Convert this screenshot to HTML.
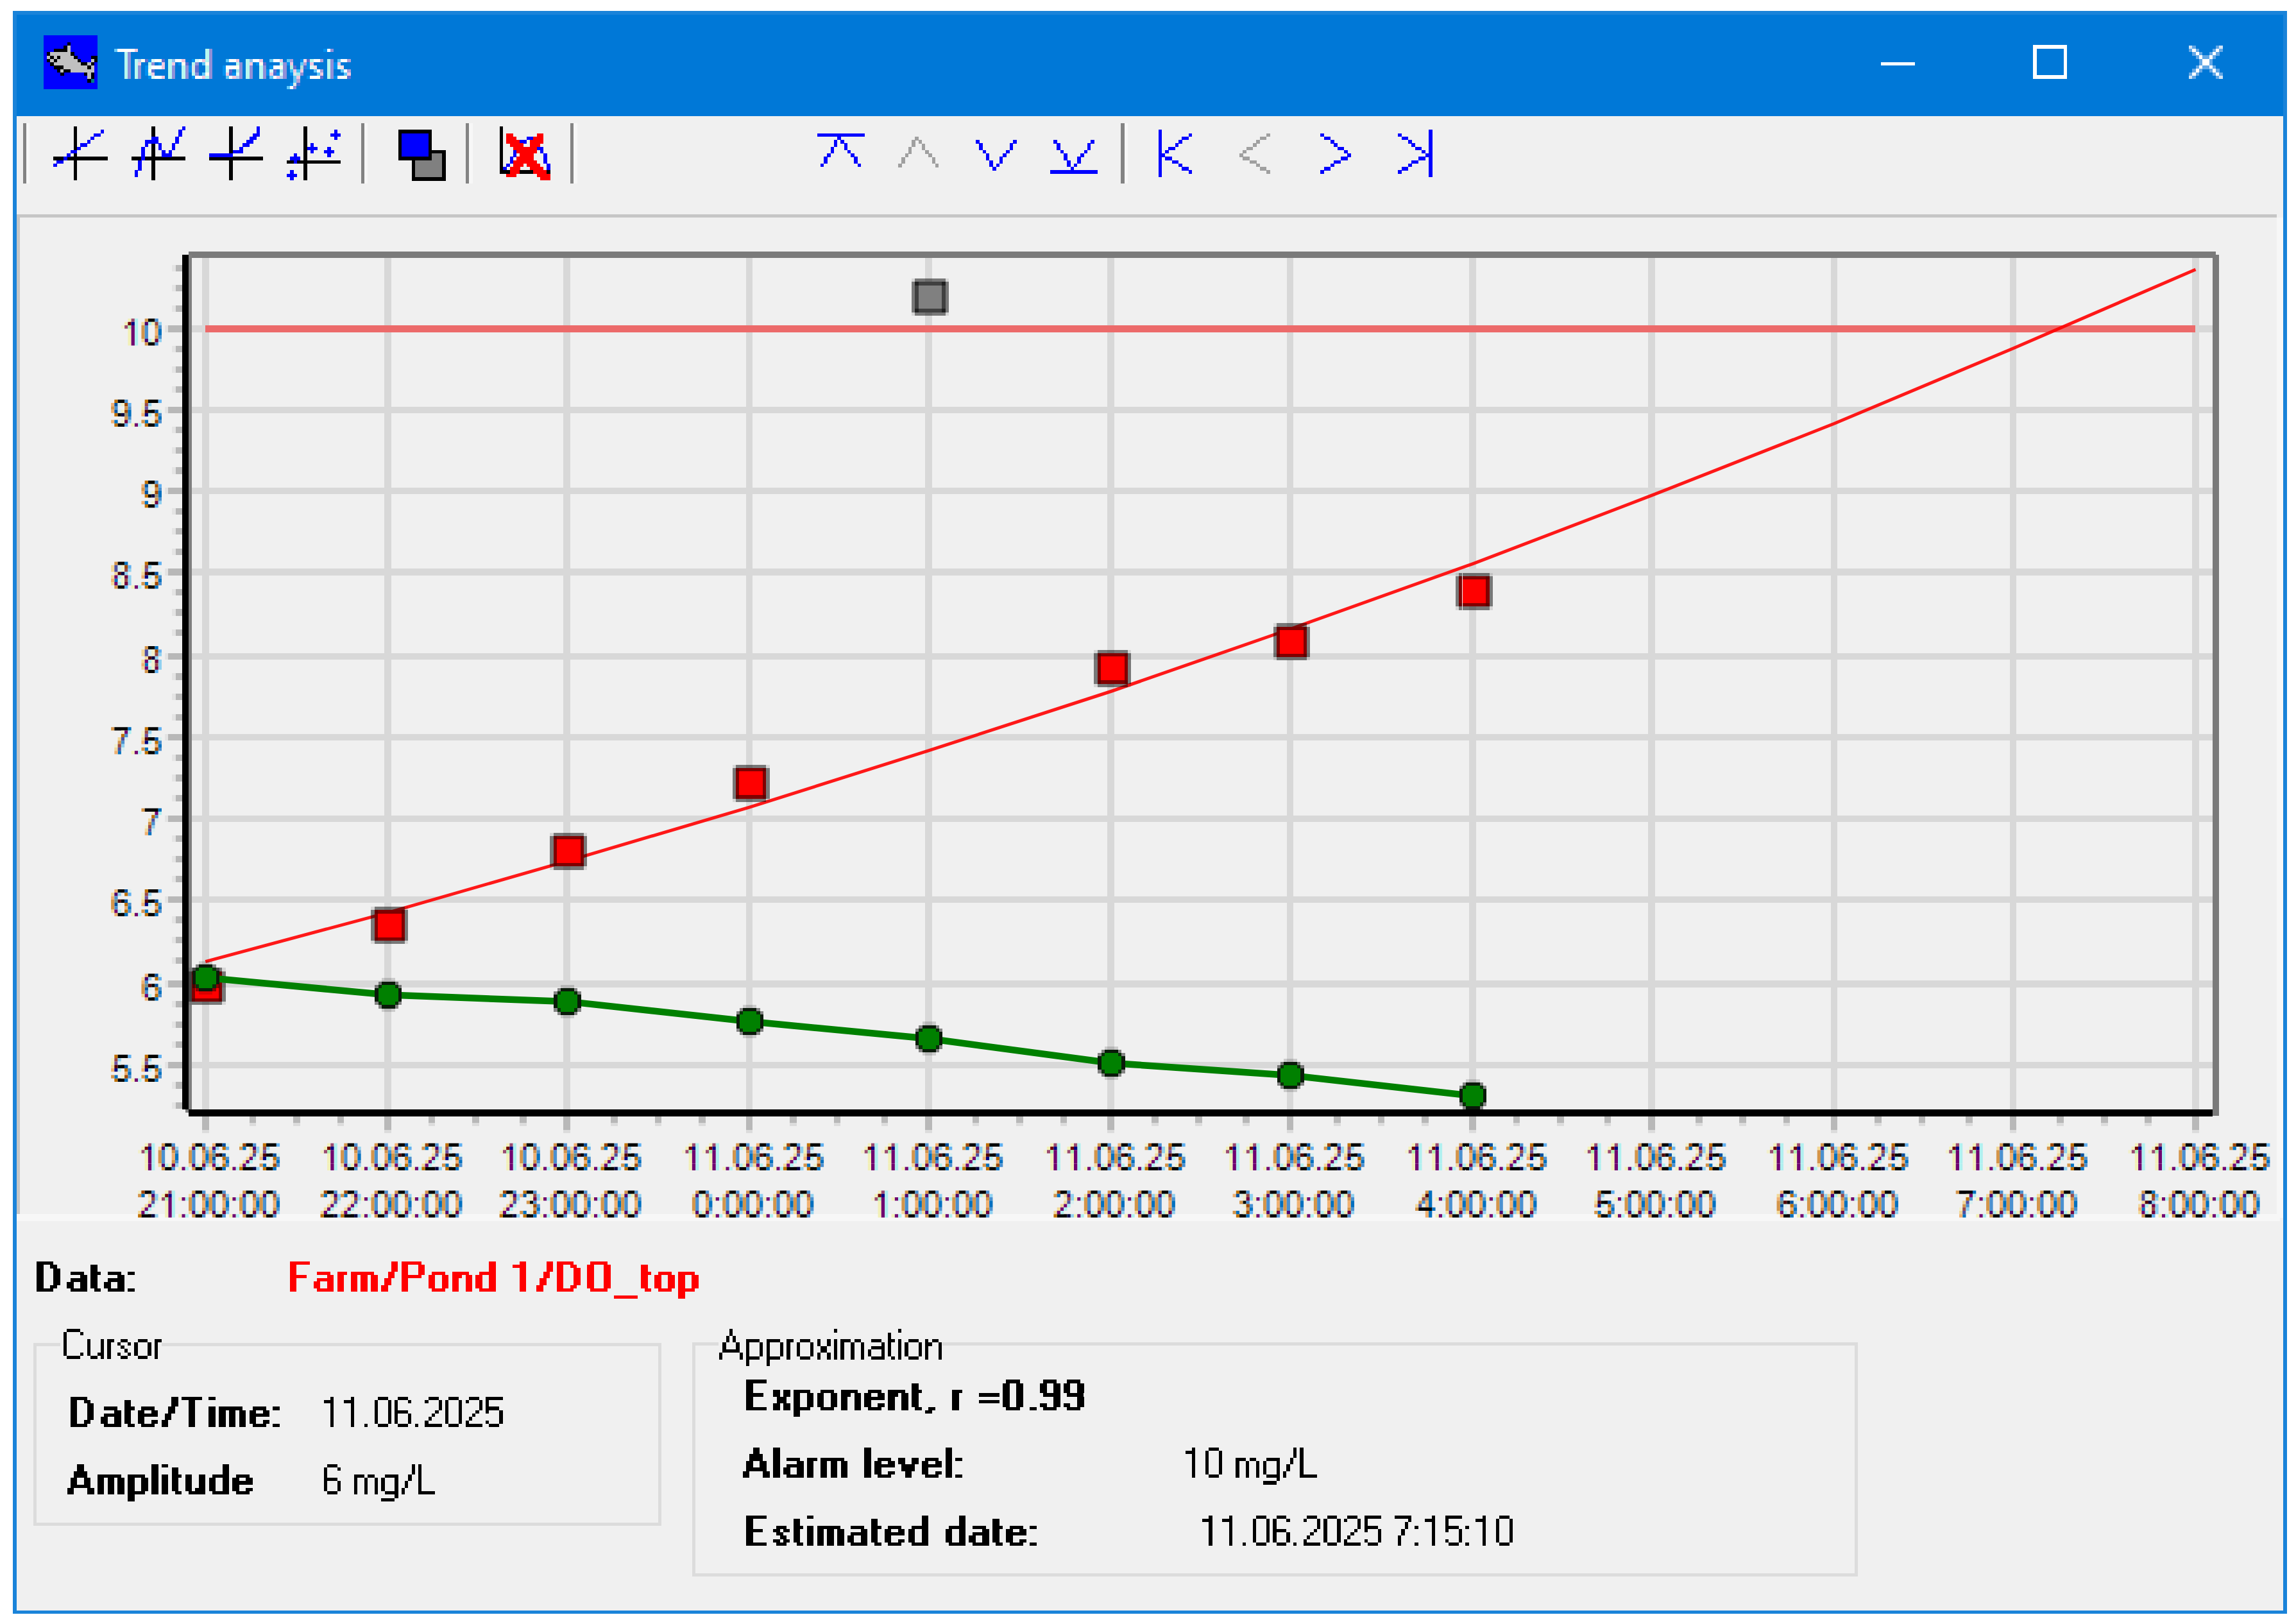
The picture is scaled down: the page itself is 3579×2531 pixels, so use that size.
<!DOCTYPE html>
<html><head><meta charset="utf-8"><title>Trend anaysis</title>
<style>html,body{margin:0;padding:0;background:#fff;width:3579px;height:2531px;overflow:hidden}svg{display:block}rect{shape-rendering:crispEdges}text{font-family:"Liberation Sans",sans-serif}</style>
</head><body>
<svg xmlns="http://www.w3.org/2000/svg" width="3579" height="2531" viewBox="0 0 3579 2531">
<rect x="0.00" y="0.00" width="3579.00" height="2531.00" fill="#ffffff" />
<rect x="20.00" y="17.00" width="3545.00" height="2498.00" fill="#1a83d9" />
<rect x="25.60" y="23.00" width="3533.40" height="158.00" fill="#0078d7" />
<rect x="25.60" y="181.00" width="3533.40" height="2328.50" fill="#f0f0f0" />
<rect x="67.90" y="55.00" width="84.21" height="84.21" fill="#0000ff" />
<rect x="104.74" y="65.53" width="5.56" height="5.56" fill="#000000" />
<rect x="99.48" y="70.79" width="5.56" height="5.56" fill="#000000" />
<rect x="104.74" y="70.79" width="5.56" height="5.56" fill="#c0c0c0" />
<rect x="83.69" y="76.05" width="5.56" height="5.56" fill="#000000" />
<rect x="88.95" y="76.05" width="5.56" height="5.56" fill="#000000" />
<rect x="94.22" y="76.05" width="5.56" height="5.56" fill="#000000" />
<rect x="99.48" y="76.05" width="5.56" height="5.56" fill="#000000" />
<rect x="104.74" y="76.05" width="5.56" height="5.56" fill="#c0c0c0" />
<rect x="73.16" y="81.31" width="5.56" height="5.56" fill="#000000" />
<rect x="78.43" y="81.31" width="5.56" height="5.56" fill="#c0c0c0" />
<rect x="83.69" y="81.31" width="5.56" height="5.56" fill="#c0c0c0" />
<rect x="88.95" y="81.31" width="5.56" height="5.56" fill="#c0c0c0" />
<rect x="94.22" y="81.31" width="5.56" height="5.56" fill="#c0c0c0" />
<rect x="99.48" y="81.31" width="5.56" height="5.56" fill="#c0c0c0" />
<rect x="104.74" y="81.31" width="5.56" height="5.56" fill="#c0c0c0" />
<rect x="110.00" y="81.31" width="5.56" height="5.56" fill="#000000" />
<rect x="73.16" y="86.58" width="5.56" height="5.56" fill="#c0c0c0" />
<rect x="78.43" y="86.58" width="5.56" height="5.56" fill="#000000" />
<rect x="83.69" y="86.58" width="5.56" height="5.56" fill="#c0c0c0" />
<rect x="88.95" y="86.58" width="5.56" height="5.56" fill="#000000" />
<rect x="94.22" y="86.58" width="5.56" height="5.56" fill="#c0c0c0" />
<rect x="99.48" y="86.58" width="5.56" height="5.56" fill="#c0c0c0" />
<rect x="104.74" y="86.58" width="5.56" height="5.56" fill="#c0c0c0" />
<rect x="110.00" y="86.58" width="5.56" height="5.56" fill="#c0c0c0" />
<rect x="115.27" y="86.58" width="5.56" height="5.56" fill="#000000" />
<rect x="141.58" y="86.58" width="5.56" height="5.56" fill="#000000" />
<rect x="146.84" y="86.58" width="5.56" height="5.56" fill="#000000" />
<rect x="73.16" y="91.84" width="5.56" height="5.56" fill="#000000" />
<rect x="78.43" y="91.84" width="5.56" height="5.56" fill="#c0c0c0" />
<rect x="83.69" y="91.84" width="5.56" height="5.56" fill="#000000" />
<rect x="88.95" y="91.84" width="5.56" height="5.56" fill="#c0c0c0" />
<rect x="94.22" y="91.84" width="5.56" height="5.56" fill="#c0c0c0" />
<rect x="99.48" y="91.84" width="5.56" height="5.56" fill="#c0c0c0" />
<rect x="104.74" y="91.84" width="5.56" height="5.56" fill="#c0c0c0" />
<rect x="110.00" y="91.84" width="5.56" height="5.56" fill="#c0c0c0" />
<rect x="115.27" y="91.84" width="5.56" height="5.56" fill="#c0c0c0" />
<rect x="120.53" y="91.84" width="5.56" height="5.56" fill="#000000" />
<rect x="141.58" y="91.84" width="5.56" height="5.56" fill="#c0c0c0" />
<rect x="146.84" y="91.84" width="5.56" height="5.56" fill="#000000" />
<rect x="78.43" y="97.10" width="5.56" height="5.56" fill="#000000" />
<rect x="83.69" y="97.10" width="5.56" height="5.56" fill="#c0c0c0" />
<rect x="88.95" y="97.10" width="5.56" height="5.56" fill="#c0c0c0" />
<rect x="94.22" y="97.10" width="5.56" height="5.56" fill="#c0c0c0" />
<rect x="99.48" y="97.10" width="5.56" height="5.56" fill="#c0c0c0" />
<rect x="104.74" y="97.10" width="5.56" height="5.56" fill="#c0c0c0" />
<rect x="110.00" y="97.10" width="5.56" height="5.56" fill="#c0c0c0" />
<rect x="115.27" y="97.10" width="5.56" height="5.56" fill="#c0c0c0" />
<rect x="120.53" y="97.10" width="5.56" height="5.56" fill="#c0c0c0" />
<rect x="125.79" y="97.10" width="5.56" height="5.56" fill="#000000" />
<rect x="131.06" y="97.10" width="5.56" height="5.56" fill="#000000" />
<rect x="136.32" y="97.10" width="5.56" height="5.56" fill="#c0c0c0" />
<rect x="141.58" y="97.10" width="5.56" height="5.56" fill="#000000" />
<rect x="83.69" y="102.37" width="5.56" height="5.56" fill="#000000" />
<rect x="88.95" y="102.37" width="5.56" height="5.56" fill="#000000" />
<rect x="94.22" y="102.37" width="5.56" height="5.56" fill="#000000" />
<rect x="99.48" y="102.37" width="5.56" height="5.56" fill="#c0c0c0" />
<rect x="104.74" y="102.37" width="5.56" height="5.56" fill="#c0c0c0" />
<rect x="110.00" y="102.37" width="5.56" height="5.56" fill="#c0c0c0" />
<rect x="115.27" y="102.37" width="5.56" height="5.56" fill="#c0c0c0" />
<rect x="120.53" y="102.37" width="5.56" height="5.56" fill="#c0c0c0" />
<rect x="125.79" y="102.37" width="5.56" height="5.56" fill="#c0c0c0" />
<rect x="131.06" y="102.37" width="5.56" height="5.56" fill="#c0c0c0" />
<rect x="136.32" y="102.37" width="5.56" height="5.56" fill="#000000" />
<rect x="141.58" y="102.37" width="5.56" height="5.56" fill="#c0c0c0" />
<rect x="88.95" y="107.63" width="5.56" height="5.56" fill="#000000" />
<rect x="94.22" y="107.63" width="5.56" height="5.56" fill="#c0c0c0" />
<rect x="99.48" y="107.63" width="5.56" height="5.56" fill="#000000" />
<rect x="104.74" y="107.63" width="5.56" height="5.56" fill="#000000" />
<rect x="110.00" y="107.63" width="5.56" height="5.56" fill="#c0c0c0" />
<rect x="115.27" y="107.63" width="5.56" height="5.56" fill="#c0c0c0" />
<rect x="120.53" y="107.63" width="5.56" height="5.56" fill="#c0c0c0" />
<rect x="125.79" y="107.63" width="5.56" height="5.56" fill="#c0c0c0" />
<rect x="131.06" y="107.63" width="5.56" height="5.56" fill="#c0c0c0" />
<rect x="136.32" y="107.63" width="5.56" height="5.56" fill="#c0c0c0" />
<rect x="141.58" y="107.63" width="5.56" height="5.56" fill="#c0c0c0" />
<rect x="94.22" y="112.89" width="5.56" height="5.56" fill="#000000" />
<rect x="131.06" y="112.89" width="5.56" height="5.56" fill="#000000" />
<rect x="136.32" y="112.89" width="5.56" height="5.56" fill="#c0c0c0" />
<rect x="141.58" y="112.89" width="5.56" height="5.56" fill="#000000" />
<rect x="136.32" y="118.16" width="5.56" height="5.56" fill="#c0c0c0" />
<rect x="141.58" y="118.16" width="5.56" height="5.56" fill="#000000" />
<rect x="136.32" y="123.42" width="5.56" height="5.56" fill="#000000" />
<rect x="141.58" y="123.42" width="5.56" height="5.56" fill="#008080" />
<path d="M178.15 76.04h5.26v5.26h-5.26zM351.83 91.83h5.26v5.26h-5.26zM420.25 91.83h5.26v5.26h-5.26zM446.56 91.83h5.26v5.26h-5.26zM525.51 91.83h5.26v5.26h-5.26zM314.99 97.09h5.26v5.26h-5.26zM467.62 97.09h5.26v5.26h-5.26zM488.67 107.62h5.26v5.26h-5.26zM530.77 107.62h5.26v5.26h-5.26zM314.99 112.88h5.26v5.26h-5.26zM493.93 112.88h5.26v5.26h-5.26zM536.03 112.88h5.26v5.26h-5.26zM351.83 118.14h5.26v5.26h-5.26zM420.25 118.14h5.26v5.26h-5.26zM457.09 118.14h5.26v5.26h-5.26zM457.09 123.41h5.26v5.26h-5.26zM446.56 133.93h5.26v5.26h-5.26z" fill="#60c8f8" shape-rendering="crispEdges"/><path d="M183.41 76.04h26.31v5.26h-26.31zM509.72 76.04h5.26v5.26h-5.26zM241.31 91.83h5.26v5.26h-5.26zM272.88 91.83h10.53v5.26h-10.53zM309.73 91.83h5.26v5.26h-5.26zM357.09 91.83h10.53v5.26h-10.53zM393.93 91.83h10.53v5.26h-10.53zM425.51 91.83h10.53v5.26h-10.53zM488.67 91.83h10.53v5.26h-10.53zM530.77 91.83h10.53v5.26h-10.53zM236.04 102.36h15.79v5.26h-15.79zM351.83 102.36h15.79v5.26h-15.79zM425.51 102.36h10.53v5.26h-10.53zM493.93 107.62h5.26v5.26h-5.26zM536.03 107.62h5.26v5.26h-5.26zM241.31 118.14h10.53v5.26h-10.53zM304.46 118.14h10.53v5.26h-10.53zM357.09 118.14h5.26v5.26h-5.26zM425.51 118.14h5.26v5.26h-5.26zM483.40 118.14h10.53v5.26h-10.53zM525.51 118.14h10.53v5.26h-10.53zM451.83 133.93h5.26v5.26h-5.26z" fill="#ffffff" shape-rendering="crispEdges"/><path d="M209.73 76.04h5.26v5.26h-5.26zM283.41 91.83h5.26v5.26h-5.26zM314.99 91.83h5.26v5.26h-5.26zM367.62 91.83h5.26v5.26h-5.26zM404.46 91.83h5.26v5.26h-5.26zM436.04 91.83h5.26v5.26h-5.26zM214.99 97.09h5.26v5.26h-5.26zM251.83 97.09h5.26v5.26h-5.26zM267.62 97.09h5.26v5.26h-5.26zM388.67 97.09h5.26v5.26h-5.26zM451.83 97.09h5.26v5.26h-5.26zM483.40 97.09h5.26v5.26h-5.26zM525.51 97.09h5.26v5.26h-5.26zM251.83 102.36h5.26v5.26h-5.26zM457.09 107.62h5.26v5.26h-5.26zM467.62 107.62h5.26v5.26h-5.26zM236.04 112.88h5.26v5.26h-5.26zM351.83 112.88h5.26v5.26h-5.26zM420.25 112.88h5.26v5.26h-5.26zM499.19 112.88h5.26v5.26h-5.26zM541.30 112.88h5.26v5.26h-5.26zM251.83 118.14h5.26v5.26h-5.26zM314.99 118.14h5.26v5.26h-5.26zM362.36 118.14h5.26v5.26h-5.26zM430.77 118.14h5.26v5.26h-5.26zM462.35 118.14h5.26v5.26h-5.26z" fill="#f0c8e0" shape-rendering="crispEdges"/><path d="M320.25 76.04h5.26v5.26h-5.26zM193.94 81.30h5.26v5.26h-5.26zM320.25 81.30h5.26v5.26h-5.26zM193.94 86.57h5.26v5.26h-5.26zM320.25 86.57h5.26v5.26h-5.26zM193.94 91.83h5.26v5.26h-5.26zM209.73 91.83h5.26v5.26h-5.26zM262.36 91.83h5.26v5.26h-5.26zM320.25 91.83h5.26v5.26h-5.26zM383.41 91.83h5.26v5.26h-5.26zM483.40 91.83h5.26v5.26h-5.26zM509.72 91.83h5.26v5.26h-5.26zM193.94 97.09h5.26v5.26h-5.26zM209.73 97.09h5.26v5.26h-5.26zM230.78 97.09h5.26v5.26h-5.26zM262.36 97.09h5.26v5.26h-5.26zM299.20 97.09h5.26v5.26h-5.26zM367.62 97.09h5.26v5.26h-5.26zM383.41 97.09h5.26v5.26h-5.26zM436.04 97.09h5.26v5.26h-5.26zM509.72 97.09h5.26v5.26h-5.26zM193.94 102.36h5.26v5.26h-5.26zM209.73 102.36h5.26v5.26h-5.26zM262.36 102.36h5.26v5.26h-5.26zM283.41 102.36h5.26v5.26h-5.26zM320.25 102.36h5.26v5.26h-5.26zM383.41 102.36h5.26v5.26h-5.26zM404.46 102.36h5.26v5.26h-5.26zM509.72 102.36h5.26v5.26h-5.26zM193.94 107.62h5.26v5.26h-5.26zM209.73 107.62h5.26v5.26h-5.26zM262.36 107.62h5.26v5.26h-5.26zM283.41 107.62h5.26v5.26h-5.26zM320.25 107.62h5.26v5.26h-5.26zM383.41 107.62h5.26v5.26h-5.26zM404.46 107.62h5.26v5.26h-5.26zM509.72 107.62h5.26v5.26h-5.26zM193.94 112.88h5.26v5.26h-5.26zM209.73 112.88h5.26v5.26h-5.26zM230.78 112.88h5.26v5.26h-5.26zM262.36 112.88h5.26v5.26h-5.26zM283.41 112.88h5.26v5.26h-5.26zM299.20 112.88h5.26v5.26h-5.26zM383.41 112.88h5.26v5.26h-5.26zM404.46 112.88h5.26v5.26h-5.26zM509.72 112.88h5.26v5.26h-5.26zM193.94 118.14h5.26v5.26h-5.26zM209.73 118.14h5.26v5.26h-5.26zM262.36 118.14h5.26v5.26h-5.26zM283.41 118.14h5.26v5.26h-5.26zM320.25 118.14h5.26v5.26h-5.26zM383.41 118.14h5.26v5.26h-5.26zM404.46 118.14h5.26v5.26h-5.26zM509.72 118.14h5.26v5.26h-5.26z" fill="#b8f8f0" shape-rendering="crispEdges"/><path d="M325.51 76.04h5.26v5.26h-5.26zM514.98 76.04h5.26v5.26h-5.26zM199.20 81.30h5.26v5.26h-5.26zM325.51 81.30h5.26v5.26h-5.26zM199.20 86.57h5.26v5.26h-5.26zM325.51 86.57h5.26v5.26h-5.26zM199.20 91.83h5.26v5.26h-5.26zM325.51 91.83h5.26v5.26h-5.26zM514.98 91.83h5.26v5.26h-5.26zM199.20 97.09h5.26v5.26h-5.26zM236.04 97.09h5.26v5.26h-5.26zM304.46 97.09h5.26v5.26h-5.26zM325.51 97.09h5.26v5.26h-5.26zM372.88 97.09h5.26v5.26h-5.26zM441.30 97.09h5.26v5.26h-5.26zM514.98 97.09h5.26v5.26h-5.26zM199.20 102.36h5.26v5.26h-5.26zM214.99 102.36h5.26v5.26h-5.26zM267.62 102.36h5.26v5.26h-5.26zM288.67 102.36h5.26v5.26h-5.26zM325.51 102.36h5.26v5.26h-5.26zM372.88 102.36h5.26v5.26h-5.26zM388.67 102.36h5.26v5.26h-5.26zM409.72 102.36h5.26v5.26h-5.26zM441.30 102.36h5.26v5.26h-5.26zM514.98 102.36h5.26v5.26h-5.26zM199.20 107.62h5.26v5.26h-5.26zM214.99 107.62h5.26v5.26h-5.26zM267.62 107.62h5.26v5.26h-5.26zM288.67 107.62h5.26v5.26h-5.26zM325.51 107.62h5.26v5.26h-5.26zM372.88 107.62h5.26v5.26h-5.26zM388.67 107.62h5.26v5.26h-5.26zM409.72 107.62h5.26v5.26h-5.26zM441.30 107.62h5.26v5.26h-5.26zM514.98 107.62h5.26v5.26h-5.26zM199.20 112.88h5.26v5.26h-5.26zM214.99 112.88h5.26v5.26h-5.26zM267.62 112.88h5.26v5.26h-5.26zM288.67 112.88h5.26v5.26h-5.26zM304.46 112.88h5.26v5.26h-5.26zM325.51 112.88h5.26v5.26h-5.26zM372.88 112.88h5.26v5.26h-5.26zM388.67 112.88h5.26v5.26h-5.26zM409.72 112.88h5.26v5.26h-5.26zM441.30 112.88h5.26v5.26h-5.26zM467.62 112.88h5.26v5.26h-5.26zM514.98 112.88h5.26v5.26h-5.26zM199.20 118.14h5.26v5.26h-5.26zM214.99 118.14h5.26v5.26h-5.26zM267.62 118.14h5.26v5.26h-5.26zM288.67 118.14h5.26v5.26h-5.26zM325.51 118.14h5.26v5.26h-5.26zM372.88 118.14h5.26v5.26h-5.26zM388.67 118.14h5.26v5.26h-5.26zM409.72 118.14h5.26v5.26h-5.26zM441.30 118.14h5.26v5.26h-5.26zM514.98 118.14h5.26v5.26h-5.26zM457.09 133.93h5.26v5.26h-5.26z" fill="#9090d8" shape-rendering="crispEdges"/><path d="M504.46 76.04h5.26v5.26h-5.26zM230.78 91.83h5.26v5.26h-5.26zM299.20 91.83h5.26v5.26h-5.26zM467.62 91.83h5.26v5.26h-5.26zM246.57 97.09h5.26v5.26h-5.26zM278.15 97.09h5.26v5.26h-5.26zM399.20 97.09h5.26v5.26h-5.26zM446.56 97.09h5.26v5.26h-5.26zM478.14 97.09h5.26v5.26h-5.26zM520.25 97.09h5.26v5.26h-5.26zM225.52 102.36h5.26v5.26h-5.26zM293.94 102.36h5.26v5.26h-5.26zM346.57 102.36h5.26v5.26h-5.26zM420.25 102.36h5.26v5.26h-5.26zM478.14 102.36h5.26v5.26h-5.26zM520.25 102.36h5.26v5.26h-5.26zM225.52 107.62h5.26v5.26h-5.26zM293.94 107.62h5.26v5.26h-5.26zM346.57 107.62h5.26v5.26h-5.26zM414.99 107.62h5.26v5.26h-5.26zM225.52 112.88h5.26v5.26h-5.26zM346.57 112.88h5.26v5.26h-5.26zM362.36 112.88h5.26v5.26h-5.26zM414.99 112.88h5.26v5.26h-5.26zM430.77 112.88h5.26v5.26h-5.26zM451.83 112.88h5.26v5.26h-5.26zM230.78 118.14h5.26v5.26h-5.26zM299.20 118.14h5.26v5.26h-5.26zM478.14 118.14h5.26v5.26h-5.26zM520.25 118.14h5.26v5.26h-5.26zM451.83 128.67h5.26v5.26h-5.26z" fill="#0090f0" shape-rendering="crispEdges"/><path d="M214.99 91.83h5.26v5.26h-5.26zM367.62 118.14h5.26v5.26h-5.26zM436.04 118.14h5.26v5.26h-5.26z" fill="#b8d0f0" shape-rendering="crispEdges"/><path d="M220.25 91.83h5.26v5.26h-5.26zM246.57 91.83h5.26v5.26h-5.26zM283.41 97.09h5.26v5.26h-5.26zM320.25 97.09h5.26v5.26h-5.26zM404.46 97.09h5.26v5.26h-5.26zM367.62 102.36h5.26v5.26h-5.26zM436.04 102.36h5.26v5.26h-5.26zM230.78 107.62h5.26v5.26h-5.26zM320.25 112.88h5.26v5.26h-5.26zM493.93 118.14h5.26v5.26h-5.26zM536.03 118.14h5.26v5.26h-5.26z" fill="#fffff0" shape-rendering="crispEdges"/><path d="M225.52 91.83h5.26v5.26h-5.26zM251.83 91.83h5.26v5.26h-5.26zM478.14 91.83h5.26v5.26h-5.26zM288.67 97.09h5.26v5.26h-5.26zM409.72 97.09h5.26v5.26h-5.26zM304.46 102.36h5.26v5.26h-5.26zM457.09 102.36h5.26v5.26h-5.26zM236.04 107.62h5.26v5.26h-5.26zM304.46 107.62h5.26v5.26h-5.26zM357.09 107.62h5.26v5.26h-5.26zM425.51 107.62h5.26v5.26h-5.26zM499.19 118.14h5.26v5.26h-5.26zM541.30 118.14h5.26v5.26h-5.26z" fill="#6070d0" shape-rendering="crispEdges"/><path d="M236.04 91.83h5.26v5.26h-5.26zM304.46 91.83h5.26v5.26h-5.26zM230.78 102.36h5.26v5.26h-5.26zM483.40 102.36h5.26v5.26h-5.26zM525.51 102.36h5.26v5.26h-5.26zM351.83 107.62h5.26v5.26h-5.26zM420.25 107.62h5.26v5.26h-5.26zM367.62 112.88h5.26v5.26h-5.26zM436.04 112.88h5.26v5.26h-5.26zM236.04 118.14h5.26v5.26h-5.26z" fill="#d8fcf8" shape-rendering="crispEdges"/><path d="M267.62 91.83h5.26v5.26h-5.26zM388.67 91.83h5.26v5.26h-5.26z" fill="#90c0f0" shape-rendering="crispEdges"/><path d="M451.83 91.83h5.26v5.26h-5.26zM499.19 91.83h5.26v5.26h-5.26zM541.30 91.83h5.26v5.26h-5.26zM472.88 97.09h5.26v5.26h-5.26zM499.19 107.62h5.26v5.26h-5.26zM541.30 107.62h5.26v5.26h-5.26zM462.35 123.41h5.26v5.26h-5.26z" fill="#b0a0d8" shape-rendering="crispEdges"/><path d="M472.88 91.83h5.26v5.26h-5.26zM488.67 102.36h5.26v5.26h-5.26zM530.77 102.36h5.26v5.26h-5.26z" fill="#fce0e8" shape-rendering="crispEdges"/><path d="M299.20 102.36h5.26v5.26h-5.26zM299.20 107.62h5.26v5.26h-5.26zM457.09 112.88h5.26v5.26h-5.26zM457.09 128.67h5.26v5.26h-5.26z" fill="#d8e8e8" shape-rendering="crispEdges"/><path d="M451.83 102.36h5.26v5.26h-5.26z" fill="#b0f0e0" shape-rendering="crispEdges"/><path d="M467.62 102.36h5.26v5.26h-5.26z" fill="#b0e0e0" shape-rendering="crispEdges"/><path d="M472.88 102.36h5.26v5.26h-5.26zM357.09 112.88h5.26v5.26h-5.26zM425.51 112.88h5.26v5.26h-5.26zM462.35 128.67h5.26v5.26h-5.26z" fill="#4070d8" shape-rendering="crispEdges"/><path d="M367.62 107.62h5.26v5.26h-5.26zM436.04 107.62h5.26v5.26h-5.26zM462.35 112.88h5.26v5.26h-5.26z" fill="#a8e8f0" shape-rendering="crispEdges"/><path d="M451.83 107.62h5.26v5.26h-5.26zM462.35 107.62h5.26v5.26h-5.26z" fill="#40c0f8" shape-rendering="crispEdges"/>
<rect x="2932.30" y="96.90" width="52.70" height="5.20" fill="#ffffff" />
<rect x="3171.9" y="72.9" width="47.7" height="47.2" fill="none" stroke="#ffffff" stroke-width="5.8"/>
<rect x="3412.10" y="70.60" width="5.46" height="5.46" fill="#d0e4f6" />
<rect x="3417.36" y="70.60" width="5.46" height="5.46" fill="#64a8e6" />
<rect x="3454.20" y="70.60" width="5.46" height="5.46" fill="#64a8e6" />
<rect x="3459.47" y="70.60" width="5.46" height="5.46" fill="#d0e4f6" />
<rect x="3412.10" y="75.86" width="5.46" height="5.46" fill="#64a8e6" />
<rect x="3417.36" y="75.86" width="5.46" height="5.46" fill="#ffffff" />
<rect x="3422.63" y="75.86" width="5.46" height="5.46" fill="#64a8e6" />
<rect x="3448.94" y="75.86" width="5.46" height="5.46" fill="#64a8e6" />
<rect x="3454.20" y="75.86" width="5.46" height="5.46" fill="#ffffff" />
<rect x="3459.47" y="75.86" width="5.46" height="5.46" fill="#64a8e6" />
<rect x="3417.36" y="81.13" width="5.46" height="5.46" fill="#64a8e6" />
<rect x="3422.63" y="81.13" width="5.46" height="5.46" fill="#ffffff" />
<rect x="3427.89" y="81.13" width="5.46" height="5.46" fill="#64a8e6" />
<rect x="3443.68" y="81.13" width="5.46" height="5.46" fill="#64a8e6" />
<rect x="3448.94" y="81.13" width="5.46" height="5.46" fill="#ffffff" />
<rect x="3454.20" y="81.13" width="5.46" height="5.46" fill="#64a8e6" />
<rect x="3422.63" y="86.39" width="5.46" height="5.46" fill="#64a8e6" />
<rect x="3427.89" y="86.39" width="5.46" height="5.46" fill="#ffffff" />
<rect x="3433.15" y="86.39" width="5.46" height="5.46" fill="#64a8e6" />
<rect x="3438.41" y="86.39" width="5.46" height="5.46" fill="#64a8e6" />
<rect x="3443.68" y="86.39" width="5.46" height="5.46" fill="#ffffff" />
<rect x="3448.94" y="86.39" width="5.46" height="5.46" fill="#64a8e6" />
<rect x="3427.89" y="91.65" width="5.46" height="5.46" fill="#64a8e6" />
<rect x="3433.15" y="91.65" width="5.46" height="5.46" fill="#ffffff" />
<rect x="3438.41" y="91.65" width="5.46" height="5.46" fill="#ffffff" />
<rect x="3443.68" y="91.65" width="5.46" height="5.46" fill="#64a8e6" />
<rect x="3427.89" y="96.91" width="5.46" height="5.46" fill="#64a8e6" />
<rect x="3433.15" y="96.91" width="5.46" height="5.46" fill="#ffffff" />
<rect x="3438.41" y="96.91" width="5.46" height="5.46" fill="#ffffff" />
<rect x="3443.68" y="96.91" width="5.46" height="5.46" fill="#64a8e6" />
<rect x="3422.63" y="102.18" width="5.46" height="5.46" fill="#64a8e6" />
<rect x="3427.89" y="102.18" width="5.46" height="5.46" fill="#ffffff" />
<rect x="3433.15" y="102.18" width="5.46" height="5.46" fill="#64a8e6" />
<rect x="3438.41" y="102.18" width="5.46" height="5.46" fill="#64a8e6" />
<rect x="3443.68" y="102.18" width="5.46" height="5.46" fill="#ffffff" />
<rect x="3448.94" y="102.18" width="5.46" height="5.46" fill="#64a8e6" />
<rect x="3417.36" y="107.44" width="5.46" height="5.46" fill="#64a8e6" />
<rect x="3422.63" y="107.44" width="5.46" height="5.46" fill="#ffffff" />
<rect x="3427.89" y="107.44" width="5.46" height="5.46" fill="#64a8e6" />
<rect x="3443.68" y="107.44" width="5.46" height="5.46" fill="#64a8e6" />
<rect x="3448.94" y="107.44" width="5.46" height="5.46" fill="#ffffff" />
<rect x="3454.20" y="107.44" width="5.46" height="5.46" fill="#64a8e6" />
<rect x="3412.10" y="112.70" width="5.46" height="5.46" fill="#64a8e6" />
<rect x="3417.36" y="112.70" width="5.46" height="5.46" fill="#ffffff" />
<rect x="3422.63" y="112.70" width="5.46" height="5.46" fill="#64a8e6" />
<rect x="3448.94" y="112.70" width="5.46" height="5.46" fill="#64a8e6" />
<rect x="3454.20" y="112.70" width="5.46" height="5.46" fill="#ffffff" />
<rect x="3459.47" y="112.70" width="5.46" height="5.46" fill="#64a8e6" />
<rect x="3412.10" y="117.97" width="5.46" height="5.46" fill="#d0e4f6" />
<rect x="3417.36" y="117.97" width="5.46" height="5.46" fill="#64a8e6" />
<rect x="3454.20" y="117.97" width="5.46" height="5.46" fill="#64a8e6" />
<rect x="3459.47" y="117.97" width="5.46" height="5.46" fill="#d0e4f6" />
<rect x="36.00" y="191.80" width="5.20" height="94.50" fill="#838383" />
<rect x="41.20" y="191.80" width="5.20" height="94.50" fill="#f7f7f7" />
<rect x="562.70" y="191.80" width="5.20" height="94.50" fill="#838383" />
<rect x="567.90" y="191.80" width="5.20" height="94.50" fill="#f7f7f7" />
<rect x="726.20" y="191.80" width="5.20" height="94.50" fill="#838383" />
<rect x="731.40" y="191.80" width="5.20" height="94.50" fill="#f7f7f7" />
<rect x="889.20" y="191.80" width="5.20" height="94.50" fill="#838383" />
<rect x="894.40" y="191.80" width="5.20" height="94.50" fill="#f7f7f7" />
<rect x="1747.30" y="191.80" width="5.20" height="94.50" fill="#838383" />
<rect x="1752.50" y="191.80" width="5.20" height="94.50" fill="#f7f7f7" />
<rect x="83.20" y="244.37" width="84.46" height="5.51" fill="#000" />
<rect x="114.78" y="197.00" width="5.51" height="84.46" fill="#000" />
<rect x="83.20" y="254.89" width="5.51" height="5.51" fill="#0000ff" />
<rect x="88.46" y="249.63" width="5.51" height="5.51" fill="#0000ff" />
<rect x="93.73" y="249.63" width="5.51" height="5.51" fill="#0000ff" />
<rect x="98.99" y="244.37" width="5.51" height="5.51" fill="#0000ff" />
<rect x="104.25" y="239.10" width="5.51" height="5.51" fill="#0000ff" />
<rect x="109.52" y="233.84" width="5.51" height="5.51" fill="#0000ff" />
<rect x="114.78" y="233.84" width="5.51" height="5.51" fill="#0000ff" />
<rect x="120.04" y="228.58" width="5.51" height="5.51" fill="#0000ff" />
<rect x="125.30" y="223.31" width="5.51" height="5.51" fill="#0000ff" />
<rect x="130.57" y="223.31" width="5.51" height="5.51" fill="#0000ff" />
<rect x="135.83" y="218.05" width="5.51" height="5.51" fill="#0000ff" />
<rect x="141.09" y="212.79" width="5.51" height="5.51" fill="#0000ff" />
<rect x="146.36" y="207.53" width="5.51" height="5.51" fill="#0000ff" />
<rect x="151.62" y="207.53" width="5.51" height="5.51" fill="#0000ff" />
<rect x="156.88" y="202.26" width="5.51" height="5.51" fill="#0000ff" />
<rect x="204.70" y="244.37" width="84.46" height="5.51" fill="#000" />
<rect x="236.28" y="197.00" width="5.51" height="84.46" fill="#000" />
<rect x="209.96" y="265.42" width="5.51" height="5.51" fill="#0000ff" />
<rect x="209.96" y="270.68" width="5.51" height="5.51" fill="#0000ff" />
<rect x="215.23" y="249.63" width="5.51" height="5.51" fill="#0000ff" />
<rect x="215.23" y="254.89" width="5.51" height="5.51" fill="#0000ff" />
<rect x="215.23" y="260.16" width="5.51" height="5.51" fill="#0000ff" />
<rect x="220.49" y="228.58" width="5.51" height="5.51" fill="#0000ff" />
<rect x="220.49" y="233.84" width="5.51" height="5.51" fill="#0000ff" />
<rect x="220.49" y="239.10" width="5.51" height="5.51" fill="#0000ff" />
<rect x="220.49" y="244.37" width="5.51" height="5.51" fill="#0000ff" />
<rect x="225.75" y="218.05" width="5.51" height="5.51" fill="#0000ff" />
<rect x="225.75" y="223.31" width="5.51" height="5.51" fill="#0000ff" />
<rect x="231.01" y="218.05" width="5.51" height="5.51" fill="#0000ff" />
<rect x="236.28" y="212.79" width="5.51" height="5.51" fill="#0000ff" />
<rect x="236.28" y="218.05" width="5.51" height="5.51" fill="#0000ff" />
<rect x="241.54" y="212.79" width="5.51" height="5.51" fill="#0000ff" />
<rect x="241.54" y="218.05" width="5.51" height="5.51" fill="#0000ff" />
<rect x="246.80" y="223.31" width="5.51" height="5.51" fill="#0000ff" />
<rect x="246.80" y="228.58" width="5.51" height="5.51" fill="#0000ff" />
<rect x="252.07" y="233.84" width="5.51" height="5.51" fill="#0000ff" />
<rect x="252.07" y="239.10" width="5.51" height="5.51" fill="#0000ff" />
<rect x="257.33" y="239.10" width="5.51" height="5.51" fill="#0000ff" />
<rect x="262.59" y="233.84" width="5.51" height="5.51" fill="#0000ff" />
<rect x="262.59" y="239.10" width="5.51" height="5.51" fill="#0000ff" />
<rect x="267.86" y="223.31" width="5.51" height="5.51" fill="#0000ff" />
<rect x="267.86" y="228.58" width="5.51" height="5.51" fill="#0000ff" />
<rect x="273.12" y="212.79" width="5.51" height="5.51" fill="#0000ff" />
<rect x="273.12" y="218.05" width="5.51" height="5.51" fill="#0000ff" />
<rect x="278.38" y="202.26" width="5.51" height="5.51" fill="#0000ff" />
<rect x="278.38" y="207.53" width="5.51" height="5.51" fill="#0000ff" />
<rect x="283.64" y="197.00" width="5.51" height="5.51" fill="#0000ff" />
<rect x="325.85" y="244.37" width="84.46" height="5.51" fill="#000" />
<rect x="357.43" y="197.00" width="5.51" height="84.46" fill="#000" />
<rect x="325.85" y="239.10" width="5.51" height="5.51" fill="#0000ff" />
<rect x="331.11" y="239.10" width="5.51" height="5.51" fill="#0000ff" />
<rect x="336.38" y="239.10" width="5.51" height="5.51" fill="#0000ff" />
<rect x="341.64" y="239.10" width="5.51" height="5.51" fill="#0000ff" />
<rect x="346.90" y="239.10" width="5.51" height="5.51" fill="#0000ff" />
<rect x="352.17" y="239.10" width="5.51" height="5.51" fill="#0000ff" />
<rect x="357.43" y="239.10" width="5.51" height="5.51" fill="#0000ff" />
<rect x="362.69" y="233.84" width="5.51" height="5.51" fill="#0000ff" />
<rect x="367.95" y="233.84" width="5.51" height="5.51" fill="#0000ff" />
<rect x="373.22" y="233.84" width="5.51" height="5.51" fill="#0000ff" />
<rect x="373.22" y="228.58" width="5.51" height="5.51" fill="#0000ff" />
<rect x="378.48" y="223.31" width="5.51" height="5.51" fill="#0000ff" />
<rect x="383.74" y="223.31" width="5.51" height="5.51" fill="#0000ff" />
<rect x="383.74" y="218.05" width="5.51" height="5.51" fill="#0000ff" />
<rect x="389.01" y="218.05" width="5.51" height="5.51" fill="#0000ff" />
<rect x="389.01" y="212.79" width="5.51" height="5.51" fill="#0000ff" />
<rect x="394.27" y="212.79" width="5.51" height="5.51" fill="#0000ff" />
<rect x="394.27" y="207.53" width="5.51" height="5.51" fill="#0000ff" />
<rect x="399.53" y="207.53" width="5.51" height="5.51" fill="#0000ff" />
<rect x="399.53" y="202.26" width="5.51" height="5.51" fill="#0000ff" />
<rect x="399.53" y="197.00" width="5.51" height="5.51" fill="#0000ff" />
<rect x="447.00" y="249.63" width="84.46" height="5.51" fill="#000" />
<rect x="473.31" y="197.00" width="5.51" height="84.46" fill="#000" />
<rect x="520.68" y="207.53" width="5.51" height="5.51" fill="#0000ff" />
<rect x="515.42" y="207.53" width="5.51" height="5.51" fill="#0000ff" />
<rect x="525.94" y="207.53" width="5.51" height="5.51" fill="#0000ff" />
<rect x="520.68" y="202.26" width="5.51" height="5.51" fill="#0000ff" />
<rect x="520.68" y="212.79" width="5.51" height="5.51" fill="#0000ff" />
<rect x="483.84" y="228.58" width="5.51" height="5.51" fill="#0000ff" />
<rect x="478.58" y="228.58" width="5.51" height="5.51" fill="#0000ff" />
<rect x="489.10" y="228.58" width="5.51" height="5.51" fill="#0000ff" />
<rect x="483.84" y="223.31" width="5.51" height="5.51" fill="#0000ff" />
<rect x="483.84" y="233.84" width="5.51" height="5.51" fill="#0000ff" />
<rect x="510.16" y="233.84" width="5.51" height="5.51" fill="#0000ff" />
<rect x="504.89" y="233.84" width="5.51" height="5.51" fill="#0000ff" />
<rect x="515.42" y="233.84" width="5.51" height="5.51" fill="#0000ff" />
<rect x="510.16" y="228.58" width="5.51" height="5.51" fill="#0000ff" />
<rect x="510.16" y="239.10" width="5.51" height="5.51" fill="#0000ff" />
<rect x="457.53" y="244.37" width="5.51" height="5.51" fill="#0000ff" />
<rect x="452.26" y="244.37" width="5.51" height="5.51" fill="#0000ff" />
<rect x="462.79" y="244.37" width="5.51" height="5.51" fill="#0000ff" />
<rect x="457.53" y="239.10" width="5.51" height="5.51" fill="#0000ff" />
<rect x="457.53" y="249.63" width="5.51" height="5.51" fill="#0000ff" />
<rect x="452.26" y="270.68" width="5.51" height="5.51" fill="#0000ff" />
<rect x="447.00" y="270.68" width="5.51" height="5.51" fill="#0000ff" />
<rect x="457.53" y="270.68" width="5.51" height="5.51" fill="#0000ff" />
<rect x="452.26" y="265.42" width="5.51" height="5.51" fill="#0000ff" />
<rect x="452.26" y="275.94" width="5.51" height="5.51" fill="#0000ff" />
<rect x="641.90" y="234.20" width="52.63" height="47.37" fill="#000" />
<rect x="647.16" y="239.46" width="42.10" height="36.84" fill="#808080" />
<rect x="620.80" y="202.30" width="52.63" height="47.37" fill="#000" />
<rect x="626.06" y="207.56" width="42.10" height="36.84" fill="#0000ff" />
<rect x="778.80" y="197.00" width="5.51" height="5.51" fill="#000000" />
<rect x="778.80" y="202.26" width="5.51" height="5.51" fill="#000000" />
<rect x="778.80" y="207.53" width="5.51" height="5.51" fill="#000000" />
<rect x="789.33" y="207.53" width="10.78" height="5.51" fill="#ff0000" />
<rect x="836.69" y="207.53" width="10.78" height="5.51" fill="#ff0000" />
<rect x="778.80" y="212.79" width="5.51" height="5.51" fill="#000000" />
<rect x="789.33" y="212.79" width="16.04" height="5.51" fill="#ff0000" />
<rect x="820.90" y="212.79" width="10.78" height="5.51" fill="#0000ff" />
<rect x="831.43" y="212.79" width="16.04" height="5.51" fill="#ff0000" />
<rect x="778.80" y="218.05" width="5.51" height="5.51" fill="#000000" />
<rect x="789.33" y="218.05" width="21.30" height="5.51" fill="#ff0000" />
<rect x="810.38" y="218.05" width="10.78" height="5.51" fill="#0000ff" />
<rect x="826.17" y="218.05" width="21.30" height="5.51" fill="#ff0000" />
<rect x="778.80" y="223.31" width="5.51" height="5.51" fill="#000000" />
<rect x="794.59" y="223.31" width="21.30" height="5.51" fill="#ff0000" />
<rect x="826.17" y="223.31" width="16.04" height="5.51" fill="#ff0000" />
<rect x="778.80" y="228.58" width="5.51" height="5.51" fill="#000000" />
<rect x="799.85" y="228.58" width="37.09" height="5.51" fill="#ff0000" />
<rect x="836.69" y="228.58" width="10.78" height="5.51" fill="#0000ff" />
<rect x="778.80" y="233.84" width="5.51" height="5.51" fill="#000000" />
<rect x="799.85" y="233.84" width="5.51" height="5.51" fill="#0000ff" />
<rect x="805.12" y="233.84" width="31.83" height="5.51" fill="#ff0000" />
<rect x="841.96" y="233.84" width="5.51" height="5.51" fill="#0000ff" />
<rect x="778.80" y="239.10" width="5.51" height="5.51" fill="#000000" />
<rect x="799.85" y="239.10" width="5.51" height="5.51" fill="#0000ff" />
<rect x="810.38" y="239.10" width="21.30" height="5.51" fill="#ff0000" />
<rect x="847.22" y="239.10" width="5.51" height="5.51" fill="#0000ff" />
<rect x="778.80" y="244.37" width="5.51" height="5.51" fill="#000000" />
<rect x="794.59" y="244.37" width="5.51" height="5.51" fill="#0000ff" />
<rect x="805.12" y="244.37" width="26.56" height="5.51" fill="#ff0000" />
<rect x="847.22" y="244.37" width="5.51" height="5.51" fill="#0000ff" />
<rect x="778.80" y="249.63" width="5.51" height="5.51" fill="#000000" />
<rect x="794.59" y="249.63" width="5.51" height="5.51" fill="#0000ff" />
<rect x="799.85" y="249.63" width="37.09" height="5.51" fill="#ff0000" />
<rect x="847.22" y="249.63" width="5.51" height="5.51" fill="#0000ff" />
<rect x="778.80" y="254.89" width="5.51" height="5.51" fill="#000000" />
<rect x="789.33" y="254.89" width="5.51" height="5.51" fill="#0000ff" />
<rect x="799.85" y="254.89" width="16.04" height="5.51" fill="#ff0000" />
<rect x="820.90" y="254.89" width="21.30" height="5.51" fill="#ff0000" />
<rect x="852.48" y="254.89" width="5.51" height="5.51" fill="#0000ff" />
<rect x="778.80" y="260.16" width="5.51" height="5.51" fill="#000000" />
<rect x="784.06" y="260.16" width="5.51" height="5.51" fill="#0000ff" />
<rect x="794.59" y="260.16" width="16.04" height="5.51" fill="#ff0000" />
<rect x="826.17" y="260.16" width="21.30" height="5.51" fill="#ff0000" />
<rect x="852.48" y="260.16" width="5.51" height="5.51" fill="#0000ff" />
<rect x="778.80" y="265.42" width="16.04" height="5.51" fill="#000000" />
<rect x="794.59" y="265.42" width="16.04" height="5.51" fill="#ff0000" />
<rect x="810.38" y="265.42" width="21.30" height="5.51" fill="#000000" />
<rect x="831.43" y="265.42" width="21.30" height="5.51" fill="#ff0000" />
<rect x="852.48" y="265.42" width="5.51" height="5.51" fill="#000000" />
<rect x="789.33" y="270.68" width="16.04" height="5.51" fill="#ff0000" />
<rect x="836.69" y="270.68" width="21.30" height="5.51" fill="#ff0000" />
<rect x="841.96" y="275.94" width="16.04" height="5.51" fill="#ff0000" />
<rect x="1273.60" y="207.50" width="73.93" height="5.51" fill="#0000ff" />
<rect x="1305.18" y="212.76" width="5.51" height="5.51" fill="#0000ff" />
<rect x="1299.91" y="218.03" width="5.51" height="5.51" fill="#0000ff" />
<rect x="1310.44" y="218.03" width="5.51" height="5.51" fill="#0000ff" />
<rect x="1299.91" y="223.29" width="5.51" height="5.51" fill="#0000ff" />
<rect x="1315.70" y="223.29" width="5.51" height="5.51" fill="#0000ff" />
<rect x="1294.65" y="228.55" width="5.51" height="5.51" fill="#0000ff" />
<rect x="1315.70" y="228.55" width="5.51" height="5.51" fill="#0000ff" />
<rect x="1294.65" y="233.81" width="5.51" height="5.51" fill="#0000ff" />
<rect x="1320.97" y="233.81" width="5.51" height="5.51" fill="#0000ff" />
<rect x="1289.39" y="239.08" width="5.51" height="5.51" fill="#0000ff" />
<rect x="1326.23" y="239.08" width="5.51" height="5.51" fill="#0000ff" />
<rect x="1284.13" y="244.34" width="5.51" height="5.51" fill="#0000ff" />
<rect x="1331.49" y="244.34" width="5.51" height="5.51" fill="#0000ff" />
<rect x="1284.13" y="249.60" width="5.51" height="5.51" fill="#0000ff" />
<rect x="1331.49" y="249.60" width="5.51" height="5.51" fill="#0000ff" />
<rect x="1278.86" y="254.87" width="5.51" height="5.51" fill="#0000ff" />
<rect x="1336.76" y="254.87" width="5.51" height="5.51" fill="#0000ff" />
<rect x="1426.32" y="213.00" width="5.51" height="5.51" fill="#a0a0a0" />
<rect x="1421.05" y="218.26" width="5.51" height="5.51" fill="#a0a0a0" />
<rect x="1431.58" y="218.26" width="5.51" height="5.51" fill="#a0a0a0" />
<rect x="1421.05" y="223.53" width="5.51" height="5.51" fill="#a0a0a0" />
<rect x="1436.84" y="223.53" width="5.51" height="5.51" fill="#a0a0a0" />
<rect x="1415.79" y="228.79" width="5.51" height="5.51" fill="#a0a0a0" />
<rect x="1436.84" y="228.79" width="5.51" height="5.51" fill="#a0a0a0" />
<rect x="1415.79" y="234.05" width="5.51" height="5.51" fill="#a0a0a0" />
<rect x="1442.10" y="234.05" width="5.51" height="5.51" fill="#a0a0a0" />
<rect x="1410.53" y="239.31" width="5.51" height="5.51" fill="#a0a0a0" />
<rect x="1447.37" y="239.31" width="5.51" height="5.51" fill="#a0a0a0" />
<rect x="1405.26" y="244.58" width="5.51" height="5.51" fill="#a0a0a0" />
<rect x="1452.63" y="244.58" width="5.51" height="5.51" fill="#a0a0a0" />
<rect x="1405.26" y="249.84" width="5.51" height="5.51" fill="#a0a0a0" />
<rect x="1452.63" y="249.84" width="5.51" height="5.51" fill="#a0a0a0" />
<rect x="1400.00" y="255.10" width="5.51" height="5.51" fill="#a0a0a0" />
<rect x="1457.89" y="255.10" width="5.51" height="5.51" fill="#a0a0a0" />
<rect x="1547.41" y="260.10" width="5.51" height="5.51" fill="#0000ff" />
<rect x="1542.15" y="254.84" width="5.51" height="5.51" fill="#0000ff" />
<rect x="1552.68" y="254.84" width="5.51" height="5.51" fill="#0000ff" />
<rect x="1542.15" y="249.58" width="5.51" height="5.51" fill="#0000ff" />
<rect x="1557.94" y="249.58" width="5.51" height="5.51" fill="#0000ff" />
<rect x="1536.89" y="244.31" width="5.51" height="5.51" fill="#0000ff" />
<rect x="1557.94" y="244.31" width="5.51" height="5.51" fill="#0000ff" />
<rect x="1536.89" y="239.05" width="5.51" height="5.51" fill="#0000ff" />
<rect x="1563.20" y="239.05" width="5.51" height="5.51" fill="#0000ff" />
<rect x="1531.63" y="233.79" width="5.51" height="5.51" fill="#0000ff" />
<rect x="1568.47" y="233.79" width="5.51" height="5.51" fill="#0000ff" />
<rect x="1526.36" y="228.53" width="5.51" height="5.51" fill="#0000ff" />
<rect x="1573.73" y="228.53" width="5.51" height="5.51" fill="#0000ff" />
<rect x="1526.36" y="223.26" width="5.51" height="5.51" fill="#0000ff" />
<rect x="1573.73" y="223.26" width="5.51" height="5.51" fill="#0000ff" />
<rect x="1521.10" y="218.00" width="5.51" height="5.51" fill="#0000ff" />
<rect x="1578.99" y="218.00" width="5.51" height="5.51" fill="#0000ff" />
<rect x="1668.52" y="260.10" width="5.51" height="5.51" fill="#0000ff" />
<rect x="1663.25" y="254.84" width="5.51" height="5.51" fill="#0000ff" />
<rect x="1673.78" y="254.84" width="5.51" height="5.51" fill="#0000ff" />
<rect x="1663.25" y="249.58" width="5.51" height="5.51" fill="#0000ff" />
<rect x="1679.04" y="249.58" width="5.51" height="5.51" fill="#0000ff" />
<rect x="1657.99" y="244.31" width="5.51" height="5.51" fill="#0000ff" />
<rect x="1679.04" y="244.31" width="5.51" height="5.51" fill="#0000ff" />
<rect x="1657.99" y="239.05" width="5.51" height="5.51" fill="#0000ff" />
<rect x="1684.30" y="239.05" width="5.51" height="5.51" fill="#0000ff" />
<rect x="1652.73" y="233.79" width="5.51" height="5.51" fill="#0000ff" />
<rect x="1689.57" y="233.79" width="5.51" height="5.51" fill="#0000ff" />
<rect x="1647.46" y="228.53" width="5.51" height="5.51" fill="#0000ff" />
<rect x="1694.83" y="228.53" width="5.51" height="5.51" fill="#0000ff" />
<rect x="1647.46" y="223.26" width="5.51" height="5.51" fill="#0000ff" />
<rect x="1694.83" y="223.26" width="5.51" height="5.51" fill="#0000ff" />
<rect x="1642.20" y="218.00" width="5.51" height="5.51" fill="#0000ff" />
<rect x="1700.09" y="218.00" width="5.51" height="5.51" fill="#0000ff" />
<rect x="1636.94" y="265.37" width="73.93" height="5.51" fill="#0000ff" />
<rect x="1805.50" y="202.20" width="5.51" height="73.68" fill="#0000ff" />
<rect x="1852.90" y="207.60" width="5.51" height="5.51" fill="#0000ff" />
<rect x="1842.38" y="212.86" width="5.51" height="5.51" fill="#0000ff" />
<rect x="1847.64" y="212.86" width="5.51" height="5.51" fill="#0000ff" />
<rect x="1837.12" y="218.13" width="5.51" height="5.51" fill="#0000ff" />
<rect x="1831.85" y="223.39" width="5.51" height="5.51" fill="#0000ff" />
<rect x="1821.33" y="228.65" width="5.51" height="5.51" fill="#0000ff" />
<rect x="1826.59" y="228.65" width="5.51" height="5.51" fill="#0000ff" />
<rect x="1816.06" y="233.91" width="5.51" height="5.51" fill="#0000ff" />
<rect x="1810.80" y="239.18" width="5.51" height="5.51" fill="#0000ff" />
<rect x="1816.06" y="244.44" width="5.51" height="5.51" fill="#0000ff" />
<rect x="1821.33" y="244.44" width="5.51" height="5.51" fill="#0000ff" />
<rect x="1826.59" y="249.70" width="5.51" height="5.51" fill="#0000ff" />
<rect x="1831.85" y="249.70" width="5.51" height="5.51" fill="#0000ff" />
<rect x="1837.12" y="254.97" width="5.51" height="5.51" fill="#0000ff" />
<rect x="1842.38" y="260.23" width="5.51" height="5.51" fill="#0000ff" />
<rect x="1847.64" y="260.23" width="5.51" height="5.51" fill="#0000ff" />
<rect x="1852.90" y="265.49" width="5.51" height="5.51" fill="#0000ff" />
<rect x="1974.20" y="207.60" width="5.51" height="5.51" fill="#a0a0a0" />
<rect x="1963.68" y="212.86" width="5.51" height="5.51" fill="#a0a0a0" />
<rect x="1968.94" y="212.86" width="5.51" height="5.51" fill="#a0a0a0" />
<rect x="1958.41" y="218.13" width="5.51" height="5.51" fill="#a0a0a0" />
<rect x="1953.15" y="223.39" width="5.51" height="5.51" fill="#a0a0a0" />
<rect x="1942.63" y="228.65" width="5.51" height="5.51" fill="#a0a0a0" />
<rect x="1947.89" y="228.65" width="5.51" height="5.51" fill="#a0a0a0" />
<rect x="1937.36" y="233.91" width="5.51" height="5.51" fill="#a0a0a0" />
<rect x="1932.10" y="239.18" width="5.51" height="5.51" fill="#a0a0a0" />
<rect x="1937.36" y="244.44" width="5.51" height="5.51" fill="#a0a0a0" />
<rect x="1942.63" y="244.44" width="5.51" height="5.51" fill="#a0a0a0" />
<rect x="1947.89" y="249.70" width="5.51" height="5.51" fill="#a0a0a0" />
<rect x="1953.15" y="249.70" width="5.51" height="5.51" fill="#a0a0a0" />
<rect x="1958.41" y="254.97" width="5.51" height="5.51" fill="#a0a0a0" />
<rect x="1963.68" y="260.23" width="5.51" height="5.51" fill="#a0a0a0" />
<rect x="1968.94" y="260.23" width="5.51" height="5.51" fill="#a0a0a0" />
<rect x="1974.20" y="265.49" width="5.51" height="5.51" fill="#a0a0a0" />
<rect x="2058.30" y="207.60" width="5.51" height="5.51" fill="#0000ff" />
<rect x="2068.83" y="212.86" width="5.51" height="5.51" fill="#0000ff" />
<rect x="2063.56" y="212.86" width="5.51" height="5.51" fill="#0000ff" />
<rect x="2074.09" y="218.13" width="5.51" height="5.51" fill="#0000ff" />
<rect x="2079.35" y="223.39" width="5.51" height="5.51" fill="#0000ff" />
<rect x="2089.88" y="228.65" width="5.51" height="5.51" fill="#0000ff" />
<rect x="2084.62" y="228.65" width="5.51" height="5.51" fill="#0000ff" />
<rect x="2095.14" y="233.91" width="5.51" height="5.51" fill="#0000ff" />
<rect x="2100.40" y="239.18" width="5.51" height="5.51" fill="#0000ff" />
<rect x="2095.14" y="244.44" width="5.51" height="5.51" fill="#0000ff" />
<rect x="2089.88" y="244.44" width="5.51" height="5.51" fill="#0000ff" />
<rect x="2084.62" y="249.70" width="5.51" height="5.51" fill="#0000ff" />
<rect x="2079.35" y="249.70" width="5.51" height="5.51" fill="#0000ff" />
<rect x="2074.09" y="254.97" width="5.51" height="5.51" fill="#0000ff" />
<rect x="2068.83" y="260.23" width="5.51" height="5.51" fill="#0000ff" />
<rect x="2063.56" y="260.23" width="5.51" height="5.51" fill="#0000ff" />
<rect x="2058.30" y="265.49" width="5.51" height="5.51" fill="#0000ff" />
<rect x="2179.40" y="207.60" width="5.51" height="5.51" fill="#0000ff" />
<rect x="2189.93" y="212.86" width="5.51" height="5.51" fill="#0000ff" />
<rect x="2184.66" y="212.86" width="5.51" height="5.51" fill="#0000ff" />
<rect x="2195.19" y="218.13" width="5.51" height="5.51" fill="#0000ff" />
<rect x="2200.45" y="223.39" width="5.51" height="5.51" fill="#0000ff" />
<rect x="2210.98" y="228.65" width="5.51" height="5.51" fill="#0000ff" />
<rect x="2205.72" y="228.65" width="5.51" height="5.51" fill="#0000ff" />
<rect x="2216.24" y="233.91" width="5.51" height="5.51" fill="#0000ff" />
<rect x="2221.50" y="239.18" width="5.51" height="5.51" fill="#0000ff" />
<rect x="2216.24" y="244.44" width="5.51" height="5.51" fill="#0000ff" />
<rect x="2210.98" y="244.44" width="5.51" height="5.51" fill="#0000ff" />
<rect x="2205.72" y="249.70" width="5.51" height="5.51" fill="#0000ff" />
<rect x="2200.45" y="249.70" width="5.51" height="5.51" fill="#0000ff" />
<rect x="2195.19" y="254.97" width="5.51" height="5.51" fill="#0000ff" />
<rect x="2189.93" y="260.23" width="5.51" height="5.51" fill="#0000ff" />
<rect x="2184.66" y="260.23" width="5.51" height="5.51" fill="#0000ff" />
<rect x="2179.40" y="265.49" width="5.51" height="5.51" fill="#0000ff" />
<rect x="2227.10" y="202.20" width="5.51" height="73.68" fill="#0000ff" />
<rect x="25.60" y="334.00" width="3523.40" height="5.10" fill="#c6c6c6" />
<rect x="25.60" y="334.00" width="5.20" height="1558.00" fill="#c6c6c6" />
<rect x="25.60" y="1892.00" width="3528.40" height="10.90" fill="#f7f7f7" />
<rect x="3548.80" y="339.00" width="10.20" height="1559.00" fill="#f7f7f7" />
<rect x="299.30" y="507.40" width="3149.70" height="10.20" fill="#d8d8d8" />
<rect x="299.30" y="633.71" width="3149.70" height="10.20" fill="#d8d8d8" />
<rect x="299.30" y="760.02" width="3149.70" height="10.20" fill="#d8d8d8" />
<rect x="299.30" y="886.34" width="3149.70" height="10.20" fill="#d8d8d8" />
<rect x="299.30" y="1017.91" width="3149.70" height="10.20" fill="#d8d8d8" />
<rect x="299.30" y="1144.22" width="3149.70" height="10.20" fill="#d8d8d8" />
<rect x="299.30" y="1270.54" width="3149.70" height="10.20" fill="#d8d8d8" />
<rect x="299.30" y="1396.85" width="3149.70" height="10.20" fill="#d8d8d8" />
<rect x="299.30" y="1528.42" width="3149.70" height="10.20" fill="#d8d8d8" />
<rect x="299.30" y="1654.73" width="3149.70" height="10.20" fill="#d8d8d8" />
<rect x="314.90" y="402.00" width="10.60" height="1327.00" fill="#d8d8d8" />
<rect x="599.32" y="402.00" width="10.60" height="1327.00" fill="#d8d8d8" />
<rect x="878.47" y="402.00" width="10.60" height="1327.00" fill="#d8d8d8" />
<rect x="1162.89" y="402.00" width="10.60" height="1327.00" fill="#d8d8d8" />
<rect x="1442.04" y="402.00" width="10.60" height="1327.00" fill="#d8d8d8" />
<rect x="1726.46" y="402.00" width="10.60" height="1327.00" fill="#d8d8d8" />
<rect x="2005.61" y="402.00" width="10.60" height="1327.00" fill="#d8d8d8" />
<rect x="2290.03" y="402.00" width="10.60" height="1327.00" fill="#d8d8d8" />
<rect x="2569.18" y="402.00" width="10.60" height="1327.00" fill="#d8d8d8" />
<rect x="2853.59" y="402.00" width="10.60" height="1327.00" fill="#d8d8d8" />
<rect x="3132.74" y="402.00" width="10.60" height="1327.00" fill="#d8d8d8" />
<rect x="3417.16" y="402.00" width="10.60" height="1327.00" fill="#d8d8d8" />
<rect x="320.20" y="507.40" width="3102.20" height="10.20" fill="#ec6a6a" />
<rect x="294.10" y="392.00" width="3159.90" height="10.20" fill="#7a7a7a" />
<rect x="3449.00" y="397.00" width="9.90" height="1342.00" fill="#7a7a7a" />
<rect x="294.10" y="397.00" width="5.20" height="1332.00" fill="#7f7f7f" />
<rect x="283.50" y="397.00" width="10.60" height="1331.80" fill="#000000" />
<rect x="294.10" y="1728.80" width="3154.90" height="10.80" fill="#000000" />
<rect x="289.00" y="1728.80" width="5.10" height="5.30" fill="#7f7f7f" />
<rect x="273.50" y="412.67" width="10.00" height="10.20" fill="#b8b8b8" />
<rect x="268.30" y="412.67" width="5.20" height="10.20" fill="#e4e4e4" />
<rect x="273.50" y="444.24" width="10.00" height="10.20" fill="#b8b8b8" />
<rect x="268.30" y="444.24" width="5.20" height="10.20" fill="#e4e4e4" />
<rect x="273.50" y="475.82" width="10.00" height="10.20" fill="#b8b8b8" />
<rect x="268.30" y="475.82" width="5.20" height="10.20" fill="#e4e4e4" />
<rect x="262.40" y="507.40" width="21.10" height="10.20" fill="#b8b8b8" />
<rect x="257.20" y="507.40" width="5.20" height="10.20" fill="#e4e4e4" />
<rect x="273.50" y="538.98" width="10.00" height="10.20" fill="#b8b8b8" />
<rect x="268.30" y="538.98" width="5.20" height="10.20" fill="#e4e4e4" />
<rect x="273.50" y="570.56" width="10.00" height="10.20" fill="#b8b8b8" />
<rect x="268.30" y="570.56" width="5.20" height="10.20" fill="#e4e4e4" />
<rect x="273.50" y="602.13" width="10.00" height="10.20" fill="#b8b8b8" />
<rect x="268.30" y="602.13" width="5.20" height="10.20" fill="#e4e4e4" />
<rect x="262.40" y="633.71" width="21.10" height="10.20" fill="#b8b8b8" />
<rect x="257.20" y="633.71" width="5.20" height="10.20" fill="#e4e4e4" />
<rect x="273.50" y="665.29" width="10.00" height="10.20" fill="#b8b8b8" />
<rect x="268.30" y="665.29" width="5.20" height="10.20" fill="#e4e4e4" />
<rect x="273.50" y="696.87" width="10.00" height="10.20" fill="#b8b8b8" />
<rect x="268.30" y="696.87" width="5.20" height="10.20" fill="#e4e4e4" />
<rect x="273.50" y="728.45" width="10.00" height="10.20" fill="#b8b8b8" />
<rect x="268.30" y="728.45" width="5.20" height="10.20" fill="#e4e4e4" />
<rect x="262.40" y="760.02" width="21.10" height="10.20" fill="#b8b8b8" />
<rect x="257.20" y="760.02" width="5.20" height="10.20" fill="#e4e4e4" />
<rect x="273.50" y="791.60" width="10.00" height="10.20" fill="#b8b8b8" />
<rect x="268.30" y="791.60" width="5.20" height="10.20" fill="#e4e4e4" />
<rect x="273.50" y="823.18" width="10.00" height="10.20" fill="#b8b8b8" />
<rect x="268.30" y="823.18" width="5.20" height="10.20" fill="#e4e4e4" />
<rect x="273.50" y="854.76" width="10.00" height="10.20" fill="#b8b8b8" />
<rect x="268.30" y="854.76" width="5.20" height="10.20" fill="#e4e4e4" />
<rect x="262.40" y="886.34" width="21.10" height="10.20" fill="#b8b8b8" />
<rect x="257.20" y="886.34" width="5.20" height="10.20" fill="#e4e4e4" />
<rect x="273.50" y="917.91" width="10.00" height="10.20" fill="#b8b8b8" />
<rect x="268.30" y="917.91" width="5.20" height="10.20" fill="#e4e4e4" />
<rect x="273.50" y="949.49" width="10.00" height="10.20" fill="#b8b8b8" />
<rect x="268.30" y="949.49" width="5.20" height="10.20" fill="#e4e4e4" />
<rect x="273.50" y="981.07" width="10.00" height="10.20" fill="#b8b8b8" />
<rect x="268.30" y="981.07" width="5.20" height="10.20" fill="#e4e4e4" />
<rect x="262.40" y="1017.91" width="21.10" height="10.20" fill="#b8b8b8" />
<rect x="257.20" y="1017.91" width="5.20" height="10.20" fill="#e4e4e4" />
<rect x="273.50" y="1049.49" width="10.00" height="10.20" fill="#b8b8b8" />
<rect x="268.30" y="1049.49" width="5.20" height="10.20" fill="#e4e4e4" />
<rect x="273.50" y="1081.07" width="10.00" height="10.20" fill="#b8b8b8" />
<rect x="268.30" y="1081.07" width="5.20" height="10.20" fill="#e4e4e4" />
<rect x="273.50" y="1112.64" width="10.00" height="10.20" fill="#b8b8b8" />
<rect x="268.30" y="1112.64" width="5.20" height="10.20" fill="#e4e4e4" />
<rect x="262.40" y="1144.22" width="21.10" height="10.20" fill="#b8b8b8" />
<rect x="257.20" y="1144.22" width="5.20" height="10.20" fill="#e4e4e4" />
<rect x="273.50" y="1175.80" width="10.00" height="10.20" fill="#b8b8b8" />
<rect x="268.30" y="1175.80" width="5.20" height="10.20" fill="#e4e4e4" />
<rect x="273.50" y="1207.38" width="10.00" height="10.20" fill="#b8b8b8" />
<rect x="268.30" y="1207.38" width="5.20" height="10.20" fill="#e4e4e4" />
<rect x="273.50" y="1238.96" width="10.00" height="10.20" fill="#b8b8b8" />
<rect x="268.30" y="1238.96" width="5.20" height="10.20" fill="#e4e4e4" />
<rect x="262.40" y="1270.54" width="21.10" height="10.20" fill="#b8b8b8" />
<rect x="257.20" y="1270.54" width="5.20" height="10.20" fill="#e4e4e4" />
<rect x="273.50" y="1302.11" width="10.00" height="10.20" fill="#b8b8b8" />
<rect x="268.30" y="1302.11" width="5.20" height="10.20" fill="#e4e4e4" />
<rect x="273.50" y="1333.69" width="10.00" height="10.20" fill="#b8b8b8" />
<rect x="268.30" y="1333.69" width="5.20" height="10.20" fill="#e4e4e4" />
<rect x="273.50" y="1365.27" width="10.00" height="10.20" fill="#b8b8b8" />
<rect x="268.30" y="1365.27" width="5.20" height="10.20" fill="#e4e4e4" />
<rect x="262.40" y="1396.85" width="21.10" height="10.20" fill="#b8b8b8" />
<rect x="257.20" y="1396.85" width="5.20" height="10.20" fill="#e4e4e4" />
<rect x="273.50" y="1428.43" width="10.00" height="10.20" fill="#b8b8b8" />
<rect x="268.30" y="1428.43" width="5.20" height="10.20" fill="#e4e4e4" />
<rect x="273.50" y="1460.00" width="10.00" height="10.20" fill="#b8b8b8" />
<rect x="268.30" y="1460.00" width="5.20" height="10.20" fill="#e4e4e4" />
<rect x="273.50" y="1491.58" width="10.00" height="10.20" fill="#b8b8b8" />
<rect x="268.30" y="1491.58" width="5.20" height="10.20" fill="#e4e4e4" />
<rect x="262.40" y="1528.42" width="21.10" height="10.20" fill="#b8b8b8" />
<rect x="257.20" y="1528.42" width="5.20" height="10.20" fill="#e4e4e4" />
<rect x="273.50" y="1560.00" width="10.00" height="10.20" fill="#b8b8b8" />
<rect x="268.30" y="1560.00" width="5.20" height="10.20" fill="#e4e4e4" />
<rect x="273.50" y="1591.58" width="10.00" height="10.20" fill="#b8b8b8" />
<rect x="268.30" y="1591.58" width="5.20" height="10.20" fill="#e4e4e4" />
<rect x="273.50" y="1623.16" width="10.00" height="10.20" fill="#b8b8b8" />
<rect x="268.30" y="1623.16" width="5.20" height="10.20" fill="#e4e4e4" />
<rect x="262.40" y="1654.73" width="21.10" height="10.20" fill="#b8b8b8" />
<rect x="257.20" y="1654.73" width="5.20" height="10.20" fill="#e4e4e4" />
<rect x="273.50" y="1686.31" width="10.00" height="10.20" fill="#b8b8b8" />
<rect x="268.30" y="1686.31" width="5.20" height="10.20" fill="#e4e4e4" />
<rect x="273.50" y="1717.89" width="10.00" height="10.20" fill="#b8b8b8" />
<rect x="268.30" y="1717.89" width="5.20" height="10.20" fill="#e4e4e4" />
<rect x="314.90" y="1739.60" width="10.60" height="21.10" fill="#b8b8b8" />
<rect x="314.90" y="1760.70" width="10.60" height="5.20" fill="#dcdcdc" />
<rect x="388.64" y="1739.60" width="10.60" height="10.50" fill="#b8b8b8" />
<rect x="388.64" y="1750.10" width="10.60" height="5.20" fill="#dcdcdc" />
<rect x="457.11" y="1739.60" width="10.60" height="10.50" fill="#b8b8b8" />
<rect x="457.11" y="1750.10" width="10.60" height="5.20" fill="#dcdcdc" />
<rect x="525.58" y="1739.60" width="10.60" height="10.50" fill="#b8b8b8" />
<rect x="525.58" y="1750.10" width="10.60" height="5.20" fill="#dcdcdc" />
<rect x="599.32" y="1739.60" width="10.60" height="21.10" fill="#b8b8b8" />
<rect x="599.32" y="1760.70" width="10.60" height="5.20" fill="#dcdcdc" />
<rect x="667.79" y="1739.60" width="10.60" height="10.50" fill="#b8b8b8" />
<rect x="667.79" y="1750.10" width="10.60" height="5.20" fill="#dcdcdc" />
<rect x="736.26" y="1739.60" width="10.60" height="10.50" fill="#b8b8b8" />
<rect x="736.26" y="1750.10" width="10.60" height="5.20" fill="#dcdcdc" />
<rect x="810.00" y="1739.60" width="10.60" height="10.50" fill="#b8b8b8" />
<rect x="810.00" y="1750.10" width="10.60" height="5.20" fill="#dcdcdc" />
<rect x="878.47" y="1739.60" width="10.60" height="21.10" fill="#b8b8b8" />
<rect x="878.47" y="1760.70" width="10.60" height="5.20" fill="#dcdcdc" />
<rect x="952.21" y="1739.60" width="10.60" height="10.50" fill="#b8b8b8" />
<rect x="952.21" y="1750.10" width="10.60" height="5.20" fill="#dcdcdc" />
<rect x="1020.68" y="1739.60" width="10.60" height="10.50" fill="#b8b8b8" />
<rect x="1020.68" y="1750.10" width="10.60" height="5.20" fill="#dcdcdc" />
<rect x="1089.15" y="1739.60" width="10.60" height="10.50" fill="#b8b8b8" />
<rect x="1089.15" y="1750.10" width="10.60" height="5.20" fill="#dcdcdc" />
<rect x="1162.89" y="1739.60" width="10.60" height="21.10" fill="#b8b8b8" />
<rect x="1162.89" y="1760.70" width="10.60" height="5.20" fill="#dcdcdc" />
<rect x="1231.36" y="1739.60" width="10.60" height="10.50" fill="#b8b8b8" />
<rect x="1231.36" y="1750.10" width="10.60" height="5.20" fill="#dcdcdc" />
<rect x="1299.83" y="1739.60" width="10.60" height="10.50" fill="#b8b8b8" />
<rect x="1299.83" y="1750.10" width="10.60" height="5.20" fill="#dcdcdc" />
<rect x="1373.57" y="1739.60" width="10.60" height="10.50" fill="#b8b8b8" />
<rect x="1373.57" y="1750.10" width="10.60" height="5.20" fill="#dcdcdc" />
<rect x="1442.04" y="1739.60" width="10.60" height="21.10" fill="#b8b8b8" />
<rect x="1442.04" y="1760.70" width="10.60" height="5.20" fill="#dcdcdc" />
<rect x="1515.78" y="1739.60" width="10.60" height="10.50" fill="#b8b8b8" />
<rect x="1515.78" y="1750.10" width="10.60" height="5.20" fill="#dcdcdc" />
<rect x="1584.25" y="1739.60" width="10.60" height="10.50" fill="#b8b8b8" />
<rect x="1584.25" y="1750.10" width="10.60" height="5.20" fill="#dcdcdc" />
<rect x="1652.72" y="1739.60" width="10.60" height="10.50" fill="#b8b8b8" />
<rect x="1652.72" y="1750.10" width="10.60" height="5.20" fill="#dcdcdc" />
<rect x="1726.46" y="1739.60" width="10.60" height="21.10" fill="#b8b8b8" />
<rect x="1726.46" y="1760.70" width="10.60" height="5.20" fill="#dcdcdc" />
<rect x="1794.93" y="1739.60" width="10.60" height="10.50" fill="#b8b8b8" />
<rect x="1794.93" y="1750.10" width="10.60" height="5.20" fill="#dcdcdc" />
<rect x="1863.40" y="1739.60" width="10.60" height="10.50" fill="#b8b8b8" />
<rect x="1863.40" y="1750.10" width="10.60" height="5.20" fill="#dcdcdc" />
<rect x="1937.14" y="1739.60" width="10.60" height="10.50" fill="#b8b8b8" />
<rect x="1937.14" y="1750.10" width="10.60" height="5.20" fill="#dcdcdc" />
<rect x="2005.61" y="1739.60" width="10.60" height="21.10" fill="#b8b8b8" />
<rect x="2005.61" y="1760.70" width="10.60" height="5.20" fill="#dcdcdc" />
<rect x="2079.34" y="1739.60" width="10.60" height="10.50" fill="#b8b8b8" />
<rect x="2079.34" y="1750.10" width="10.60" height="5.20" fill="#dcdcdc" />
<rect x="2147.82" y="1739.60" width="10.60" height="10.50" fill="#b8b8b8" />
<rect x="2147.82" y="1750.10" width="10.60" height="5.20" fill="#dcdcdc" />
<rect x="2216.29" y="1739.60" width="10.60" height="10.50" fill="#b8b8b8" />
<rect x="2216.29" y="1750.10" width="10.60" height="5.20" fill="#dcdcdc" />
<rect x="2290.03" y="1739.60" width="10.60" height="21.10" fill="#b8b8b8" />
<rect x="2290.03" y="1760.70" width="10.60" height="5.20" fill="#dcdcdc" />
<rect x="2358.50" y="1739.60" width="10.60" height="10.50" fill="#b8b8b8" />
<rect x="2358.50" y="1750.10" width="10.60" height="5.20" fill="#dcdcdc" />
<rect x="2426.97" y="1739.60" width="10.60" height="10.50" fill="#b8b8b8" />
<rect x="2426.97" y="1750.10" width="10.60" height="5.20" fill="#dcdcdc" />
<rect x="2500.70" y="1739.60" width="10.60" height="10.50" fill="#b8b8b8" />
<rect x="2500.70" y="1750.10" width="10.60" height="5.20" fill="#dcdcdc" />
<rect x="2569.18" y="1739.60" width="10.60" height="21.10" fill="#b8b8b8" />
<rect x="2569.18" y="1760.70" width="10.60" height="5.20" fill="#dcdcdc" />
<rect x="2642.91" y="1739.60" width="10.60" height="10.50" fill="#b8b8b8" />
<rect x="2642.91" y="1750.10" width="10.60" height="5.20" fill="#dcdcdc" />
<rect x="2711.38" y="1739.60" width="10.60" height="10.50" fill="#b8b8b8" />
<rect x="2711.38" y="1750.10" width="10.60" height="5.20" fill="#dcdcdc" />
<rect x="2779.86" y="1739.60" width="10.60" height="10.50" fill="#b8b8b8" />
<rect x="2779.86" y="1750.10" width="10.60" height="5.20" fill="#dcdcdc" />
<rect x="2853.59" y="1739.60" width="10.60" height="21.10" fill="#b8b8b8" />
<rect x="2853.59" y="1760.70" width="10.60" height="5.20" fill="#dcdcdc" />
<rect x="2922.06" y="1739.60" width="10.60" height="10.50" fill="#b8b8b8" />
<rect x="2922.06" y="1750.10" width="10.60" height="5.20" fill="#dcdcdc" />
<rect x="2990.54" y="1739.60" width="10.60" height="10.50" fill="#b8b8b8" />
<rect x="2990.54" y="1750.10" width="10.60" height="5.20" fill="#dcdcdc" />
<rect x="3064.27" y="1739.60" width="10.60" height="10.50" fill="#b8b8b8" />
<rect x="3064.27" y="1750.10" width="10.60" height="5.20" fill="#dcdcdc" />
<rect x="3132.74" y="1739.60" width="10.60" height="21.10" fill="#b8b8b8" />
<rect x="3132.74" y="1760.70" width="10.60" height="5.20" fill="#dcdcdc" />
<rect x="3206.48" y="1739.60" width="10.60" height="10.50" fill="#b8b8b8" />
<rect x="3206.48" y="1750.10" width="10.60" height="5.20" fill="#dcdcdc" />
<rect x="3274.95" y="1739.60" width="10.60" height="10.50" fill="#b8b8b8" />
<rect x="3274.95" y="1750.10" width="10.60" height="5.20" fill="#dcdcdc" />
<rect x="3343.42" y="1739.60" width="10.60" height="10.50" fill="#b8b8b8" />
<rect x="3343.42" y="1750.10" width="10.60" height="5.20" fill="#dcdcdc" />
<rect x="3417.16" y="1739.60" width="10.60" height="21.10" fill="#b8b8b8" />
<rect x="3417.16" y="1760.70" width="10.60" height="5.20" fill="#dcdcdc" />
<defs><g id="ct0"><path d="M5.26 0.00h5.26v5.26h-5.26zM0.00 10.53h5.26v5.26h-5.26zM21.05 10.53h5.26v5.26h-5.26zM0.00 15.79h5.26v5.26h-5.26zM0.00 21.05h5.26v5.26h-5.26zM0.00 26.31h5.26v5.26h-5.26zM21.05 26.31h5.26v5.26h-5.26zM5.26 36.84h5.26v5.26h-5.26z" fill="#d4954a"/><path d="M10.53 0.00h5.26v5.26h-5.26zM15.79 0.00h5.26v5.26h-5.26zM10.53 36.84h5.26v5.26h-5.26zM15.79 36.84h5.26v5.26h-5.26z" fill="#000000"/><path d="M21.05 0.00h5.26v5.26h-5.26zM5.26 10.53h5.26v5.26h-5.26zM26.31 10.53h5.26v5.26h-5.26zM5.26 15.79h5.26v5.26h-5.26zM5.26 21.05h5.26v5.26h-5.26zM5.26 26.31h5.26v5.26h-5.26zM26.31 26.31h5.26v5.26h-5.26zM21.05 36.84h5.26v5.26h-5.26z" fill="#4a90d0"/><path d="M0.00 5.26h5.26v5.26h-5.26zM0.00 31.58h5.26v5.26h-5.26z" fill="#f2d898"/><path d="M5.26 5.26h5.26v5.26h-5.26zM5.26 31.58h5.26v5.26h-5.26z" fill="#4b0070"/><path d="M10.53 5.26h5.26v5.26h-5.26zM10.53 31.58h5.26v5.26h-5.26z" fill="#b0f0f0"/><path d="M15.79 5.26h5.26v5.26h-5.26zM15.79 31.58h5.26v5.26h-5.26z" fill="#f2f0b8"/><path d="M21.05 5.26h5.26v5.26h-5.26z" fill="#9a4848"/><path d="M26.31 5.26h5.26v5.26h-5.26zM26.31 31.58h5.26v5.26h-5.26z" fill="#90d0f0"/><path d="M21.05 15.79h5.26v5.26h-5.26zM21.05 21.05h5.26v5.26h-5.26z" fill="#f0b070"/><path d="M26.31 15.79h5.26v5.26h-5.26zM26.31 21.05h5.26v5.26h-5.26z" fill="#0070c0"/><path d="M21.05 31.58h5.26v5.26h-5.26z" fill="#700040"/></g><g id="ct1"><path d="M10.53 0.00h5.26v5.26h-5.26zM5.26 5.26h5.26v5.26h-5.26zM10.53 15.79h5.26v5.26h-5.26zM10.53 21.05h5.26v5.26h-5.26zM10.53 26.31h5.26v5.26h-5.26zM10.53 31.58h5.26v5.26h-5.26zM10.53 36.84h5.26v5.26h-5.26z" fill="#f2f0b8"/><path d="M15.79 0.00h5.26v5.26h-5.26zM5.26 10.53h5.26v5.26h-5.26z" fill="#9a4a70"/><path d="M21.05 0.00h5.26v5.26h-5.26zM21.05 5.26h5.26v5.26h-5.26zM21.05 10.53h5.26v5.26h-5.26zM21.05 15.79h5.26v5.26h-5.26zM21.05 21.05h5.26v5.26h-5.26zM21.05 26.31h5.26v5.26h-5.26zM21.05 31.58h5.26v5.26h-5.26zM21.05 36.84h5.26v5.26h-5.26z" fill="#b0f0f0"/><path d="M10.53 5.26h5.26v5.26h-5.26z" fill="#700000"/><path d="M15.79 5.26h5.26v5.26h-5.26z" fill="#000080"/><path d="M0.00 10.53h5.26v5.26h-5.26z" fill="#f2f0cc"/><path d="M10.53 10.53h5.26v5.26h-5.26z" fill="#b0f0b0"/><path d="M15.79 10.53h5.26v5.26h-5.26zM15.79 15.79h5.26v5.26h-5.26zM15.79 21.05h5.26v5.26h-5.26zM15.79 26.31h5.26v5.26h-5.26zM15.79 31.58h5.26v5.26h-5.26zM15.79 36.84h5.26v5.26h-5.26z" fill="#700070"/></g><g id="ct2"><path d="M0.00 0.00h5.26v5.26h-5.26zM15.79 10.53h5.26v5.26h-5.26z" fill="#f2f0cc"/><path d="M5.26 0.00h5.26v5.26h-5.26z" fill="#a04800"/><path d="M10.53 0.00h5.26v5.26h-5.26zM15.79 0.00h5.26v5.26h-5.26zM5.26 36.84h5.26v5.26h-5.26zM10.53 36.84h5.26v5.26h-5.26zM15.79 36.84h5.26v5.26h-5.26z" fill="#000000"/><path d="M21.05 0.00h5.26v5.26h-5.26z" fill="#4a90d0"/><path d="M0.00 5.26h5.26v5.26h-5.26z" fill="#d4954a"/><path d="M5.26 5.26h5.26v5.26h-5.26z" fill="#0070c0"/><path d="M15.79 5.26h5.26v5.26h-5.26zM15.79 15.79h5.26v5.26h-5.26zM10.53 21.05h5.26v5.26h-5.26zM5.26 26.31h5.26v5.26h-5.26zM0.00 31.58h5.26v5.26h-5.26z" fill="#f2d898"/><path d="M21.05 5.26h5.26v5.26h-5.26z" fill="#4b0070"/><path d="M26.31 5.26h5.26v5.26h-5.26zM26.31 10.53h5.26v5.26h-5.26zM26.31 36.84h5.26v5.26h-5.26z" fill="#90d0f0"/><path d="M21.05 10.53h5.26v5.26h-5.26z" fill="#9a4848"/><path d="M21.05 15.79h5.26v5.26h-5.26z" fill="#5050a0"/><path d="M26.31 15.79h5.26v5.26h-5.26z" fill="#d8f0f0"/><path d="M15.79 21.05h5.26v5.26h-5.26zM10.53 26.31h5.26v5.26h-5.26zM5.26 31.58h5.26v5.26h-5.26z" fill="#700070"/><path d="M21.05 21.05h5.26v5.26h-5.26zM15.79 26.31h5.26v5.26h-5.26zM10.53 31.58h5.26v5.26h-5.26z" fill="#b0f0f0"/><path d="M0.00 36.84h5.26v5.26h-5.26z" fill="#c07000"/><path d="M21.05 36.84h5.26v5.26h-5.26z" fill="#000040"/></g><g id="ct3"><path d="M5.26 0.00h5.26v5.26h-5.26zM5.26 36.84h5.26v5.26h-5.26z" fill="#c07000"/><path d="M10.53 0.00h5.26v5.26h-5.26zM15.79 0.00h5.26v5.26h-5.26zM15.79 15.79h5.26v5.26h-5.26zM10.53 36.84h5.26v5.26h-5.26zM15.79 36.84h5.26v5.26h-5.26z" fill="#000000"/><path d="M21.05 0.00h5.26v5.26h-5.26zM21.05 15.79h5.26v5.26h-5.26zM26.31 21.05h5.26v5.26h-5.26z" fill="#4a90d0"/><path d="M0.00 5.26h5.26v5.26h-5.26z" fill="#f0b070"/><path d="M5.26 5.26h5.26v5.26h-5.26z" fill="#0050a0"/><path d="M10.53 5.26h5.26v5.26h-5.26z" fill="#d8f0f0"/><path d="M15.79 5.26h5.26v5.26h-5.26zM15.79 10.53h5.26v5.26h-5.26zM15.79 21.05h5.26v5.26h-5.26zM15.79 31.58h5.26v5.26h-5.26z" fill="#f2f0cc"/><path d="M21.05 5.26h5.26v5.26h-5.26z" fill="#9a4848"/><path d="M26.31 5.26h5.26v5.26h-5.26zM26.31 10.53h5.26v5.26h-5.26z" fill="#90d0f0"/><path d="M21.05 10.53h5.26v5.26h-5.26z" fill="#700040"/><path d="M10.53 15.79h5.26v5.26h-5.26zM21.05 26.31h5.26v5.26h-5.26zM0.00 31.58h5.26v5.26h-5.26z" fill="#d4954a"/><path d="M21.05 21.05h5.26v5.26h-5.26zM21.05 31.58h5.26v5.26h-5.26z" fill="#a04800"/><path d="M26.31 26.31h5.26v5.26h-5.26zM5.26 31.58h5.26v5.26h-5.26zM21.05 36.84h5.26v5.26h-5.26z" fill="#0070c0"/><path d="M26.31 31.58h5.26v5.26h-5.26z" fill="#60b0f0"/></g><g id="ct4"><path d="M15.79 0.00h5.26v5.26h-5.26zM5.26 15.79h5.26v5.26h-5.26zM0.00 26.31h5.26v5.26h-5.26z" fill="#d4954a"/><path d="M21.05 0.00h5.26v5.26h-5.26zM21.05 5.26h5.26v5.26h-5.26zM21.05 10.53h5.26v5.26h-5.26zM21.05 15.79h5.26v5.26h-5.26zM21.05 21.05h5.26v5.26h-5.26zM26.31 26.31h5.26v5.26h-5.26zM21.05 31.58h5.26v5.26h-5.26zM21.05 36.84h5.26v5.26h-5.26z" fill="#0070c0"/><path d="M10.53 5.26h5.26v5.26h-5.26zM0.00 21.05h5.26v5.26h-5.26z" fill="#f2d898"/><path d="M15.79 5.26h5.26v5.26h-5.26z" fill="#500000"/><path d="M5.26 10.53h5.26v5.26h-5.26z" fill="#f2f0cc"/><path d="M10.53 10.53h5.26v5.26h-5.26z" fill="#9a4848"/><path d="M15.79 10.53h5.26v5.26h-5.26z" fill="#a09070"/><path d="M10.53 15.79h5.26v5.26h-5.26z" fill="#4a90d0"/><path d="M15.79 15.79h5.26v5.26h-5.26zM15.79 21.05h5.26v5.26h-5.26zM15.79 31.58h5.26v5.26h-5.26zM15.79 36.84h5.26v5.26h-5.26z" fill="#f0b070"/><path d="M5.26 21.05h5.26v5.26h-5.26z" fill="#5050a0"/><path d="M10.53 21.05h5.26v5.26h-5.26z" fill="#d8f0f0"/><path d="M5.26 26.31h5.26v5.26h-5.26zM10.53 26.31h5.26v5.26h-5.26zM15.79 26.31h5.26v5.26h-5.26zM21.05 26.31h5.26v5.26h-5.26z" fill="#000000"/></g><g id="ct5"><path d="M5.26 0.00h5.26v5.26h-5.26zM21.05 21.05h5.26v5.26h-5.26zM5.26 36.84h5.26v5.26h-5.26z" fill="#c07000"/><path d="M10.53 0.00h5.26v5.26h-5.26zM15.79 0.00h5.26v5.26h-5.26zM21.05 0.00h5.26v5.26h-5.26zM10.53 15.79h5.26v5.26h-5.26zM15.79 15.79h5.26v5.26h-5.26zM10.53 36.84h5.26v5.26h-5.26zM15.79 36.84h5.26v5.26h-5.26z" fill="#000000"/><path d="M26.31 0.00h5.26v5.26h-5.26z" fill="#60b0f0"/><path d="M0.00 5.26h5.26v5.26h-5.26zM15.79 31.58h5.26v5.26h-5.26z" fill="#f2f0cc"/><path d="M5.26 5.26h5.26v5.26h-5.26z" fill="#9a4848"/><path d="M10.53 5.26h5.26v5.26h-5.26z" fill="#90d0f0"/><path d="M0.00 10.53h5.26v5.26h-5.26z" fill="#f2f0b8"/><path d="M5.26 10.53h5.26v5.26h-5.26z" fill="#7050a0"/><path d="M10.53 10.53h5.26v5.26h-5.26zM26.31 15.79h5.26v5.26h-5.26z" fill="#d8f0f0"/><path d="M0.00 15.79h5.26v5.26h-5.26z" fill="#f2d898"/><path d="M5.26 15.79h5.26v5.26h-5.26z" fill="#500000"/><path d="M21.05 15.79h5.26v5.26h-5.26z" fill="#0050a0"/><path d="M0.00 21.05h5.26v5.26h-5.26zM21.05 26.31h5.26v5.26h-5.26z" fill="#f0b070"/><path d="M5.26 21.05h5.26v5.26h-5.26z" fill="#000080"/><path d="M10.53 21.05h5.26v5.26h-5.26z" fill="#b0f0f0"/><path d="M26.31 21.05h5.26v5.26h-5.26zM26.31 31.58h5.26v5.26h-5.26z" fill="#4a90d0"/><path d="M26.31 26.31h5.26v5.26h-5.26zM5.26 31.58h5.26v5.26h-5.26zM21.05 36.84h5.26v5.26h-5.26z" fill="#0070c0"/><path d="M0.00 31.58h5.26v5.26h-5.26z" fill="#d4954a"/><path d="M21.05 31.58h5.26v5.26h-5.26z" fill="#a04800"/></g><g id="ct6"><path d="M5.26 0.00h5.26v5.26h-5.26zM0.00 10.53h5.26v5.26h-5.26zM21.05 26.31h5.26v5.26h-5.26zM5.26 36.84h5.26v5.26h-5.26z" fill="#f0b070"/><path d="M10.53 0.00h5.26v5.26h-5.26zM15.79 0.00h5.26v5.26h-5.26zM15.79 15.79h5.26v5.26h-5.26zM10.53 36.84h5.26v5.26h-5.26zM15.79 36.84h5.26v5.26h-5.26z" fill="#000000"/><path d="M21.05 0.00h5.26v5.26h-5.26zM21.05 15.79h5.26v5.26h-5.26zM5.26 21.05h5.26v5.26h-5.26z" fill="#0050a0"/><path d="M26.31 0.00h5.26v5.26h-5.26zM26.31 15.79h5.26v5.26h-5.26zM10.53 21.05h5.26v5.26h-5.26z" fill="#d8f0f0"/><path d="M0.00 5.26h5.26v5.26h-5.26zM0.00 31.58h5.26v5.26h-5.26z" fill="#f2d898"/><path d="M5.26 5.26h5.26v5.26h-5.26z" fill="#4b0070"/><path d="M10.53 5.26h5.26v5.26h-5.26z" fill="#90d0f0"/><path d="M21.05 5.26h5.26v5.26h-5.26zM21.05 21.05h5.26v5.26h-5.26zM21.05 31.58h5.26v5.26h-5.26z" fill="#c07000"/><path d="M26.31 5.26h5.26v5.26h-5.26z" fill="#60b0f0"/><path d="M5.26 10.53h5.26v5.26h-5.26zM26.31 21.05h5.26v5.26h-5.26zM5.26 26.31h5.26v5.26h-5.26zM26.31 31.58h5.26v5.26h-5.26z" fill="#4a90d0"/><path d="M0.00 15.79h5.26v5.26h-5.26zM0.00 21.05h5.26v5.26h-5.26zM0.00 26.31h5.26v5.26h-5.26z" fill="#d4954a"/><path d="M5.26 15.79h5.26v5.26h-5.26z" fill="#709090"/><path d="M10.53 15.79h5.26v5.26h-5.26z" fill="#500000"/><path d="M26.31 26.31h5.26v5.26h-5.26zM21.05 36.84h5.26v5.26h-5.26z" fill="#0070c0"/><path d="M5.26 31.58h5.26v5.26h-5.26z" fill="#700070"/><path d="M10.53 31.58h5.26v5.26h-5.26z" fill="#b0f0f0"/></g><g id="ct7"><path d="M0.00 0.00h5.26v5.26h-5.26zM10.53 21.05h5.26v5.26h-5.26z" fill="#d4954a"/><path d="M5.26 0.00h5.26v5.26h-5.26zM10.53 0.00h5.26v5.26h-5.26zM15.79 0.00h5.26v5.26h-5.26zM21.05 0.00h5.26v5.26h-5.26z" fill="#000000"/><path d="M26.31 0.00h5.26v5.26h-5.26zM10.53 36.84h5.26v5.26h-5.26z" fill="#0070c0"/><path d="M15.79 5.26h5.26v5.26h-5.26zM5.26 26.31h5.26v5.26h-5.26z" fill="#f2f0cc"/><path d="M21.05 5.26h5.26v5.26h-5.26z" fill="#700070"/><path d="M26.31 5.26h5.26v5.26h-5.26z" fill="#b0f0f0"/><path d="M15.79 10.53h5.26v5.26h-5.26z" fill="#c07000"/><path d="M21.05 10.53h5.26v5.26h-5.26zM15.79 21.05h5.26v5.26h-5.26z" fill="#4a90d0"/><path d="M10.53 15.79h5.26v5.26h-5.26zM5.26 31.58h5.26v5.26h-5.26z" fill="#f2d898"/><path d="M15.79 15.79h5.26v5.26h-5.26zM10.53 31.58h5.26v5.26h-5.26z" fill="#5050a0"/><path d="M21.05 15.79h5.26v5.26h-5.26zM15.79 31.58h5.26v5.26h-5.26z" fill="#d8f0f0"/><path d="M10.53 26.31h5.26v5.26h-5.26z" fill="#9a4848"/><path d="M15.79 26.31h5.26v5.26h-5.26z" fill="#90d0f0"/><path d="M5.26 36.84h5.26v5.26h-5.26z" fill="#f0b070"/></g><g id="ct8"><path d="M5.26 0.00h5.26v5.26h-5.26zM5.26 36.84h5.26v5.26h-5.26z" fill="#d4954a"/><path d="M10.53 0.00h5.26v5.26h-5.26zM15.79 0.00h5.26v5.26h-5.26zM10.53 36.84h5.26v5.26h-5.26zM15.79 36.84h5.26v5.26h-5.26z" fill="#000000"/><path d="M21.05 0.00h5.26v5.26h-5.26zM5.26 26.31h5.26v5.26h-5.26z" fill="#0070c0"/><path d="M0.00 5.26h5.26v5.26h-5.26zM0.00 10.53h5.26v5.26h-5.26zM5.26 15.79h5.26v5.26h-5.26zM0.00 21.05h5.26v5.26h-5.26zM0.00 31.58h5.26v5.26h-5.26z" fill="#f2d898"/><path d="M5.26 5.26h5.26v5.26h-5.26zM5.26 10.53h5.26v5.26h-5.26z" fill="#5050a0"/><path d="M10.53 5.26h5.26v5.26h-5.26zM10.53 10.53h5.26v5.26h-5.26z" fill="#d8f0f0"/><path d="M15.79 5.26h5.26v5.26h-5.26zM15.79 10.53h5.26v5.26h-5.26zM15.79 21.05h5.26v5.26h-5.26zM15.79 26.31h5.26v5.26h-5.26zM15.79 31.58h5.26v5.26h-5.26z" fill="#f2f0cc"/><path d="M21.05 5.26h5.26v5.26h-5.26z" fill="#a04800"/><path d="M26.31 5.26h5.26v5.26h-5.26zM21.05 36.84h5.26v5.26h-5.26z" fill="#60b0f0"/><path d="M21.05 10.53h5.26v5.26h-5.26zM21.05 26.31h5.26v5.26h-5.26z" fill="#9a4848"/><path d="M26.31 10.53h5.26v5.26h-5.26zM21.05 15.79h5.26v5.26h-5.26zM26.31 21.05h5.26v5.26h-5.26zM26.31 26.31h5.26v5.26h-5.26zM26.31 31.58h5.26v5.26h-5.26z" fill="#90d0f0"/><path d="M10.53 15.79h5.26v5.26h-5.26z" fill="#500000"/><path d="M15.79 15.79h5.26v5.26h-5.26z" fill="#000040"/><path d="M5.26 21.05h5.26v5.26h-5.26zM5.26 31.58h5.26v5.26h-5.26z" fill="#700070"/><path d="M10.53 21.05h5.26v5.26h-5.26zM10.53 31.58h5.26v5.26h-5.26z" fill="#b0f0f0"/><path d="M21.05 21.05h5.26v5.26h-5.26zM21.05 31.58h5.26v5.26h-5.26z" fill="#700040"/><path d="M0.00 26.31h5.26v5.26h-5.26z" fill="#f0b070"/></g><g id="ct9"><path d="M5.26 0.00h5.26v5.26h-5.26zM5.26 21.05h5.26v5.26h-5.26zM5.26 36.84h5.26v5.26h-5.26z" fill="#c07000"/><path d="M10.53 0.00h5.26v5.26h-5.26zM15.79 0.00h5.26v5.26h-5.26zM10.53 21.05h5.26v5.26h-5.26zM10.53 36.84h5.26v5.26h-5.26zM15.79 36.84h5.26v5.26h-5.26z" fill="#000000"/><path d="M21.05 0.00h5.26v5.26h-5.26zM5.26 10.53h5.26v5.26h-5.26zM26.31 10.53h5.26v5.26h-5.26zM26.31 26.31h5.26v5.26h-5.26z" fill="#4a90d0"/><path d="M0.00 5.26h5.26v5.26h-5.26zM0.00 15.79h5.26v5.26h-5.26zM0.00 31.58h5.26v5.26h-5.26z" fill="#f0b070"/><path d="M5.26 5.26h5.26v5.26h-5.26zM5.26 15.79h5.26v5.26h-5.26z" fill="#0050a0"/><path d="M10.53 5.26h5.26v5.26h-5.26zM10.53 15.79h5.26v5.26h-5.26z" fill="#d8f0f0"/><path d="M15.79 5.26h5.26v5.26h-5.26zM15.79 15.79h5.26v5.26h-5.26zM15.79 31.58h5.26v5.26h-5.26z" fill="#f2f0cc"/><path d="M21.05 5.26h5.26v5.26h-5.26zM21.05 15.79h5.26v5.26h-5.26z" fill="#a04800"/><path d="M26.31 5.26h5.26v5.26h-5.26zM21.05 36.84h5.26v5.26h-5.26z" fill="#60b0f0"/><path d="M0.00 10.53h5.26v5.26h-5.26zM21.05 10.53h5.26v5.26h-5.26zM21.05 26.31h5.26v5.26h-5.26z" fill="#d4954a"/><path d="M26.31 15.79h5.26v5.26h-5.26zM26.31 21.05h5.26v5.26h-5.26zM5.26 31.58h5.26v5.26h-5.26z" fill="#0070c0"/><path d="M15.79 21.05h5.26v5.26h-5.26z" fill="#000040"/><path d="M21.05 21.05h5.26v5.26h-5.26z" fill="#a09070"/><path d="M21.05 31.58h5.26v5.26h-5.26z" fill="#700040"/><path d="M26.31 31.58h5.26v5.26h-5.26z" fill="#90d0f0"/></g><g id="ctd"><path d="M0.00 36.84h5.26v5.26h-5.26z" fill="#f2f0b8"/><path d="M5.26 36.84h5.26v5.26h-5.26z" fill="#700070"/><path d="M10.53 36.84h5.26v5.26h-5.26z" fill="#b0f0f0"/></g><g id="ctc"><path d="M0.00 10.53h5.26v5.26h-5.26zM0.00 36.84h5.26v5.26h-5.26z" fill="#f2f0b8"/><path d="M5.26 10.53h5.26v5.26h-5.26zM5.26 36.84h5.26v5.26h-5.26z" fill="#700070"/><path d="M10.53 10.53h5.26v5.26h-5.26zM10.53 36.84h5.26v5.26h-5.26z" fill="#b0f0f0"/></g></defs>
<use href="#ct1" x="188.84" y="496.50"/><use href="#ct0" x="220.42" y="496.50"/>
<use href="#ct9" x="173.06" y="622.81"/><use href="#ctd" x="204.63" y="622.81"/><use href="#ct5" x="220.42" y="622.81"/>
<use href="#ct9" x="220.42" y="749.12"/>
<use href="#ct8" x="173.06" y="875.44"/><use href="#ctd" x="204.63" y="875.44"/><use href="#ct5" x="220.42" y="875.44"/>
<use href="#ct8" x="220.42" y="1007.01"/>
<use href="#ct7" x="173.06" y="1133.32"/><use href="#ctd" x="204.63" y="1133.32"/><use href="#ct5" x="220.42" y="1133.32"/>
<use href="#ct7" x="220.42" y="1259.63"/>
<use href="#ct6" x="173.06" y="1385.95"/><use href="#ctd" x="204.63" y="1385.95"/><use href="#ct5" x="220.42" y="1385.95"/>
<use href="#ct6" x="220.42" y="1517.52"/>
<use href="#ct5" x="173.06" y="1643.83"/><use href="#ctd" x="204.63" y="1643.83"/><use href="#ct5" x="220.42" y="1643.83"/>
<use href="#ct1" x="215.08" y="1781.80"/><use href="#ct0" x="246.65" y="1781.80"/><use href="#ctd" x="278.23" y="1781.80"/><use href="#ct0" x="294.02" y="1781.80"/><use href="#ct6" x="325.60" y="1781.80"/><use href="#ctd" x="357.18" y="1781.80"/><use href="#ct2" x="372.97" y="1781.80"/><use href="#ct5" x="404.54" y="1781.80"/>
<use href="#ct2" x="215.08" y="1855.40"/><use href="#ct1" x="246.65" y="1855.40"/><use href="#ctc" x="278.23" y="1855.40"/><use href="#ct0" x="294.02" y="1855.40"/><use href="#ct0" x="325.60" y="1855.40"/><use href="#ctc" x="357.18" y="1855.40"/><use href="#ct0" x="372.97" y="1855.40"/><use href="#ct0" x="404.54" y="1855.40"/>
<use href="#ct1" x="499.49" y="1781.80"/><use href="#ct0" x="531.07" y="1781.80"/><use href="#ctd" x="562.65" y="1781.80"/><use href="#ct0" x="578.44" y="1781.80"/><use href="#ct6" x="610.02" y="1781.80"/><use href="#ctd" x="641.60" y="1781.80"/><use href="#ct2" x="657.38" y="1781.80"/><use href="#ct5" x="688.96" y="1781.80"/>
<use href="#ct2" x="499.49" y="1855.40"/><use href="#ct2" x="531.07" y="1855.40"/><use href="#ctc" x="562.65" y="1855.40"/><use href="#ct0" x="578.44" y="1855.40"/><use href="#ct0" x="610.02" y="1855.40"/><use href="#ctc" x="641.60" y="1855.40"/><use href="#ct0" x="657.38" y="1855.40"/><use href="#ct0" x="688.96" y="1855.40"/>
<use href="#ct1" x="778.65" y="1781.80"/><use href="#ct0" x="810.22" y="1781.80"/><use href="#ctd" x="841.80" y="1781.80"/><use href="#ct0" x="857.59" y="1781.80"/><use href="#ct6" x="889.17" y="1781.80"/><use href="#ctd" x="920.75" y="1781.80"/><use href="#ct2" x="936.54" y="1781.80"/><use href="#ct5" x="968.11" y="1781.80"/>
<use href="#ct2" x="778.65" y="1855.40"/><use href="#ct3" x="810.22" y="1855.40"/><use href="#ctc" x="841.80" y="1855.40"/><use href="#ct0" x="857.59" y="1855.40"/><use href="#ct0" x="889.17" y="1855.40"/><use href="#ctc" x="920.75" y="1855.40"/><use href="#ct0" x="936.54" y="1855.40"/><use href="#ct0" x="968.11" y="1855.40"/>
<use href="#ct1" x="1063.06" y="1781.80"/><use href="#ct1" x="1094.64" y="1781.80"/><use href="#ctd" x="1126.22" y="1781.80"/><use href="#ct0" x="1142.01" y="1781.80"/><use href="#ct6" x="1173.59" y="1781.80"/><use href="#ctd" x="1205.17" y="1781.80"/><use href="#ct2" x="1220.95" y="1781.80"/><use href="#ct5" x="1252.53" y="1781.80"/>
<use href="#ct0" x="1078.85" y="1855.40"/><use href="#ctc" x="1110.43" y="1855.40"/><use href="#ct0" x="1126.22" y="1855.40"/><use href="#ct0" x="1157.80" y="1855.40"/><use href="#ctc" x="1189.38" y="1855.40"/><use href="#ct0" x="1205.17" y="1855.40"/><use href="#ct0" x="1236.74" y="1855.40"/>
<use href="#ct1" x="1342.22" y="1781.80"/><use href="#ct1" x="1373.79" y="1781.80"/><use href="#ctd" x="1405.37" y="1781.80"/><use href="#ct0" x="1421.16" y="1781.80"/><use href="#ct6" x="1452.74" y="1781.80"/><use href="#ctd" x="1484.32" y="1781.80"/><use href="#ct2" x="1500.11" y="1781.80"/><use href="#ct5" x="1531.68" y="1781.80"/>
<use href="#ct1" x="1358.00" y="1855.40"/><use href="#ctc" x="1389.58" y="1855.40"/><use href="#ct0" x="1405.37" y="1855.40"/><use href="#ct0" x="1436.95" y="1855.40"/><use href="#ctc" x="1468.53" y="1855.40"/><use href="#ct0" x="1484.32" y="1855.40"/><use href="#ct0" x="1515.89" y="1855.40"/>
<use href="#ct1" x="1626.63" y="1781.80"/><use href="#ct1" x="1658.21" y="1781.80"/><use href="#ctd" x="1689.79" y="1781.80"/><use href="#ct0" x="1705.58" y="1781.80"/><use href="#ct6" x="1737.16" y="1781.80"/><use href="#ctd" x="1768.73" y="1781.80"/><use href="#ct2" x="1784.52" y="1781.80"/><use href="#ct5" x="1816.10" y="1781.80"/>
<use href="#ct2" x="1642.42" y="1855.40"/><use href="#ctc" x="1674.00" y="1855.40"/><use href="#ct0" x="1689.79" y="1855.40"/><use href="#ct0" x="1721.37" y="1855.40"/><use href="#ctc" x="1752.95" y="1855.40"/><use href="#ct0" x="1768.73" y="1855.40"/><use href="#ct0" x="1800.31" y="1855.40"/>
<use href="#ct1" x="1905.78" y="1781.80"/><use href="#ct1" x="1937.36" y="1781.80"/><use href="#ctd" x="1968.94" y="1781.80"/><use href="#ct0" x="1984.73" y="1781.80"/><use href="#ct6" x="2016.31" y="1781.80"/><use href="#ctd" x="2047.89" y="1781.80"/><use href="#ct2" x="2063.67" y="1781.80"/><use href="#ct5" x="2095.25" y="1781.80"/>
<use href="#ct3" x="1921.57" y="1855.40"/><use href="#ctc" x="1953.15" y="1855.40"/><use href="#ct0" x="1968.94" y="1855.40"/><use href="#ct0" x="2000.52" y="1855.40"/><use href="#ctc" x="2032.10" y="1855.40"/><use href="#ct0" x="2047.89" y="1855.40"/><use href="#ct0" x="2079.46" y="1855.40"/>
<use href="#ct1" x="2190.20" y="1781.80"/><use href="#ct1" x="2221.78" y="1781.80"/><use href="#ctd" x="2253.36" y="1781.80"/><use href="#ct0" x="2269.15" y="1781.80"/><use href="#ct6" x="2300.73" y="1781.80"/><use href="#ctd" x="2332.30" y="1781.80"/><use href="#ct2" x="2348.09" y="1781.80"/><use href="#ct5" x="2379.67" y="1781.80"/>
<use href="#ct4" x="2205.99" y="1855.40"/><use href="#ctc" x="2237.57" y="1855.40"/><use href="#ct0" x="2253.36" y="1855.40"/><use href="#ct0" x="2284.94" y="1855.40"/><use href="#ctc" x="2316.51" y="1855.40"/><use href="#ct0" x="2332.30" y="1855.40"/><use href="#ct0" x="2363.88" y="1855.40"/>
<use href="#ct1" x="2469.35" y="1781.80"/><use href="#ct1" x="2500.93" y="1781.80"/><use href="#ctd" x="2532.51" y="1781.80"/><use href="#ct0" x="2548.30" y="1781.80"/><use href="#ct6" x="2579.88" y="1781.80"/><use href="#ctd" x="2611.45" y="1781.80"/><use href="#ct2" x="2627.24" y="1781.80"/><use href="#ct5" x="2658.82" y="1781.80"/>
<use href="#ct5" x="2485.14" y="1855.40"/><use href="#ctc" x="2516.72" y="1855.40"/><use href="#ct0" x="2532.51" y="1855.40"/><use href="#ct0" x="2564.09" y="1855.40"/><use href="#ctc" x="2595.67" y="1855.40"/><use href="#ct0" x="2611.45" y="1855.40"/><use href="#ct0" x="2643.03" y="1855.40"/>
<use href="#ct1" x="2753.77" y="1781.80"/><use href="#ct1" x="2785.35" y="1781.80"/><use href="#ctd" x="2816.93" y="1781.80"/><use href="#ct0" x="2832.72" y="1781.80"/><use href="#ct6" x="2864.29" y="1781.80"/><use href="#ctd" x="2895.87" y="1781.80"/><use href="#ct2" x="2911.66" y="1781.80"/><use href="#ct5" x="2943.24" y="1781.80"/>
<use href="#ct6" x="2769.56" y="1855.40"/><use href="#ctc" x="2801.14" y="1855.40"/><use href="#ct0" x="2816.93" y="1855.40"/><use href="#ct0" x="2848.51" y="1855.40"/><use href="#ctc" x="2880.08" y="1855.40"/><use href="#ct0" x="2895.87" y="1855.40"/><use href="#ct0" x="2927.45" y="1855.40"/>
<use href="#ct1" x="3032.92" y="1781.80"/><use href="#ct1" x="3064.50" y="1781.80"/><use href="#ctd" x="3096.08" y="1781.80"/><use href="#ct0" x="3111.87" y="1781.80"/><use href="#ct6" x="3143.45" y="1781.80"/><use href="#ctd" x="3175.02" y="1781.80"/><use href="#ct2" x="3190.81" y="1781.80"/><use href="#ct5" x="3222.39" y="1781.80"/>
<use href="#ct7" x="3048.71" y="1855.40"/><use href="#ctc" x="3080.29" y="1855.40"/><use href="#ct0" x="3096.08" y="1855.40"/><use href="#ct0" x="3127.66" y="1855.40"/><use href="#ctc" x="3159.23" y="1855.40"/><use href="#ct0" x="3175.02" y="1855.40"/><use href="#ct0" x="3206.60" y="1855.40"/>
<use href="#ct1" x="3317.34" y="1781.80"/><use href="#ct1" x="3348.92" y="1781.80"/><use href="#ctd" x="3380.50" y="1781.80"/><use href="#ct0" x="3396.29" y="1781.80"/><use href="#ct6" x="3427.86" y="1781.80"/><use href="#ctd" x="3459.44" y="1781.80"/><use href="#ct2" x="3475.23" y="1781.80"/><use href="#ct5" x="3506.81" y="1781.80"/>
<use href="#ct8" x="3333.13" y="1855.40"/><use href="#ctc" x="3364.71" y="1855.40"/><use href="#ct0" x="3380.50" y="1855.40"/><use href="#ct0" x="3412.07" y="1855.40"/><use href="#ctc" x="3443.65" y="1855.40"/><use href="#ct0" x="3459.44" y="1855.40"/><use href="#ct0" x="3491.02" y="1855.40"/>
<clipPath id="pc"><rect x="299.3" y="402" width="3149.7" height="1326.8"/></clipPath>
<polyline points="320.2,1498.7 604.6,1422.3 883.8,1342.1 1168.2,1258.1 1447.3,1169.9 1731.8,1077.5 2010.9,980.5 2295.3,878.8 2574.5,772.2 2858.9,660.3 3138.0,543.0 3422.5,420.0" fill="none" stroke="#ff0000" stroke-opacity="0.9" stroke-width="5" clip-path="url(#pc)"/>
<defs><g id="sqR"><path d="M0.00 0.00h5.26v5.26h-5.26zM52.63 0.00h5.26v5.26h-5.26zM0.00 52.63h5.26v5.26h-5.26zM52.63 52.63h5.26v5.26h-5.26z" fill="rgba(0,0,0,0.10)" shape-rendering="crispEdges"/><path d="M5.26 0.00h5.26v5.26h-5.26zM10.53 0.00h5.26v5.26h-5.26zM15.79 0.00h5.26v5.26h-5.26zM21.05 0.00h5.26v5.26h-5.26zM26.31 0.00h5.26v5.26h-5.26zM31.58 0.00h5.26v5.26h-5.26zM36.84 0.00h5.26v5.26h-5.26zM42.10 0.00h5.26v5.26h-5.26zM47.37 0.00h5.26v5.26h-5.26zM0.00 5.26h5.26v5.26h-5.26zM52.63 5.26h5.26v5.26h-5.26zM0.00 10.53h5.26v5.26h-5.26zM52.63 10.53h5.26v5.26h-5.26zM0.00 15.79h5.26v5.26h-5.26zM52.63 15.79h5.26v5.26h-5.26zM0.00 21.05h5.26v5.26h-5.26zM52.63 21.05h5.26v5.26h-5.26zM0.00 26.31h5.26v5.26h-5.26zM52.63 26.31h5.26v5.26h-5.26zM0.00 31.58h5.26v5.26h-5.26zM52.63 31.58h5.26v5.26h-5.26zM0.00 36.84h5.26v5.26h-5.26zM52.63 36.84h5.26v5.26h-5.26zM0.00 42.10h5.26v5.26h-5.26zM52.63 42.10h5.26v5.26h-5.26zM0.00 47.37h5.26v5.26h-5.26zM52.63 47.37h5.26v5.26h-5.26zM5.26 52.63h5.26v5.26h-5.26zM10.53 52.63h5.26v5.26h-5.26zM15.79 52.63h5.26v5.26h-5.26zM21.05 52.63h5.26v5.26h-5.26zM26.31 52.63h5.26v5.26h-5.26zM31.58 52.63h5.26v5.26h-5.26zM36.84 52.63h5.26v5.26h-5.26zM42.10 52.63h5.26v5.26h-5.26zM47.37 52.63h5.26v5.26h-5.26z" fill="rgba(0,0,0,0.5)" shape-rendering="crispEdges"/><path d="M5.26 5.26h5.26v5.26h-5.26zM47.37 5.26h5.26v5.26h-5.26zM5.26 47.37h5.26v5.26h-5.26zM47.37 47.37h5.26v5.26h-5.26z" fill="#600000" shape-rendering="crispEdges"/><path d="M10.53 5.26h5.26v5.26h-5.26zM15.79 5.26h5.26v5.26h-5.26zM21.05 5.26h5.26v5.26h-5.26zM26.31 5.26h5.26v5.26h-5.26zM31.58 5.26h5.26v5.26h-5.26zM36.84 5.26h5.26v5.26h-5.26zM42.10 5.26h5.26v5.26h-5.26zM5.26 10.53h5.26v5.26h-5.26zM47.37 10.53h5.26v5.26h-5.26zM5.26 15.79h5.26v5.26h-5.26zM47.37 15.79h5.26v5.26h-5.26zM5.26 21.05h5.26v5.26h-5.26zM47.37 21.05h5.26v5.26h-5.26zM5.26 26.31h5.26v5.26h-5.26zM47.37 26.31h5.26v5.26h-5.26zM5.26 31.58h5.26v5.26h-5.26zM47.37 31.58h5.26v5.26h-5.26zM5.26 36.84h5.26v5.26h-5.26zM47.37 36.84h5.26v5.26h-5.26zM5.26 42.10h5.26v5.26h-5.26zM47.37 42.10h5.26v5.26h-5.26zM10.53 47.37h5.26v5.26h-5.26zM15.79 47.37h5.26v5.26h-5.26zM21.05 47.37h5.26v5.26h-5.26zM26.31 47.37h5.26v5.26h-5.26zM31.58 47.37h5.26v5.26h-5.26zM36.84 47.37h5.26v5.26h-5.26zM42.10 47.37h5.26v5.26h-5.26z" fill="#800000" shape-rendering="crispEdges"/><path d="M10.53 10.53h5.26v5.26h-5.26zM15.79 10.53h5.26v5.26h-5.26zM21.05 10.53h5.26v5.26h-5.26zM26.31 10.53h5.26v5.26h-5.26zM31.58 10.53h5.26v5.26h-5.26zM36.84 10.53h5.26v5.26h-5.26zM42.10 10.53h5.26v5.26h-5.26zM10.53 15.79h5.26v5.26h-5.26zM15.79 15.79h5.26v5.26h-5.26zM21.05 15.79h5.26v5.26h-5.26zM26.31 15.79h5.26v5.26h-5.26zM31.58 15.79h5.26v5.26h-5.26zM36.84 15.79h5.26v5.26h-5.26zM42.10 15.79h5.26v5.26h-5.26zM10.53 21.05h5.26v5.26h-5.26zM15.79 21.05h5.26v5.26h-5.26zM21.05 21.05h5.26v5.26h-5.26zM26.31 21.05h5.26v5.26h-5.26zM31.58 21.05h5.26v5.26h-5.26zM36.84 21.05h5.26v5.26h-5.26zM42.10 21.05h5.26v5.26h-5.26zM10.53 26.31h5.26v5.26h-5.26zM15.79 26.31h5.26v5.26h-5.26zM21.05 26.31h5.26v5.26h-5.26zM26.31 26.31h5.26v5.26h-5.26zM31.58 26.31h5.26v5.26h-5.26zM36.84 26.31h5.26v5.26h-5.26zM42.10 26.31h5.26v5.26h-5.26zM10.53 31.58h5.26v5.26h-5.26zM15.79 31.58h5.26v5.26h-5.26zM21.05 31.58h5.26v5.26h-5.26zM26.31 31.58h5.26v5.26h-5.26zM31.58 31.58h5.26v5.26h-5.26zM36.84 31.58h5.26v5.26h-5.26zM42.10 31.58h5.26v5.26h-5.26zM10.53 36.84h5.26v5.26h-5.26zM15.79 36.84h5.26v5.26h-5.26zM21.05 36.84h5.26v5.26h-5.26zM26.31 36.84h5.26v5.26h-5.26zM31.58 36.84h5.26v5.26h-5.26zM36.84 36.84h5.26v5.26h-5.26zM42.10 36.84h5.26v5.26h-5.26zM10.53 42.10h5.26v5.26h-5.26zM15.79 42.10h5.26v5.26h-5.26zM21.05 42.10h5.26v5.26h-5.26zM26.31 42.10h5.26v5.26h-5.26zM31.58 42.10h5.26v5.26h-5.26zM36.84 42.10h5.26v5.26h-5.26zM42.10 42.10h5.26v5.26h-5.26z" fill="#ff0000" shape-rendering="crispEdges"/></g></defs>
<defs><g id="sqG"><path d="M0.00 0.00h5.26v5.26h-5.26zM52.63 0.00h5.26v5.26h-5.26zM0.00 52.63h5.26v5.26h-5.26zM52.63 52.63h5.26v5.26h-5.26z" fill="rgba(0,0,0,0.10)" shape-rendering="crispEdges"/><path d="M5.26 0.00h5.26v5.26h-5.26zM10.53 0.00h5.26v5.26h-5.26zM15.79 0.00h5.26v5.26h-5.26zM21.05 0.00h5.26v5.26h-5.26zM26.31 0.00h5.26v5.26h-5.26zM31.58 0.00h5.26v5.26h-5.26zM36.84 0.00h5.26v5.26h-5.26zM42.10 0.00h5.26v5.26h-5.26zM47.37 0.00h5.26v5.26h-5.26zM0.00 5.26h5.26v5.26h-5.26zM52.63 5.26h5.26v5.26h-5.26zM0.00 10.53h5.26v5.26h-5.26zM52.63 10.53h5.26v5.26h-5.26zM0.00 15.79h5.26v5.26h-5.26zM52.63 15.79h5.26v5.26h-5.26zM0.00 21.05h5.26v5.26h-5.26zM52.63 21.05h5.26v5.26h-5.26zM0.00 26.31h5.26v5.26h-5.26zM52.63 26.31h5.26v5.26h-5.26zM0.00 31.58h5.26v5.26h-5.26zM52.63 31.58h5.26v5.26h-5.26zM0.00 36.84h5.26v5.26h-5.26zM52.63 36.84h5.26v5.26h-5.26zM0.00 42.10h5.26v5.26h-5.26zM52.63 42.10h5.26v5.26h-5.26zM0.00 47.37h5.26v5.26h-5.26zM52.63 47.37h5.26v5.26h-5.26zM5.26 52.63h5.26v5.26h-5.26zM10.53 52.63h5.26v5.26h-5.26zM15.79 52.63h5.26v5.26h-5.26zM21.05 52.63h5.26v5.26h-5.26zM26.31 52.63h5.26v5.26h-5.26zM31.58 52.63h5.26v5.26h-5.26zM36.84 52.63h5.26v5.26h-5.26zM42.10 52.63h5.26v5.26h-5.26zM47.37 52.63h5.26v5.26h-5.26z" fill="rgba(0,0,0,0.5)" shape-rendering="crispEdges"/><path d="M5.26 5.26h5.26v5.26h-5.26zM47.37 5.26h5.26v5.26h-5.26zM5.26 47.37h5.26v5.26h-5.26zM47.37 47.37h5.26v5.26h-5.26z" fill="#202020" shape-rendering="crispEdges"/><path d="M10.53 5.26h5.26v5.26h-5.26zM15.79 5.26h5.26v5.26h-5.26zM21.05 5.26h5.26v5.26h-5.26zM26.31 5.26h5.26v5.26h-5.26zM31.58 5.26h5.26v5.26h-5.26zM36.84 5.26h5.26v5.26h-5.26zM42.10 5.26h5.26v5.26h-5.26zM5.26 10.53h5.26v5.26h-5.26zM47.37 10.53h5.26v5.26h-5.26zM5.26 15.79h5.26v5.26h-5.26zM47.37 15.79h5.26v5.26h-5.26zM5.26 21.05h5.26v5.26h-5.26zM47.37 21.05h5.26v5.26h-5.26zM5.26 26.31h5.26v5.26h-5.26zM47.37 26.31h5.26v5.26h-5.26zM5.26 31.58h5.26v5.26h-5.26zM47.37 31.58h5.26v5.26h-5.26zM5.26 36.84h5.26v5.26h-5.26zM47.37 36.84h5.26v5.26h-5.26zM5.26 42.10h5.26v5.26h-5.26zM47.37 42.10h5.26v5.26h-5.26zM10.53 47.37h5.26v5.26h-5.26zM15.79 47.37h5.26v5.26h-5.26zM21.05 47.37h5.26v5.26h-5.26zM26.31 47.37h5.26v5.26h-5.26zM31.58 47.37h5.26v5.26h-5.26zM36.84 47.37h5.26v5.26h-5.26zM42.10 47.37h5.26v5.26h-5.26z" fill="#404040" shape-rendering="crispEdges"/><path d="M10.53 10.53h5.26v5.26h-5.26zM15.79 10.53h5.26v5.26h-5.26zM21.05 10.53h5.26v5.26h-5.26zM26.31 10.53h5.26v5.26h-5.26zM31.58 10.53h5.26v5.26h-5.26zM36.84 10.53h5.26v5.26h-5.26zM42.10 10.53h5.26v5.26h-5.26zM10.53 15.79h5.26v5.26h-5.26zM15.79 15.79h5.26v5.26h-5.26zM21.05 15.79h5.26v5.26h-5.26zM26.31 15.79h5.26v5.26h-5.26zM31.58 15.79h5.26v5.26h-5.26zM36.84 15.79h5.26v5.26h-5.26zM42.10 15.79h5.26v5.26h-5.26zM10.53 21.05h5.26v5.26h-5.26zM15.79 21.05h5.26v5.26h-5.26zM21.05 21.05h5.26v5.26h-5.26zM26.31 21.05h5.26v5.26h-5.26zM31.58 21.05h5.26v5.26h-5.26zM36.84 21.05h5.26v5.26h-5.26zM42.10 21.05h5.26v5.26h-5.26zM10.53 26.31h5.26v5.26h-5.26zM15.79 26.31h5.26v5.26h-5.26zM21.05 26.31h5.26v5.26h-5.26zM26.31 26.31h5.26v5.26h-5.26zM31.58 26.31h5.26v5.26h-5.26zM36.84 26.31h5.26v5.26h-5.26zM42.10 26.31h5.26v5.26h-5.26zM10.53 31.58h5.26v5.26h-5.26zM15.79 31.58h5.26v5.26h-5.26zM21.05 31.58h5.26v5.26h-5.26zM26.31 31.58h5.26v5.26h-5.26zM31.58 31.58h5.26v5.26h-5.26zM36.84 31.58h5.26v5.26h-5.26zM42.10 31.58h5.26v5.26h-5.26zM10.53 36.84h5.26v5.26h-5.26zM15.79 36.84h5.26v5.26h-5.26zM21.05 36.84h5.26v5.26h-5.26zM26.31 36.84h5.26v5.26h-5.26zM31.58 36.84h5.26v5.26h-5.26zM36.84 36.84h5.26v5.26h-5.26zM42.10 36.84h5.26v5.26h-5.26zM10.53 42.10h5.26v5.26h-5.26zM15.79 42.10h5.26v5.26h-5.26zM21.05 42.10h5.26v5.26h-5.26zM26.31 42.10h5.26v5.26h-5.26zM31.58 42.10h5.26v5.26h-5.26zM36.84 42.10h5.26v5.26h-5.26zM42.10 42.10h5.26v5.26h-5.26z" fill="#808080" shape-rendering="crispEdges"/></g></defs>
<use href="#sqR" x="293.85" y="1508.42"/>
<use href="#sqR" x="578.27" y="1413.21"/>
<use href="#sqR" x="857.42" y="1297.83"/>
<use href="#sqR" x="1141.84" y="1191.90"/>
<use href="#sqR" x="1705.41" y="1012.96"/>
<use href="#sqR" x="1984.56" y="971.36"/>
<use href="#sqR" x="2268.98" y="892.74"/>
<use href="#sqG" x="1420.99" y="434.03"/>
<polyline points="320.9,1523.8 605.3,1550.6 884.5,1560.9 1168.9,1592.0 1448.0,1618.8 1732.5,1656.8 2011.6,1676.0 2296.0,1707.9" fill="none" stroke="#008000" stroke-width="10.5" stroke-linejoin="round" clip-path="url(#pc)"/>
<defs><g id="circ"><path d="M10.53 0.00h5.26v5.26h-5.26zM15.79 0.00h5.26v5.26h-5.26zM21.05 0.00h5.26v5.26h-5.26zM26.31 0.00h5.26v5.26h-5.26zM10.53 47.37h5.26v5.26h-5.26zM15.79 47.37h5.26v5.26h-5.26zM21.05 47.37h5.26v5.26h-5.26zM26.31 47.37h5.26v5.26h-5.26z" fill="rgba(0,0,0,0.15)" shape-rendering="crispEdges"/><path d="M5.26 5.26h5.26v5.26h-5.26zM31.58 5.26h5.26v5.26h-5.26zM0.00 10.53h5.26v5.26h-5.26zM36.84 10.53h5.26v5.26h-5.26zM0.00 36.84h5.26v5.26h-5.26zM36.84 36.84h5.26v5.26h-5.26zM5.26 42.10h5.26v5.26h-5.26zM31.58 42.10h5.26v5.26h-5.26z" fill="rgba(0,0,0,0.45)" shape-rendering="crispEdges"/><path d="M10.53 5.26h5.26v5.26h-5.26zM15.79 5.26h5.26v5.26h-5.26zM21.05 5.26h5.26v5.26h-5.26zM26.31 5.26h5.26v5.26h-5.26zM0.00 15.79h5.26v5.26h-5.26zM36.84 15.79h5.26v5.26h-5.26zM0.00 21.05h5.26v5.26h-5.26zM36.84 21.05h5.26v5.26h-5.26zM0.00 26.31h5.26v5.26h-5.26zM36.84 26.31h5.26v5.26h-5.26zM0.00 31.58h5.26v5.26h-5.26zM36.84 31.58h5.26v5.26h-5.26zM10.53 42.10h5.26v5.26h-5.26zM15.79 42.10h5.26v5.26h-5.26zM21.05 42.10h5.26v5.26h-5.26zM26.31 42.10h5.26v5.26h-5.26z" fill="#0a1a0a" shape-rendering="crispEdges"/><path d="M5.26 10.53h5.26v5.26h-5.26zM31.58 10.53h5.26v5.26h-5.26zM5.26 36.84h5.26v5.26h-5.26zM31.58 36.84h5.26v5.26h-5.26z" fill="#0a300a" shape-rendering="crispEdges"/><path d="M10.53 10.53h5.26v5.26h-5.26zM15.79 10.53h5.26v5.26h-5.26zM21.05 10.53h5.26v5.26h-5.26zM26.31 10.53h5.26v5.26h-5.26zM5.26 15.79h5.26v5.26h-5.26zM10.53 15.79h5.26v5.26h-5.26zM15.79 15.79h5.26v5.26h-5.26zM21.05 15.79h5.26v5.26h-5.26zM26.31 15.79h5.26v5.26h-5.26zM31.58 15.79h5.26v5.26h-5.26zM5.26 21.05h5.26v5.26h-5.26zM10.53 21.05h5.26v5.26h-5.26zM15.79 21.05h5.26v5.26h-5.26zM21.05 21.05h5.26v5.26h-5.26zM26.31 21.05h5.26v5.26h-5.26zM31.58 21.05h5.26v5.26h-5.26zM5.26 26.31h5.26v5.26h-5.26zM10.53 26.31h5.26v5.26h-5.26zM15.79 26.31h5.26v5.26h-5.26zM21.05 26.31h5.26v5.26h-5.26zM26.31 26.31h5.26v5.26h-5.26zM31.58 26.31h5.26v5.26h-5.26zM5.26 31.58h5.26v5.26h-5.26zM10.53 31.58h5.26v5.26h-5.26zM15.79 31.58h5.26v5.26h-5.26zM21.05 31.58h5.26v5.26h-5.26zM26.31 31.58h5.26v5.26h-5.26zM31.58 31.58h5.26v5.26h-5.26zM10.53 36.84h5.26v5.26h-5.26zM15.79 36.84h5.26v5.26h-5.26zM21.05 36.84h5.26v5.26h-5.26zM26.31 36.84h5.26v5.26h-5.26z" fill="#008000" shape-rendering="crispEdges"/></g></defs>
<use href="#circ" x="299.85" y="1497.53"/>
<use href="#circ" x="584.27" y="1524.33"/>
<use href="#circ" x="863.42" y="1534.54"/>
<use href="#circ" x="1147.84" y="1565.68"/>
<use href="#circ" x="1426.99" y="1592.48"/>
<use href="#circ" x="1711.40" y="1630.52"/>
<use href="#circ" x="1990.56" y="1649.66"/>
<use href="#circ" x="2274.97" y="1681.57"/>
<rect x="51.90" y="2092.50" width="41.90" height="5.10" fill="#dcdcdc" />
<rect x="252.30" y="2092.50" width="778.80" height="5.10" fill="#dcdcdc" />
<rect x="51.90" y="2092.50" width="5.10" height="285.10" fill="#dcdcdc" />
<rect x="1026.00" y="2092.50" width="5.10" height="285.10" fill="#dcdcdc" />
<rect x="51.90" y="2372.50" width="979.20" height="5.10" fill="#dcdcdc" />
<rect x="1079.00" y="2092.30" width="41.00" height="5.10" fill="#dcdcdc" />
<rect x="1468.50" y="2092.30" width="1427.40" height="5.10" fill="#dcdcdc" />
<rect x="1079.00" y="2092.30" width="5.10" height="364.40" fill="#dcdcdc" />
<rect x="2890.80" y="2092.30" width="5.10" height="364.40" fill="#dcdcdc" />
<rect x="1079.00" y="2451.60" width="1816.90" height="5.10" fill="#dcdcdc" />
<path d="M57.07 1966.00h26.31v5.26h-26.31zM57.07 1971.26h10.53v5.26h-10.53zM78.12 1971.26h10.53v5.26h-10.53zM141.28 1971.26h10.53v5.26h-10.53zM57.07 1976.53h10.53v5.26h-10.53zM83.38 1976.53h10.53v5.26h-10.53zM141.28 1976.53h10.53v5.26h-10.53zM57.07 1981.79h10.53v5.26h-10.53zM83.38 1981.79h10.53v5.26h-10.53zM109.70 1981.79h21.05v5.26h-21.05zM141.28 1981.79h15.79v5.26h-15.79zM167.59 1981.79h21.05v5.26h-21.05zM199.17 1981.79h10.53v5.26h-10.53zM57.07 1987.05h10.53v5.26h-10.53zM83.38 1987.05h10.53v5.26h-10.53zM125.49 1987.05h10.53v5.26h-10.53zM141.28 1987.05h10.53v5.26h-10.53zM183.38 1987.05h10.53v5.26h-10.53zM57.07 1992.32h10.53v5.26h-10.53zM83.38 1992.32h10.53v5.26h-10.53zM109.70 1992.32h26.31v5.26h-26.31zM141.28 1992.32h10.53v5.26h-10.53zM167.59 1992.32h26.31v5.26h-26.31zM57.07 1997.58h10.53v5.26h-10.53zM83.38 1997.58h10.53v5.26h-10.53zM104.44 1997.58h10.53v5.26h-10.53zM125.49 1997.58h10.53v5.26h-10.53zM141.28 1997.58h10.53v5.26h-10.53zM162.33 1997.58h10.53v5.26h-10.53zM183.38 1997.58h10.53v5.26h-10.53zM57.07 2002.84h10.53v5.26h-10.53zM78.12 2002.84h10.53v5.26h-10.53zM104.44 2002.84h10.53v5.26h-10.53zM125.49 2002.84h10.53v5.26h-10.53zM141.28 2002.84h10.53v5.26h-10.53zM162.33 2002.84h10.53v5.26h-10.53zM183.38 2002.84h10.53v5.26h-10.53zM57.07 2008.10h26.31v5.26h-26.31zM109.70 2008.10h26.31v5.26h-26.31zM146.54 2008.10h10.53v5.26h-10.53zM167.59 2008.10h26.31v5.26h-26.31zM199.17 2008.10h10.53v5.26h-10.53z" fill="#000" shape-rendering="crispEdges"/>
<path d="M451.90 1965.90h31.58v5.26h-31.58zM609.79 1965.90h10.53v5.26h-10.53zM625.58 1965.90h31.58v5.26h-31.58zM762.42 1965.90h10.53v5.26h-10.53zM809.78 1965.90h10.53v5.26h-10.53zM851.89 1965.90h10.53v5.26h-10.53zM867.68 1965.90h26.31v5.26h-26.31zM920.31 1965.90h26.31v5.26h-26.31zM451.90 1971.16h10.53v5.26h-10.53zM609.79 1971.16h10.53v5.26h-10.53zM625.58 1971.16h10.53v5.26h-10.53zM651.89 1971.16h10.53v5.26h-10.53zM762.42 1971.16h10.53v5.26h-10.53zM799.26 1971.16h21.05v5.26h-21.05zM851.89 1971.16h10.53v5.26h-10.53zM867.68 1971.16h10.53v5.26h-10.53zM888.73 1971.16h10.53v5.26h-10.53zM915.04 1971.16h10.53v5.26h-10.53zM941.36 1971.16h10.53v5.26h-10.53zM999.25 1971.16h10.53v5.26h-10.53zM451.90 1976.43h10.53v5.26h-10.53zM609.79 1976.43h10.53v5.26h-10.53zM625.58 1976.43h10.53v5.26h-10.53zM651.89 1976.43h10.53v5.26h-10.53zM762.42 1976.43h10.53v5.26h-10.53zM809.78 1976.43h10.53v5.26h-10.53zM851.89 1976.43h10.53v5.26h-10.53zM867.68 1976.43h10.53v5.26h-10.53zM893.99 1976.43h10.53v5.26h-10.53zM915.04 1976.43h10.53v5.26h-10.53zM941.36 1976.43h10.53v5.26h-10.53zM999.25 1976.43h10.53v5.26h-10.53zM451.90 1981.69h10.53v5.26h-10.53zM494.00 1981.69h21.05v5.26h-21.05zM525.58 1981.69h15.79v5.26h-15.79zM546.63 1981.69h36.84v5.26h-36.84zM604.53 1981.69h10.53v5.26h-10.53zM625.58 1981.69h10.53v5.26h-10.53zM651.89 1981.69h10.53v5.26h-10.53zM672.95 1981.69h21.05v5.26h-21.05zM704.52 1981.69h26.31v5.26h-26.31zM746.63 1981.69h26.31v5.26h-26.31zM809.78 1981.69h10.53v5.26h-10.53zM846.62 1981.69h10.53v5.26h-10.53zM867.68 1981.69h10.53v5.26h-10.53zM893.99 1981.69h10.53v5.26h-10.53zM915.04 1981.69h10.53v5.26h-10.53zM941.36 1981.69h10.53v5.26h-10.53zM999.25 1981.69h15.79v5.26h-15.79zM1025.57 1981.69h21.05v5.26h-21.05zM1057.14 1981.69h26.31v5.26h-26.31zM451.90 1986.95h26.31v5.26h-26.31zM509.79 1986.95h10.53v5.26h-10.53zM525.58 1986.95h10.53v5.26h-10.53zM546.63 1986.95h10.53v5.26h-10.53zM562.42 1986.95h10.53v5.26h-10.53zM578.21 1986.95h10.53v5.26h-10.53zM604.53 1986.95h10.53v5.26h-10.53zM625.58 1986.95h31.58v5.26h-31.58zM667.68 1986.95h10.53v5.26h-10.53zM688.74 1986.95h10.53v5.26h-10.53zM704.52 1986.95h15.79v5.26h-15.79zM725.58 1986.95h10.53v5.26h-10.53zM741.37 1986.95h10.53v5.26h-10.53zM762.42 1986.95h10.53v5.26h-10.53zM809.78 1986.95h10.53v5.26h-10.53zM846.62 1986.95h10.53v5.26h-10.53zM867.68 1986.95h10.53v5.26h-10.53zM893.99 1986.95h10.53v5.26h-10.53zM915.04 1986.95h10.53v5.26h-10.53zM941.36 1986.95h10.53v5.26h-10.53zM999.25 1986.95h10.53v5.26h-10.53zM1020.30 1986.95h10.53v5.26h-10.53zM1041.36 1986.95h10.53v5.26h-10.53zM1057.14 1986.95h10.53v5.26h-10.53zM1078.20 1986.95h10.53v5.26h-10.53zM451.90 1992.22h10.53v5.26h-10.53zM494.00 1992.22h26.31v5.26h-26.31zM525.58 1992.22h10.53v5.26h-10.53zM546.63 1992.22h10.53v5.26h-10.53zM562.42 1992.22h10.53v5.26h-10.53zM578.21 1992.22h10.53v5.26h-10.53zM599.26 1992.22h10.53v5.26h-10.53zM625.58 1992.22h10.53v5.26h-10.53zM667.68 1992.22h10.53v5.26h-10.53zM688.74 1992.22h10.53v5.26h-10.53zM704.52 1992.22h10.53v5.26h-10.53zM725.58 1992.22h10.53v5.26h-10.53zM741.37 1992.22h10.53v5.26h-10.53zM762.42 1992.22h10.53v5.26h-10.53zM809.78 1992.22h10.53v5.26h-10.53zM841.36 1992.22h10.53v5.26h-10.53zM867.68 1992.22h10.53v5.26h-10.53zM893.99 1992.22h10.53v5.26h-10.53zM915.04 1992.22h10.53v5.26h-10.53zM941.36 1992.22h10.53v5.26h-10.53zM999.25 1992.22h10.53v5.26h-10.53zM1020.30 1992.22h10.53v5.26h-10.53zM1041.36 1992.22h10.53v5.26h-10.53zM1057.14 1992.22h10.53v5.26h-10.53zM1078.20 1992.22h10.53v5.26h-10.53zM451.90 1997.48h10.53v5.26h-10.53zM488.74 1997.48h10.53v5.26h-10.53zM509.79 1997.48h10.53v5.26h-10.53zM525.58 1997.48h10.53v5.26h-10.53zM546.63 1997.48h10.53v5.26h-10.53zM562.42 1997.48h10.53v5.26h-10.53zM578.21 1997.48h10.53v5.26h-10.53zM599.26 1997.48h10.53v5.26h-10.53zM625.58 1997.48h10.53v5.26h-10.53zM667.68 1997.48h10.53v5.26h-10.53zM688.74 1997.48h10.53v5.26h-10.53zM704.52 1997.48h10.53v5.26h-10.53zM725.58 1997.48h10.53v5.26h-10.53zM741.37 1997.48h10.53v5.26h-10.53zM762.42 1997.48h10.53v5.26h-10.53zM809.78 1997.48h10.53v5.26h-10.53zM841.36 1997.48h10.53v5.26h-10.53zM867.68 1997.48h10.53v5.26h-10.53zM893.99 1997.48h10.53v5.26h-10.53zM915.04 1997.48h10.53v5.26h-10.53zM941.36 1997.48h10.53v5.26h-10.53zM999.25 1997.48h10.53v5.26h-10.53zM1020.30 1997.48h10.53v5.26h-10.53zM1041.36 1997.48h10.53v5.26h-10.53zM1057.14 1997.48h10.53v5.26h-10.53zM1078.20 1997.48h10.53v5.26h-10.53zM451.90 2002.74h10.53v5.26h-10.53zM488.74 2002.74h10.53v5.26h-10.53zM509.79 2002.74h10.53v5.26h-10.53zM525.58 2002.74h10.53v5.26h-10.53zM546.63 2002.74h10.53v5.26h-10.53zM562.42 2002.74h10.53v5.26h-10.53zM578.21 2002.74h10.53v5.26h-10.53zM594.00 2002.74h10.53v5.26h-10.53zM625.58 2002.74h10.53v5.26h-10.53zM667.68 2002.74h10.53v5.26h-10.53zM688.74 2002.74h10.53v5.26h-10.53zM704.52 2002.74h10.53v5.26h-10.53zM725.58 2002.74h10.53v5.26h-10.53zM741.37 2002.74h10.53v5.26h-10.53zM762.42 2002.74h10.53v5.26h-10.53zM809.78 2002.74h10.53v5.26h-10.53zM836.10 2002.74h10.53v5.26h-10.53zM867.68 2002.74h10.53v5.26h-10.53zM888.73 2002.74h10.53v5.26h-10.53zM915.04 2002.74h10.53v5.26h-10.53zM941.36 2002.74h10.53v5.26h-10.53zM999.25 2002.74h10.53v5.26h-10.53zM1020.30 2002.74h10.53v5.26h-10.53zM1041.36 2002.74h10.53v5.26h-10.53zM1057.14 2002.74h10.53v5.26h-10.53zM1078.20 2002.74h10.53v5.26h-10.53zM451.90 2008.00h10.53v5.26h-10.53zM494.00 2008.00h26.31v5.26h-26.31zM525.58 2008.00h10.53v5.26h-10.53zM546.63 2008.00h10.53v5.26h-10.53zM562.42 2008.00h10.53v5.26h-10.53zM578.21 2008.00h10.53v5.26h-10.53zM594.00 2008.00h10.53v5.26h-10.53zM625.58 2008.00h10.53v5.26h-10.53zM672.95 2008.00h21.05v5.26h-21.05zM704.52 2008.00h10.53v5.26h-10.53zM725.58 2008.00h10.53v5.26h-10.53zM746.63 2008.00h26.31v5.26h-26.31zM809.78 2008.00h10.53v5.26h-10.53zM836.10 2008.00h10.53v5.26h-10.53zM867.68 2008.00h26.31v5.26h-26.31zM920.31 2008.00h26.31v5.26h-26.31zM1004.51 2008.00h10.53v5.26h-10.53zM1025.57 2008.00h21.05v5.26h-21.05zM1057.14 2008.00h26.31v5.26h-26.31zM1057.14 2013.27h10.53v5.26h-10.53zM957.15 2018.53h36.84v5.26h-36.84zM1057.14 2018.53h10.53v5.26h-10.53z" fill="#ff0000" shape-rendering="crispEdges"/>
<path d="M109.60 2176.60h26.31v5.26h-26.31zM267.49 2176.60h10.53v5.26h-10.53zM283.28 2176.60h31.58v5.26h-31.58zM325.38 2176.60h10.53v5.26h-10.53zM109.60 2181.86h10.53v5.26h-10.53zM130.65 2181.86h10.53v5.26h-10.53zM193.81 2181.86h10.53v5.26h-10.53zM267.49 2181.86h10.53v5.26h-10.53zM293.80 2181.86h10.53v5.26h-10.53zM109.60 2187.13h10.53v5.26h-10.53zM135.91 2187.13h10.53v5.26h-10.53zM193.81 2187.13h10.53v5.26h-10.53zM267.49 2187.13h10.53v5.26h-10.53zM293.80 2187.13h10.53v5.26h-10.53zM109.60 2192.39h10.53v5.26h-10.53zM135.91 2192.39h10.53v5.26h-10.53zM162.23 2192.39h21.05v5.26h-21.05zM193.81 2192.39h15.79v5.26h-15.79zM220.12 2192.39h21.05v5.26h-21.05zM262.23 2192.39h10.53v5.26h-10.53zM293.80 2192.39h10.53v5.26h-10.53zM325.38 2192.39h10.53v5.26h-10.53zM341.17 2192.39h36.84v5.26h-36.84zM393.80 2192.39h21.05v5.26h-21.05zM425.38 2192.39h10.53v5.26h-10.53zM109.60 2197.65h10.53v5.26h-10.53zM135.91 2197.65h10.53v5.26h-10.53zM178.02 2197.65h10.53v5.26h-10.53zM193.81 2197.65h10.53v5.26h-10.53zM214.86 2197.65h10.53v5.26h-10.53zM235.91 2197.65h10.53v5.26h-10.53zM262.23 2197.65h10.53v5.26h-10.53zM293.80 2197.65h10.53v5.26h-10.53zM325.38 2197.65h10.53v5.26h-10.53zM341.17 2197.65h10.53v5.26h-10.53zM356.96 2197.65h10.53v5.26h-10.53zM372.75 2197.65h10.53v5.26h-10.53zM388.54 2197.65h10.53v5.26h-10.53zM409.59 2197.65h10.53v5.26h-10.53zM109.60 2202.91h10.53v5.26h-10.53zM135.91 2202.91h10.53v5.26h-10.53zM162.23 2202.91h26.31v5.26h-26.31zM193.81 2202.91h10.53v5.26h-10.53zM214.86 2202.91h31.58v5.26h-31.58zM256.96 2202.91h10.53v5.26h-10.53zM293.80 2202.91h10.53v5.26h-10.53zM325.38 2202.91h10.53v5.26h-10.53zM341.17 2202.91h10.53v5.26h-10.53zM356.96 2202.91h10.53v5.26h-10.53zM372.75 2202.91h10.53v5.26h-10.53zM388.54 2202.91h31.58v5.26h-31.58zM109.60 2208.18h10.53v5.26h-10.53zM135.91 2208.18h10.53v5.26h-10.53zM156.97 2208.18h10.53v5.26h-10.53zM178.02 2208.18h10.53v5.26h-10.53zM193.81 2208.18h10.53v5.26h-10.53zM214.86 2208.18h10.53v5.26h-10.53zM256.96 2208.18h10.53v5.26h-10.53zM293.80 2208.18h10.53v5.26h-10.53zM325.38 2208.18h10.53v5.26h-10.53zM341.17 2208.18h10.53v5.26h-10.53zM356.96 2208.18h10.53v5.26h-10.53zM372.75 2208.18h10.53v5.26h-10.53zM388.54 2208.18h10.53v5.26h-10.53zM109.60 2213.44h10.53v5.26h-10.53zM130.65 2213.44h10.53v5.26h-10.53zM156.97 2213.44h10.53v5.26h-10.53zM178.02 2213.44h10.53v5.26h-10.53zM193.81 2213.44h10.53v5.26h-10.53zM214.86 2213.44h10.53v5.26h-10.53zM235.91 2213.44h10.53v5.26h-10.53zM251.70 2213.44h10.53v5.26h-10.53zM293.80 2213.44h10.53v5.26h-10.53zM325.38 2213.44h10.53v5.26h-10.53zM341.17 2213.44h10.53v5.26h-10.53zM356.96 2213.44h10.53v5.26h-10.53zM372.75 2213.44h10.53v5.26h-10.53zM388.54 2213.44h10.53v5.26h-10.53zM409.59 2213.44h10.53v5.26h-10.53zM109.60 2218.70h26.31v5.26h-26.31zM162.23 2218.70h26.31v5.26h-26.31zM199.07 2218.70h10.53v5.26h-10.53zM220.12 2218.70h21.05v5.26h-21.05zM251.70 2218.70h10.53v5.26h-10.53zM293.80 2218.70h10.53v5.26h-10.53zM325.38 2218.70h10.53v5.26h-10.53zM341.17 2218.70h10.53v5.26h-10.53zM356.96 2218.70h10.53v5.26h-10.53zM372.75 2218.70h10.53v5.26h-10.53zM393.80 2218.70h21.05v5.26h-21.05zM425.38 2218.70h10.53v5.26h-10.53z" fill="#000" shape-rendering="crispEdges"/>
<path d="M120.29 2282.00h10.53v5.26h-10.53zM236.07 2282.00h10.53v5.26h-10.53zM251.86 2282.00h10.53v5.26h-10.53zM346.60 2282.00h10.53v5.26h-10.53zM120.29 2287.26h10.53v5.26h-10.53zM236.07 2287.26h10.53v5.26h-10.53zM267.65 2287.26h10.53v5.26h-10.53zM346.60 2287.26h10.53v5.26h-10.53zM115.03 2292.53h21.05v5.26h-21.05zM236.07 2292.53h10.53v5.26h-10.53zM267.65 2292.53h10.53v5.26h-10.53zM346.60 2292.53h10.53v5.26h-10.53zM115.03 2297.79h21.05v5.26h-21.05zM151.87 2297.79h36.84v5.26h-36.84zM199.23 2297.79h26.31v5.26h-26.31zM236.07 2297.79h10.53v5.26h-10.53zM251.86 2297.79h10.53v5.26h-10.53zM267.65 2297.79h15.79v5.26h-15.79zM288.70 2297.79h10.53v5.26h-10.53zM309.76 2297.79h10.53v5.26h-10.53zM330.81 2297.79h26.31v5.26h-26.31zM367.65 2297.79h21.05v5.26h-21.05zM109.76 2303.05h10.53v5.26h-10.53zM130.81 2303.05h10.53v5.26h-10.53zM151.87 2303.05h10.53v5.26h-10.53zM167.66 2303.05h10.53v5.26h-10.53zM183.44 2303.05h10.53v5.26h-10.53zM199.23 2303.05h10.53v5.26h-10.53zM220.29 2303.05h10.53v5.26h-10.53zM236.07 2303.05h10.53v5.26h-10.53zM251.86 2303.05h10.53v5.26h-10.53zM267.65 2303.05h10.53v5.26h-10.53zM288.70 2303.05h10.53v5.26h-10.53zM309.76 2303.05h10.53v5.26h-10.53zM325.55 2303.05h10.53v5.26h-10.53zM346.60 2303.05h10.53v5.26h-10.53zM362.39 2303.05h10.53v5.26h-10.53zM383.44 2303.05h10.53v5.26h-10.53zM109.76 2308.32h10.53v5.26h-10.53zM130.81 2308.32h10.53v5.26h-10.53zM151.87 2308.32h10.53v5.26h-10.53zM167.66 2308.32h10.53v5.26h-10.53zM183.44 2308.32h10.53v5.26h-10.53zM199.23 2308.32h10.53v5.26h-10.53zM220.29 2308.32h10.53v5.26h-10.53zM236.07 2308.32h10.53v5.26h-10.53zM251.86 2308.32h10.53v5.26h-10.53zM267.65 2308.32h10.53v5.26h-10.53zM288.70 2308.32h10.53v5.26h-10.53zM309.76 2308.32h10.53v5.26h-10.53zM325.55 2308.32h10.53v5.26h-10.53zM346.60 2308.32h10.53v5.26h-10.53zM362.39 2308.32h31.58v5.26h-31.58zM109.76 2313.58h31.58v5.26h-31.58zM151.87 2313.58h10.53v5.26h-10.53zM167.66 2313.58h10.53v5.26h-10.53zM183.44 2313.58h10.53v5.26h-10.53zM199.23 2313.58h10.53v5.26h-10.53zM220.29 2313.58h10.53v5.26h-10.53zM236.07 2313.58h10.53v5.26h-10.53zM251.86 2313.58h10.53v5.26h-10.53zM267.65 2313.58h10.53v5.26h-10.53zM288.70 2313.58h10.53v5.26h-10.53zM309.76 2313.58h10.53v5.26h-10.53zM325.55 2313.58h10.53v5.26h-10.53zM346.60 2313.58h10.53v5.26h-10.53zM362.39 2313.58h10.53v5.26h-10.53zM104.50 2318.84h10.53v5.26h-10.53zM136.08 2318.84h10.53v5.26h-10.53zM151.87 2318.84h10.53v5.26h-10.53zM167.66 2318.84h10.53v5.26h-10.53zM183.44 2318.84h10.53v5.26h-10.53zM199.23 2318.84h10.53v5.26h-10.53zM220.29 2318.84h10.53v5.26h-10.53zM236.07 2318.84h10.53v5.26h-10.53zM251.86 2318.84h10.53v5.26h-10.53zM267.65 2318.84h10.53v5.26h-10.53zM288.70 2318.84h10.53v5.26h-10.53zM304.49 2318.84h15.79v5.26h-15.79zM325.55 2318.84h10.53v5.26h-10.53zM346.60 2318.84h10.53v5.26h-10.53zM362.39 2318.84h10.53v5.26h-10.53zM383.44 2318.84h10.53v5.26h-10.53zM104.50 2324.10h10.53v5.26h-10.53zM136.08 2324.10h10.53v5.26h-10.53zM151.87 2324.10h10.53v5.26h-10.53zM167.66 2324.10h10.53v5.26h-10.53zM183.44 2324.10h10.53v5.26h-10.53zM199.23 2324.10h26.31v5.26h-26.31zM236.07 2324.10h10.53v5.26h-10.53zM251.86 2324.10h10.53v5.26h-10.53zM272.92 2324.10h10.53v5.26h-10.53zM293.97 2324.10h26.31v5.26h-26.31zM330.81 2324.10h26.31v5.26h-26.31zM367.65 2324.10h21.05v5.26h-21.05zM199.23 2329.37h10.53v5.26h-10.53zM199.23 2334.63h10.53v5.26h-10.53z" fill="#000" shape-rendering="crispEdges"/>
<path d="M1163.20 2150.40h31.58v5.26h-31.58zM1568.45 2150.40h21.05v5.26h-21.05zM1626.34 2150.40h21.05v5.26h-21.05zM1663.18 2150.40h21.05v5.26h-21.05zM1163.20 2155.66h10.53v5.26h-10.53zM1421.09 2155.66h10.53v5.26h-10.53zM1563.19 2155.66h10.53v5.26h-10.53zM1584.24 2155.66h10.53v5.26h-10.53zM1621.08 2155.66h10.53v5.26h-10.53zM1642.13 2155.66h10.53v5.26h-10.53zM1657.92 2155.66h10.53v5.26h-10.53zM1678.97 2155.66h10.53v5.26h-10.53zM1163.20 2160.93h10.53v5.26h-10.53zM1421.09 2160.93h10.53v5.26h-10.53zM1563.19 2160.93h10.53v5.26h-10.53zM1584.24 2160.93h10.53v5.26h-10.53zM1621.08 2160.93h10.53v5.26h-10.53zM1642.13 2160.93h10.53v5.26h-10.53zM1657.92 2160.93h10.53v5.26h-10.53zM1678.97 2160.93h10.53v5.26h-10.53zM1163.20 2166.19h10.53v5.26h-10.53zM1205.30 2166.19h10.53v5.26h-10.53zM1221.09 2166.19h10.53v5.26h-10.53zM1236.88 2166.19h26.31v5.26h-26.31zM1278.99 2166.19h21.05v5.26h-21.05zM1310.56 2166.19h26.31v5.26h-26.31zM1352.67 2166.19h21.05v5.26h-21.05zM1384.25 2166.19h26.31v5.26h-26.31zM1421.09 2166.19h15.79v5.26h-15.79zM1484.24 2166.19h15.79v5.26h-15.79zM1563.19 2166.19h10.53v5.26h-10.53zM1584.24 2166.19h10.53v5.26h-10.53zM1621.08 2166.19h10.53v5.26h-10.53zM1642.13 2166.19h10.53v5.26h-10.53zM1657.92 2166.19h10.53v5.26h-10.53zM1678.97 2166.19h10.53v5.26h-10.53zM1163.20 2171.45h26.31v5.26h-26.31zM1205.30 2171.45h10.53v5.26h-10.53zM1221.09 2171.45h10.53v5.26h-10.53zM1236.88 2171.45h10.53v5.26h-10.53zM1257.93 2171.45h10.53v5.26h-10.53zM1273.72 2171.45h10.53v5.26h-10.53zM1294.78 2171.45h10.53v5.26h-10.53zM1310.56 2171.45h15.79v5.26h-15.79zM1331.62 2171.45h10.53v5.26h-10.53zM1347.40 2171.45h10.53v5.26h-10.53zM1368.46 2171.45h10.53v5.26h-10.53zM1384.25 2171.45h15.79v5.26h-15.79zM1405.30 2171.45h10.53v5.26h-10.53zM1421.09 2171.45h10.53v5.26h-10.53zM1484.24 2171.45h10.53v5.26h-10.53zM1526.35 2171.45h31.58v5.26h-31.58zM1563.19 2171.45h10.53v5.26h-10.53zM1584.24 2171.45h10.53v5.26h-10.53zM1626.34 2171.45h26.31v5.26h-26.31zM1663.18 2171.45h26.31v5.26h-26.31zM1163.20 2176.72h10.53v5.26h-10.53zM1210.57 2176.72h15.79v5.26h-15.79zM1236.88 2176.72h10.53v5.26h-10.53zM1257.93 2176.72h10.53v5.26h-10.53zM1273.72 2176.72h10.53v5.26h-10.53zM1294.78 2176.72h10.53v5.26h-10.53zM1310.56 2176.72h10.53v5.26h-10.53zM1331.62 2176.72h10.53v5.26h-10.53zM1347.40 2176.72h31.58v5.26h-31.58zM1384.25 2176.72h10.53v5.26h-10.53zM1405.30 2176.72h10.53v5.26h-10.53zM1421.09 2176.72h10.53v5.26h-10.53zM1484.24 2176.72h10.53v5.26h-10.53zM1563.19 2176.72h10.53v5.26h-10.53zM1584.24 2176.72h10.53v5.26h-10.53zM1642.13 2176.72h10.53v5.26h-10.53zM1678.97 2176.72h10.53v5.26h-10.53zM1163.20 2181.98h10.53v5.26h-10.53zM1210.57 2181.98h15.79v5.26h-15.79zM1236.88 2181.98h10.53v5.26h-10.53zM1257.93 2181.98h10.53v5.26h-10.53zM1273.72 2181.98h10.53v5.26h-10.53zM1294.78 2181.98h10.53v5.26h-10.53zM1310.56 2181.98h10.53v5.26h-10.53zM1331.62 2181.98h10.53v5.26h-10.53zM1347.40 2181.98h10.53v5.26h-10.53zM1384.25 2181.98h10.53v5.26h-10.53zM1405.30 2181.98h10.53v5.26h-10.53zM1421.09 2181.98h10.53v5.26h-10.53zM1484.24 2181.98h10.53v5.26h-10.53zM1526.35 2181.98h31.58v5.26h-31.58zM1563.19 2181.98h10.53v5.26h-10.53zM1584.24 2181.98h10.53v5.26h-10.53zM1642.13 2181.98h10.53v5.26h-10.53zM1678.97 2181.98h10.53v5.26h-10.53zM1163.20 2187.24h10.53v5.26h-10.53zM1205.30 2187.24h10.53v5.26h-10.53zM1221.09 2187.24h10.53v5.26h-10.53zM1236.88 2187.24h10.53v5.26h-10.53zM1257.93 2187.24h10.53v5.26h-10.53zM1273.72 2187.24h10.53v5.26h-10.53zM1294.78 2187.24h10.53v5.26h-10.53zM1310.56 2187.24h10.53v5.26h-10.53zM1331.62 2187.24h10.53v5.26h-10.53zM1347.40 2187.24h10.53v5.26h-10.53zM1368.46 2187.24h10.53v5.26h-10.53zM1384.25 2187.24h10.53v5.26h-10.53zM1405.30 2187.24h10.53v5.26h-10.53zM1421.09 2187.24h10.53v5.26h-10.53zM1484.24 2187.24h10.53v5.26h-10.53zM1563.19 2187.24h10.53v5.26h-10.53zM1584.24 2187.24h10.53v5.26h-10.53zM1621.08 2187.24h10.53v5.26h-10.53zM1642.13 2187.24h10.53v5.26h-10.53zM1657.92 2187.24h10.53v5.26h-10.53zM1678.97 2187.24h10.53v5.26h-10.53zM1163.20 2192.50h31.58v5.26h-31.58zM1205.30 2192.50h10.53v5.26h-10.53zM1221.09 2192.50h10.53v5.26h-10.53zM1236.88 2192.50h26.31v5.26h-26.31zM1278.99 2192.50h21.05v5.26h-21.05zM1310.56 2192.50h10.53v5.26h-10.53zM1331.62 2192.50h10.53v5.26h-10.53zM1352.67 2192.50h21.05v5.26h-21.05zM1384.25 2192.50h10.53v5.26h-10.53zM1405.30 2192.50h10.53v5.26h-10.53zM1426.35 2192.50h10.53v5.26h-10.53zM1447.40 2192.50h10.53v5.26h-10.53zM1484.24 2192.50h10.53v5.26h-10.53zM1568.45 2192.50h21.05v5.26h-21.05zM1605.29 2192.50h10.53v5.26h-10.53zM1626.34 2192.50h21.05v5.26h-21.05zM1663.18 2192.50h21.05v5.26h-21.05zM1236.88 2197.77h10.53v5.26h-10.53zM1442.14 2197.77h10.53v5.26h-10.53zM1236.88 2203.03h10.53v5.26h-10.53z" fill="#000" shape-rendering="crispEdges"/>
<path d="M1173.69 2255.80h10.53v5.26h-10.53zM1205.27 2255.80h10.53v5.26h-10.53zM1347.37 2255.80h10.53v5.26h-10.53zM1473.68 2255.80h10.53v5.26h-10.53zM1173.69 2261.06h10.53v5.26h-10.53zM1205.27 2261.06h10.53v5.26h-10.53zM1347.37 2261.06h10.53v5.26h-10.53zM1473.68 2261.06h10.53v5.26h-10.53zM1168.43 2266.33h21.05v5.26h-21.05zM1205.27 2266.33h10.53v5.26h-10.53zM1347.37 2266.33h10.53v5.26h-10.53zM1473.68 2266.33h10.53v5.26h-10.53zM1168.43 2271.59h21.05v5.26h-21.05zM1205.27 2271.59h10.53v5.26h-10.53zM1226.32 2271.59h21.05v5.26h-21.05zM1257.90 2271.59h15.79v5.26h-15.79zM1278.95 2271.59h36.84v5.26h-36.84zM1347.37 2271.59h10.53v5.26h-10.53zM1368.42 2271.59h21.05v5.26h-21.05zM1400.00 2271.59h10.53v5.26h-10.53zM1421.05 2271.59h10.53v5.26h-10.53zM1442.10 2271.59h21.05v5.26h-21.05zM1473.68 2271.59h10.53v5.26h-10.53zM1489.47 2271.59h10.53v5.26h-10.53zM1163.16 2276.85h10.53v5.26h-10.53zM1184.22 2276.85h10.53v5.26h-10.53zM1205.27 2276.85h10.53v5.26h-10.53zM1242.11 2276.85h10.53v5.26h-10.53zM1257.90 2276.85h10.53v5.26h-10.53zM1278.95 2276.85h10.53v5.26h-10.53zM1294.74 2276.85h10.53v5.26h-10.53zM1310.53 2276.85h10.53v5.26h-10.53zM1347.37 2276.85h10.53v5.26h-10.53zM1363.16 2276.85h10.53v5.26h-10.53zM1384.21 2276.85h10.53v5.26h-10.53zM1400.00 2276.85h10.53v5.26h-10.53zM1421.05 2276.85h10.53v5.26h-10.53zM1436.84 2276.85h10.53v5.26h-10.53zM1457.89 2276.85h10.53v5.26h-10.53zM1473.68 2276.85h10.53v5.26h-10.53zM1163.16 2282.12h10.53v5.26h-10.53zM1184.22 2282.12h10.53v5.26h-10.53zM1205.27 2282.12h10.53v5.26h-10.53zM1226.32 2282.12h26.31v5.26h-26.31zM1257.90 2282.12h10.53v5.26h-10.53zM1278.95 2282.12h10.53v5.26h-10.53zM1294.74 2282.12h10.53v5.26h-10.53zM1310.53 2282.12h10.53v5.26h-10.53zM1347.37 2282.12h10.53v5.26h-10.53zM1363.16 2282.12h31.58v5.26h-31.58zM1405.26 2282.12h21.05v5.26h-21.05zM1436.84 2282.12h31.58v5.26h-31.58zM1473.68 2282.12h10.53v5.26h-10.53zM1163.16 2287.38h31.58v5.26h-31.58zM1205.27 2287.38h10.53v5.26h-10.53zM1221.06 2287.38h10.53v5.26h-10.53zM1242.11 2287.38h10.53v5.26h-10.53zM1257.90 2287.38h10.53v5.26h-10.53zM1278.95 2287.38h10.53v5.26h-10.53zM1294.74 2287.38h10.53v5.26h-10.53zM1310.53 2287.38h10.53v5.26h-10.53zM1347.37 2287.38h10.53v5.26h-10.53zM1363.16 2287.38h10.53v5.26h-10.53zM1405.26 2287.38h21.05v5.26h-21.05zM1436.84 2287.38h10.53v5.26h-10.53zM1473.68 2287.38h10.53v5.26h-10.53zM1157.90 2292.64h10.53v5.26h-10.53zM1189.48 2292.64h10.53v5.26h-10.53zM1205.27 2292.64h10.53v5.26h-10.53zM1221.06 2292.64h10.53v5.26h-10.53zM1242.11 2292.64h10.53v5.26h-10.53zM1257.90 2292.64h10.53v5.26h-10.53zM1278.95 2292.64h10.53v5.26h-10.53zM1294.74 2292.64h10.53v5.26h-10.53zM1310.53 2292.64h10.53v5.26h-10.53zM1347.37 2292.64h10.53v5.26h-10.53zM1363.16 2292.64h10.53v5.26h-10.53zM1384.21 2292.64h10.53v5.26h-10.53zM1410.52 2292.64h10.53v5.26h-10.53zM1436.84 2292.64h10.53v5.26h-10.53zM1457.89 2292.64h10.53v5.26h-10.53zM1473.68 2292.64h10.53v5.26h-10.53zM1157.90 2297.90h10.53v5.26h-10.53zM1189.48 2297.90h10.53v5.26h-10.53zM1205.27 2297.90h10.53v5.26h-10.53zM1226.32 2297.90h26.31v5.26h-26.31zM1257.90 2297.90h10.53v5.26h-10.53zM1278.95 2297.90h10.53v5.26h-10.53zM1294.74 2297.90h10.53v5.26h-10.53zM1310.53 2297.90h10.53v5.26h-10.53zM1347.37 2297.90h10.53v5.26h-10.53zM1368.42 2297.90h21.05v5.26h-21.05zM1410.52 2297.90h10.53v5.26h-10.53zM1442.10 2297.90h21.05v5.26h-21.05zM1473.68 2297.90h10.53v5.26h-10.53zM1489.47 2297.90h10.53v5.26h-10.53z" fill="#000" shape-rendering="crispEdges"/>
<path d="M1163.00 2361.90h31.58v5.26h-31.58zM1257.73 2361.90h10.53v5.26h-10.53zM1436.68 2361.90h10.53v5.26h-10.53zM1494.57 2361.90h10.53v5.26h-10.53zM1163.00 2367.16h10.53v5.26h-10.53zM1236.68 2367.16h10.53v5.26h-10.53zM1357.73 2367.16h10.53v5.26h-10.53zM1436.68 2367.16h10.53v5.26h-10.53zM1494.57 2367.16h10.53v5.26h-10.53zM1547.20 2367.16h10.53v5.26h-10.53zM1163.00 2372.43h10.53v5.26h-10.53zM1236.68 2372.43h10.53v5.26h-10.53zM1357.73 2372.43h10.53v5.26h-10.53zM1436.68 2372.43h10.53v5.26h-10.53zM1494.57 2372.43h10.53v5.26h-10.53zM1547.20 2372.43h10.53v5.26h-10.53zM1163.00 2377.69h10.53v5.26h-10.53zM1210.37 2377.69h15.79v5.26h-15.79zM1236.68 2377.69h15.79v5.26h-15.79zM1257.73 2377.69h10.53v5.26h-10.53zM1273.52 2377.69h36.84v5.26h-36.84zM1326.15 2377.69h21.05v5.26h-21.05zM1357.73 2377.69h15.79v5.26h-15.79zM1384.05 2377.69h21.05v5.26h-21.05zM1420.89 2377.69h26.31v5.26h-26.31zM1478.78 2377.69h26.31v5.26h-26.31zM1515.62 2377.69h21.05v5.26h-21.05zM1547.20 2377.69h15.79v5.26h-15.79zM1573.51 2377.69h21.05v5.26h-21.05zM1605.09 2377.69h10.53v5.26h-10.53zM1163.00 2382.95h26.31v5.26h-26.31zM1205.10 2382.95h10.53v5.26h-10.53zM1220.89 2382.95h10.53v5.26h-10.53zM1236.68 2382.95h10.53v5.26h-10.53zM1257.73 2382.95h10.53v5.26h-10.53zM1273.52 2382.95h10.53v5.26h-10.53zM1289.31 2382.95h10.53v5.26h-10.53zM1305.10 2382.95h10.53v5.26h-10.53zM1341.94 2382.95h10.53v5.26h-10.53zM1357.73 2382.95h10.53v5.26h-10.53zM1378.78 2382.95h10.53v5.26h-10.53zM1399.84 2382.95h10.53v5.26h-10.53zM1415.62 2382.95h10.53v5.26h-10.53zM1436.68 2382.95h10.53v5.26h-10.53zM1473.52 2382.95h10.53v5.26h-10.53zM1494.57 2382.95h10.53v5.26h-10.53zM1531.41 2382.95h10.53v5.26h-10.53zM1547.20 2382.95h10.53v5.26h-10.53zM1568.25 2382.95h10.53v5.26h-10.53zM1589.30 2382.95h10.53v5.26h-10.53zM1163.00 2388.22h10.53v5.26h-10.53zM1210.37 2388.22h10.53v5.26h-10.53zM1236.68 2388.22h10.53v5.26h-10.53zM1257.73 2388.22h10.53v5.26h-10.53zM1273.52 2388.22h10.53v5.26h-10.53zM1289.31 2388.22h10.53v5.26h-10.53zM1305.10 2388.22h10.53v5.26h-10.53zM1326.15 2388.22h26.31v5.26h-26.31zM1357.73 2388.22h10.53v5.26h-10.53zM1378.78 2388.22h31.58v5.26h-31.58zM1415.62 2388.22h10.53v5.26h-10.53zM1436.68 2388.22h10.53v5.26h-10.53zM1473.52 2388.22h10.53v5.26h-10.53zM1494.57 2388.22h10.53v5.26h-10.53zM1515.62 2388.22h26.31v5.26h-26.31zM1547.20 2388.22h10.53v5.26h-10.53zM1568.25 2388.22h31.58v5.26h-31.58zM1163.00 2393.48h10.53v5.26h-10.53zM1215.63 2393.48h10.53v5.26h-10.53zM1236.68 2393.48h10.53v5.26h-10.53zM1257.73 2393.48h10.53v5.26h-10.53zM1273.52 2393.48h10.53v5.26h-10.53zM1289.31 2393.48h10.53v5.26h-10.53zM1305.10 2393.48h10.53v5.26h-10.53zM1320.89 2393.48h10.53v5.26h-10.53zM1341.94 2393.48h10.53v5.26h-10.53zM1357.73 2393.48h10.53v5.26h-10.53zM1378.78 2393.48h10.53v5.26h-10.53zM1415.62 2393.48h10.53v5.26h-10.53zM1436.68 2393.48h10.53v5.26h-10.53zM1473.52 2393.48h10.53v5.26h-10.53zM1494.57 2393.48h10.53v5.26h-10.53zM1510.36 2393.48h10.53v5.26h-10.53zM1531.41 2393.48h10.53v5.26h-10.53zM1547.20 2393.48h10.53v5.26h-10.53zM1568.25 2393.48h10.53v5.26h-10.53zM1163.00 2398.74h10.53v5.26h-10.53zM1205.10 2398.74h10.53v5.26h-10.53zM1220.89 2398.74h10.53v5.26h-10.53zM1236.68 2398.74h10.53v5.26h-10.53zM1257.73 2398.74h10.53v5.26h-10.53zM1273.52 2398.74h10.53v5.26h-10.53zM1289.31 2398.74h10.53v5.26h-10.53zM1305.10 2398.74h10.53v5.26h-10.53zM1320.89 2398.74h10.53v5.26h-10.53zM1341.94 2398.74h10.53v5.26h-10.53zM1357.73 2398.74h10.53v5.26h-10.53zM1378.78 2398.74h10.53v5.26h-10.53zM1399.84 2398.74h10.53v5.26h-10.53zM1415.62 2398.74h10.53v5.26h-10.53zM1436.68 2398.74h10.53v5.26h-10.53zM1473.52 2398.74h10.53v5.26h-10.53zM1494.57 2398.74h10.53v5.26h-10.53zM1510.36 2398.74h10.53v5.26h-10.53zM1531.41 2398.74h10.53v5.26h-10.53zM1547.20 2398.74h10.53v5.26h-10.53zM1568.25 2398.74h10.53v5.26h-10.53zM1589.30 2398.74h10.53v5.26h-10.53zM1163.00 2404.00h31.58v5.26h-31.58zM1210.37 2404.00h15.79v5.26h-15.79zM1241.94 2404.00h10.53v5.26h-10.53zM1257.73 2404.00h10.53v5.26h-10.53zM1273.52 2404.00h10.53v5.26h-10.53zM1289.31 2404.00h10.53v5.26h-10.53zM1305.10 2404.00h10.53v5.26h-10.53zM1326.15 2404.00h26.31v5.26h-26.31zM1362.99 2404.00h10.53v5.26h-10.53zM1384.05 2404.00h21.05v5.26h-21.05zM1420.89 2404.00h26.31v5.26h-26.31zM1478.78 2404.00h26.31v5.26h-26.31zM1515.62 2404.00h26.31v5.26h-26.31zM1552.46 2404.00h10.53v5.26h-10.53zM1573.51 2404.00h21.05v5.26h-21.05zM1605.09 2404.00h10.53v5.26h-10.53z" fill="#000" shape-rendering="crispEdges"/>
<path d="M104.16 2070.90h21.05v5.26h-21.05zM98.90 2076.16h5.26v5.26h-5.26zM125.22 2076.16h5.26v5.26h-5.26zM98.90 2081.43h5.26v5.26h-5.26zM98.90 2086.69h5.26v5.26h-5.26zM135.74 2086.69h5.26v5.26h-5.26zM156.79 2086.69h5.26v5.26h-5.26zM167.32 2086.69h10.53v5.26h-10.53zM188.37 2086.69h10.53v5.26h-10.53zM214.69 2086.69h15.79v5.26h-15.79zM241.00 2086.69h10.53v5.26h-10.53zM98.90 2091.95h5.26v5.26h-5.26zM135.74 2091.95h5.26v5.26h-5.26zM156.79 2091.95h5.26v5.26h-5.26zM167.32 2091.95h5.26v5.26h-5.26zM183.11 2091.95h5.26v5.26h-5.26zM198.90 2091.95h5.26v5.26h-5.26zM209.42 2091.95h5.26v5.26h-5.26zM230.47 2091.95h5.26v5.26h-5.26zM241.00 2091.95h5.26v5.26h-5.26zM98.90 2097.22h5.26v5.26h-5.26zM135.74 2097.22h5.26v5.26h-5.26zM156.79 2097.22h5.26v5.26h-5.26zM167.32 2097.22h5.26v5.26h-5.26zM188.37 2097.22h5.26v5.26h-5.26zM209.42 2097.22h5.26v5.26h-5.26zM230.47 2097.22h5.26v5.26h-5.26zM241.00 2097.22h5.26v5.26h-5.26zM98.90 2102.48h5.26v5.26h-5.26zM135.74 2102.48h5.26v5.26h-5.26zM156.79 2102.48h5.26v5.26h-5.26zM167.32 2102.48h5.26v5.26h-5.26zM193.63 2102.48h5.26v5.26h-5.26zM209.42 2102.48h5.26v5.26h-5.26zM230.47 2102.48h5.26v5.26h-5.26zM241.00 2102.48h5.26v5.26h-5.26zM98.90 2107.74h5.26v5.26h-5.26zM125.22 2107.74h5.26v5.26h-5.26zM135.74 2107.74h5.26v5.26h-5.26zM151.53 2107.74h10.53v5.26h-10.53zM167.32 2107.74h5.26v5.26h-5.26zM183.11 2107.74h5.26v5.26h-5.26zM198.90 2107.74h5.26v5.26h-5.26zM209.42 2107.74h5.26v5.26h-5.26zM230.47 2107.74h5.26v5.26h-5.26zM241.00 2107.74h5.26v5.26h-5.26zM104.16 2113.00h21.05v5.26h-21.05zM141.00 2113.00h10.53v5.26h-10.53zM156.79 2113.00h5.26v5.26h-5.26zM167.32 2113.00h5.26v5.26h-5.26zM188.37 2113.00h10.53v5.26h-10.53zM214.69 2113.00h15.79v5.26h-15.79zM241.00 2113.00h5.26v5.26h-5.26z" fill="#000" shape-rendering="crispEdges"/>
<path d="M515.13 2176.70h5.26v5.26h-5.26zM546.70 2176.70h5.26v5.26h-5.26zM588.81 2176.70h15.79v5.26h-15.79zM620.39 2176.70h15.79v5.26h-15.79zM667.75 2176.70h15.79v5.26h-15.79zM699.33 2176.70h15.79v5.26h-15.79zM730.91 2176.70h15.79v5.26h-15.79zM757.22 2176.70h26.31v5.26h-26.31zM504.60 2181.96h15.79v5.26h-15.79zM536.18 2181.96h15.79v5.26h-15.79zM583.55 2181.96h5.26v5.26h-5.26zM604.60 2181.96h5.26v5.26h-5.26zM615.12 2181.96h5.26v5.26h-5.26zM636.17 2181.96h5.26v5.26h-5.26zM662.49 2181.96h5.26v5.26h-5.26zM683.54 2181.96h5.26v5.26h-5.26zM694.07 2181.96h5.26v5.26h-5.26zM715.12 2181.96h5.26v5.26h-5.26zM725.65 2181.96h5.26v5.26h-5.26zM746.70 2181.96h5.26v5.26h-5.26zM757.22 2181.96h5.26v5.26h-5.26zM515.13 2187.23h5.26v5.26h-5.26zM546.70 2187.23h5.26v5.26h-5.26zM583.55 2187.23h5.26v5.26h-5.26zM604.60 2187.23h5.26v5.26h-5.26zM615.12 2187.23h5.26v5.26h-5.26zM683.54 2187.23h5.26v5.26h-5.26zM694.07 2187.23h5.26v5.26h-5.26zM715.12 2187.23h5.26v5.26h-5.26zM746.70 2187.23h5.26v5.26h-5.26zM757.22 2187.23h5.26v5.26h-5.26zM515.13 2192.49h5.26v5.26h-5.26zM546.70 2192.49h5.26v5.26h-5.26zM583.55 2192.49h5.26v5.26h-5.26zM604.60 2192.49h5.26v5.26h-5.26zM615.12 2192.49h5.26v5.26h-5.26zM683.54 2192.49h5.26v5.26h-5.26zM694.07 2192.49h5.26v5.26h-5.26zM715.12 2192.49h5.26v5.26h-5.26zM746.70 2192.49h5.26v5.26h-5.26zM757.22 2192.49h21.05v5.26h-21.05zM515.13 2197.75h5.26v5.26h-5.26zM546.70 2197.75h5.26v5.26h-5.26zM583.55 2197.75h5.26v5.26h-5.26zM604.60 2197.75h5.26v5.26h-5.26zM615.12 2197.75h21.05v5.26h-21.05zM678.28 2197.75h5.26v5.26h-5.26zM694.07 2197.75h5.26v5.26h-5.26zM715.12 2197.75h5.26v5.26h-5.26zM741.44 2197.75h5.26v5.26h-5.26zM757.22 2197.75h5.26v5.26h-5.26zM778.28 2197.75h5.26v5.26h-5.26zM515.13 2203.01h5.26v5.26h-5.26zM546.70 2203.01h5.26v5.26h-5.26zM583.55 2203.01h5.26v5.26h-5.26zM604.60 2203.01h5.26v5.26h-5.26zM615.12 2203.01h5.26v5.26h-5.26zM636.17 2203.01h5.26v5.26h-5.26zM673.02 2203.01h5.26v5.26h-5.26zM694.07 2203.01h5.26v5.26h-5.26zM715.12 2203.01h5.26v5.26h-5.26zM736.17 2203.01h5.26v5.26h-5.26zM778.28 2203.01h5.26v5.26h-5.26zM515.13 2208.28h5.26v5.26h-5.26zM546.70 2208.28h5.26v5.26h-5.26zM583.55 2208.28h5.26v5.26h-5.26zM604.60 2208.28h5.26v5.26h-5.26zM615.12 2208.28h5.26v5.26h-5.26zM636.17 2208.28h5.26v5.26h-5.26zM667.75 2208.28h5.26v5.26h-5.26zM694.07 2208.28h5.26v5.26h-5.26zM715.12 2208.28h5.26v5.26h-5.26zM730.91 2208.28h5.26v5.26h-5.26zM778.28 2208.28h5.26v5.26h-5.26zM515.13 2213.54h5.26v5.26h-5.26zM546.70 2213.54h5.26v5.26h-5.26zM583.55 2213.54h5.26v5.26h-5.26zM604.60 2213.54h5.26v5.26h-5.26zM615.12 2213.54h5.26v5.26h-5.26zM636.17 2213.54h5.26v5.26h-5.26zM662.49 2213.54h5.26v5.26h-5.26zM694.07 2213.54h5.26v5.26h-5.26zM715.12 2213.54h5.26v5.26h-5.26zM725.65 2213.54h5.26v5.26h-5.26zM757.22 2213.54h5.26v5.26h-5.26zM778.28 2213.54h5.26v5.26h-5.26zM515.13 2218.80h5.26v5.26h-5.26zM546.70 2218.80h5.26v5.26h-5.26zM567.76 2218.80h5.26v5.26h-5.26zM588.81 2218.80h15.79v5.26h-15.79zM620.39 2218.80h15.79v5.26h-15.79zM646.70 2218.80h5.26v5.26h-5.26zM662.49 2218.80h26.31v5.26h-26.31zM699.33 2218.80h15.79v5.26h-15.79zM725.65 2218.80h26.31v5.26h-26.31zM762.49 2218.80h15.79v5.26h-15.79z" fill="#000" shape-rendering="crispEdges"/>
<path d="M510.06 2281.90h15.79v5.26h-15.79zM641.64 2281.90h5.26v5.26h-5.26zM652.16 2281.90h5.26v5.26h-5.26zM504.80 2287.16h5.26v5.26h-5.26zM525.85 2287.16h5.26v5.26h-5.26zM641.64 2287.16h5.26v5.26h-5.26zM652.16 2287.16h5.26v5.26h-5.26zM504.80 2292.43h5.26v5.26h-5.26zM641.64 2292.43h5.26v5.26h-5.26zM652.16 2292.43h5.26v5.26h-5.26zM504.80 2297.69h5.26v5.26h-5.26zM552.17 2297.69h15.79v5.26h-15.79zM573.22 2297.69h10.53v5.26h-10.53zM599.53 2297.69h21.05v5.26h-21.05zM636.38 2297.69h5.26v5.26h-5.26zM652.16 2297.69h5.26v5.26h-5.26zM504.80 2302.95h21.05v5.26h-21.05zM552.17 2302.95h5.26v5.26h-5.26zM567.96 2302.95h5.26v5.26h-5.26zM583.75 2302.95h5.26v5.26h-5.26zM594.27 2302.95h5.26v5.26h-5.26zM615.32 2302.95h5.26v5.26h-5.26zM636.38 2302.95h5.26v5.26h-5.26zM652.16 2302.95h5.26v5.26h-5.26zM504.80 2308.22h5.26v5.26h-5.26zM525.85 2308.22h5.26v5.26h-5.26zM552.17 2308.22h5.26v5.26h-5.26zM567.96 2308.22h5.26v5.26h-5.26zM583.75 2308.22h5.26v5.26h-5.26zM594.27 2308.22h5.26v5.26h-5.26zM615.32 2308.22h5.26v5.26h-5.26zM631.11 2308.22h5.26v5.26h-5.26zM652.16 2308.22h5.26v5.26h-5.26zM504.80 2313.48h5.26v5.26h-5.26zM525.85 2313.48h5.26v5.26h-5.26zM552.17 2313.48h5.26v5.26h-5.26zM567.96 2313.48h5.26v5.26h-5.26zM583.75 2313.48h5.26v5.26h-5.26zM594.27 2313.48h5.26v5.26h-5.26zM615.32 2313.48h5.26v5.26h-5.26zM631.11 2313.48h5.26v5.26h-5.26zM652.16 2313.48h5.26v5.26h-5.26zM504.80 2318.74h5.26v5.26h-5.26zM525.85 2318.74h5.26v5.26h-5.26zM552.17 2318.74h5.26v5.26h-5.26zM567.96 2318.74h5.26v5.26h-5.26zM583.75 2318.74h5.26v5.26h-5.26zM594.27 2318.74h5.26v5.26h-5.26zM615.32 2318.74h5.26v5.26h-5.26zM625.85 2318.74h5.26v5.26h-5.26zM652.16 2318.74h5.26v5.26h-5.26zM510.06 2324.00h15.79v5.26h-15.79zM552.17 2324.00h5.26v5.26h-5.26zM567.96 2324.00h5.26v5.26h-5.26zM583.75 2324.00h5.26v5.26h-5.26zM599.53 2324.00h21.05v5.26h-21.05zM625.85 2324.00h5.26v5.26h-5.26zM652.16 2324.00h26.31v5.26h-26.31zM615.32 2329.27h5.26v5.26h-5.26zM594.27 2334.53h21.05v5.26h-21.05z" fill="#000" shape-rendering="crispEdges"/>
<path d="M1136.79 2071.40h5.26v5.26h-5.26zM1299.94 2071.40h5.26v5.26h-5.26zM1399.94 2071.40h5.26v5.26h-5.26zM1136.79 2076.66h5.26v5.26h-5.26zM1384.15 2076.66h5.26v5.26h-5.26zM1131.53 2081.93h5.26v5.26h-5.26zM1142.05 2081.93h5.26v5.26h-5.26zM1384.15 2081.93h5.26v5.26h-5.26zM1131.53 2087.19h5.26v5.26h-5.26zM1142.05 2087.19h5.26v5.26h-5.26zM1163.10 2087.19h21.05v5.26h-21.05zM1194.68 2087.19h21.05v5.26h-21.05zM1226.26 2087.19h10.53v5.26h-10.53zM1247.31 2087.19h15.79v5.26h-15.79zM1273.63 2087.19h5.26v5.26h-5.26zM1289.42 2087.19h5.26v5.26h-5.26zM1299.94 2087.19h5.26v5.26h-5.26zM1310.47 2087.19h15.79v5.26h-15.79zM1331.52 2087.19h10.53v5.26h-10.53zM1357.84 2087.19h15.79v5.26h-15.79zM1384.15 2087.19h10.53v5.26h-10.53zM1399.94 2087.19h5.26v5.26h-5.26zM1415.73 2087.19h15.79v5.26h-15.79zM1442.04 2087.19h5.26v5.26h-5.26zM1452.57 2087.19h10.53v5.26h-10.53zM1126.26 2092.45h5.26v5.26h-5.26zM1147.32 2092.45h5.26v5.26h-5.26zM1163.10 2092.45h5.26v5.26h-5.26zM1184.16 2092.45h5.26v5.26h-5.26zM1194.68 2092.45h5.26v5.26h-5.26zM1215.73 2092.45h5.26v5.26h-5.26zM1226.26 2092.45h5.26v5.26h-5.26zM1242.05 2092.45h5.26v5.26h-5.26zM1263.10 2092.45h5.26v5.26h-5.26zM1273.63 2092.45h5.26v5.26h-5.26zM1289.42 2092.45h5.26v5.26h-5.26zM1299.94 2092.45h5.26v5.26h-5.26zM1310.47 2092.45h5.26v5.26h-5.26zM1326.26 2092.45h5.26v5.26h-5.26zM1342.05 2092.45h5.26v5.26h-5.26zM1373.62 2092.45h5.26v5.26h-5.26zM1384.15 2092.45h5.26v5.26h-5.26zM1399.94 2092.45h5.26v5.26h-5.26zM1410.46 2092.45h5.26v5.26h-5.26zM1431.52 2092.45h5.26v5.26h-5.26zM1442.04 2092.45h10.53v5.26h-10.53zM1463.10 2092.45h5.26v5.26h-5.26zM1126.26 2097.72h5.26v5.26h-5.26zM1147.32 2097.72h5.26v5.26h-5.26zM1163.10 2097.72h5.26v5.26h-5.26zM1184.16 2097.72h5.26v5.26h-5.26zM1194.68 2097.72h5.26v5.26h-5.26zM1215.73 2097.72h5.26v5.26h-5.26zM1226.26 2097.72h5.26v5.26h-5.26zM1242.05 2097.72h5.26v5.26h-5.26zM1263.10 2097.72h5.26v5.26h-5.26zM1278.89 2097.72h10.53v5.26h-10.53zM1299.94 2097.72h5.26v5.26h-5.26zM1310.47 2097.72h5.26v5.26h-5.26zM1326.26 2097.72h5.26v5.26h-5.26zM1342.05 2097.72h5.26v5.26h-5.26zM1357.84 2097.72h21.05v5.26h-21.05zM1384.15 2097.72h5.26v5.26h-5.26zM1399.94 2097.72h5.26v5.26h-5.26zM1410.46 2097.72h5.26v5.26h-5.26zM1431.52 2097.72h5.26v5.26h-5.26zM1442.04 2097.72h5.26v5.26h-5.26zM1463.10 2097.72h5.26v5.26h-5.26zM1126.26 2102.98h26.31v5.26h-26.31zM1163.10 2102.98h5.26v5.26h-5.26zM1184.16 2102.98h5.26v5.26h-5.26zM1194.68 2102.98h5.26v5.26h-5.26zM1215.73 2102.98h5.26v5.26h-5.26zM1226.26 2102.98h5.26v5.26h-5.26zM1242.05 2102.98h5.26v5.26h-5.26zM1263.10 2102.98h5.26v5.26h-5.26zM1278.89 2102.98h10.53v5.26h-10.53zM1299.94 2102.98h5.26v5.26h-5.26zM1310.47 2102.98h5.26v5.26h-5.26zM1326.26 2102.98h5.26v5.26h-5.26zM1342.05 2102.98h5.26v5.26h-5.26zM1352.57 2102.98h5.26v5.26h-5.26zM1373.62 2102.98h5.26v5.26h-5.26zM1384.15 2102.98h5.26v5.26h-5.26zM1399.94 2102.98h5.26v5.26h-5.26zM1410.46 2102.98h5.26v5.26h-5.26zM1431.52 2102.98h5.26v5.26h-5.26zM1442.04 2102.98h5.26v5.26h-5.26zM1463.10 2102.98h5.26v5.26h-5.26zM1121.00 2108.24h5.26v5.26h-5.26zM1152.58 2108.24h5.26v5.26h-5.26zM1163.10 2108.24h5.26v5.26h-5.26zM1184.16 2108.24h5.26v5.26h-5.26zM1194.68 2108.24h5.26v5.26h-5.26zM1215.73 2108.24h5.26v5.26h-5.26zM1226.26 2108.24h5.26v5.26h-5.26zM1242.05 2108.24h5.26v5.26h-5.26zM1263.10 2108.24h5.26v5.26h-5.26zM1273.63 2108.24h5.26v5.26h-5.26zM1289.42 2108.24h5.26v5.26h-5.26zM1299.94 2108.24h5.26v5.26h-5.26zM1310.47 2108.24h5.26v5.26h-5.26zM1326.26 2108.24h5.26v5.26h-5.26zM1342.05 2108.24h5.26v5.26h-5.26zM1352.57 2108.24h5.26v5.26h-5.26zM1373.62 2108.24h5.26v5.26h-5.26zM1384.15 2108.24h5.26v5.26h-5.26zM1399.94 2108.24h5.26v5.26h-5.26zM1410.46 2108.24h5.26v5.26h-5.26zM1431.52 2108.24h5.26v5.26h-5.26zM1442.04 2108.24h5.26v5.26h-5.26zM1463.10 2108.24h5.26v5.26h-5.26zM1121.00 2113.50h5.26v5.26h-5.26zM1152.58 2113.50h5.26v5.26h-5.26zM1163.10 2113.50h21.05v5.26h-21.05zM1194.68 2113.50h21.05v5.26h-21.05zM1226.26 2113.50h5.26v5.26h-5.26zM1247.31 2113.50h15.79v5.26h-15.79zM1273.63 2113.50h5.26v5.26h-5.26zM1289.42 2113.50h5.26v5.26h-5.26zM1299.94 2113.50h5.26v5.26h-5.26zM1310.47 2113.50h5.26v5.26h-5.26zM1326.26 2113.50h5.26v5.26h-5.26zM1342.05 2113.50h5.26v5.26h-5.26zM1357.84 2113.50h21.05v5.26h-21.05zM1389.41 2113.50h5.26v5.26h-5.26zM1399.94 2113.50h5.26v5.26h-5.26zM1415.73 2113.50h15.79v5.26h-15.79zM1442.04 2113.50h5.26v5.26h-5.26zM1463.10 2113.50h5.26v5.26h-5.26zM1163.10 2118.77h5.26v5.26h-5.26zM1194.68 2118.77h5.26v5.26h-5.26zM1163.10 2124.03h5.26v5.26h-5.26zM1194.68 2124.03h5.26v5.26h-5.26z" fill="#000" shape-rendering="crispEdges"/>
<path d="M1858.03 2255.80h5.26v5.26h-5.26zM1884.34 2255.80h15.79v5.26h-15.79zM2015.92 2255.80h5.26v5.26h-5.26zM2026.44 2255.80h5.26v5.26h-5.26zM1847.50 2261.06h15.79v5.26h-15.79zM1879.08 2261.06h5.26v5.26h-5.26zM1900.13 2261.06h5.26v5.26h-5.26zM2015.92 2261.06h5.26v5.26h-5.26zM2026.44 2261.06h5.26v5.26h-5.26zM1858.03 2266.33h5.26v5.26h-5.26zM1879.08 2266.33h5.26v5.26h-5.26zM1900.13 2266.33h5.26v5.26h-5.26zM2015.92 2266.33h5.26v5.26h-5.26zM2026.44 2266.33h5.26v5.26h-5.26zM1858.03 2271.59h5.26v5.26h-5.26zM1879.08 2271.59h5.26v5.26h-5.26zM1900.13 2271.59h5.26v5.26h-5.26zM1926.44 2271.59h15.79v5.26h-15.79zM1947.50 2271.59h10.53v5.26h-10.53zM1973.81 2271.59h21.05v5.26h-21.05zM2010.65 2271.59h5.26v5.26h-5.26zM2026.44 2271.59h5.26v5.26h-5.26zM1858.03 2276.85h5.26v5.26h-5.26zM1879.08 2276.85h5.26v5.26h-5.26zM1900.13 2276.85h5.26v5.26h-5.26zM1926.44 2276.85h5.26v5.26h-5.26zM1942.23 2276.85h5.26v5.26h-5.26zM1958.02 2276.85h5.26v5.26h-5.26zM1968.55 2276.85h5.26v5.26h-5.26zM1989.60 2276.85h5.26v5.26h-5.26zM2010.65 2276.85h5.26v5.26h-5.26zM2026.44 2276.85h5.26v5.26h-5.26zM1858.03 2282.12h5.26v5.26h-5.26zM1879.08 2282.12h5.26v5.26h-5.26zM1900.13 2282.12h5.26v5.26h-5.26zM1926.44 2282.12h5.26v5.26h-5.26zM1942.23 2282.12h5.26v5.26h-5.26zM1958.02 2282.12h5.26v5.26h-5.26zM1968.55 2282.12h5.26v5.26h-5.26zM1989.60 2282.12h5.26v5.26h-5.26zM2005.39 2282.12h5.26v5.26h-5.26zM2026.44 2282.12h5.26v5.26h-5.26zM1858.03 2287.38h5.26v5.26h-5.26zM1879.08 2287.38h5.26v5.26h-5.26zM1900.13 2287.38h5.26v5.26h-5.26zM1926.44 2287.38h5.26v5.26h-5.26zM1942.23 2287.38h5.26v5.26h-5.26zM1958.02 2287.38h5.26v5.26h-5.26zM1968.55 2287.38h5.26v5.26h-5.26zM1989.60 2287.38h5.26v5.26h-5.26zM2005.39 2287.38h5.26v5.26h-5.26zM2026.44 2287.38h5.26v5.26h-5.26zM1858.03 2292.64h5.26v5.26h-5.26zM1879.08 2292.64h5.26v5.26h-5.26zM1900.13 2292.64h5.26v5.26h-5.26zM1926.44 2292.64h5.26v5.26h-5.26zM1942.23 2292.64h5.26v5.26h-5.26zM1958.02 2292.64h5.26v5.26h-5.26zM1968.55 2292.64h5.26v5.26h-5.26zM1989.60 2292.64h5.26v5.26h-5.26zM2000.13 2292.64h5.26v5.26h-5.26zM2026.44 2292.64h5.26v5.26h-5.26zM1858.03 2297.90h5.26v5.26h-5.26zM1884.34 2297.90h15.79v5.26h-15.79zM1926.44 2297.90h5.26v5.26h-5.26zM1942.23 2297.90h5.26v5.26h-5.26zM1958.02 2297.90h5.26v5.26h-5.26zM1973.81 2297.90h21.05v5.26h-21.05zM2000.13 2297.90h5.26v5.26h-5.26zM2026.44 2297.90h26.31v5.26h-26.31zM1989.60 2303.17h5.26v5.26h-5.26zM1968.55 2308.43h21.05v5.26h-21.05z" fill="#000" shape-rendering="crispEdges"/>
<path d="M1884.43 2361.80h5.26v5.26h-5.26zM1916.00 2361.80h5.26v5.26h-5.26zM1958.11 2361.80h15.79v5.26h-15.79zM1989.69 2361.80h15.79v5.26h-15.79zM2037.05 2361.80h15.79v5.26h-15.79zM2068.63 2361.80h15.79v5.26h-15.79zM2100.21 2361.80h15.79v5.26h-15.79zM2126.52 2361.80h26.31v5.26h-26.31zM2173.89 2361.80h26.31v5.26h-26.31zM2231.78 2361.80h5.26v5.26h-5.26zM2252.84 2361.80h26.31v5.26h-26.31zM2310.73 2361.80h5.26v5.26h-5.26zM2337.04 2361.80h15.79v5.26h-15.79zM1873.90 2367.06h15.79v5.26h-15.79zM1905.48 2367.06h15.79v5.26h-15.79zM1952.85 2367.06h5.26v5.26h-5.26zM1973.90 2367.06h5.26v5.26h-5.26zM1984.42 2367.06h5.26v5.26h-5.26zM2005.48 2367.06h5.26v5.26h-5.26zM2031.79 2367.06h5.26v5.26h-5.26zM2052.84 2367.06h5.26v5.26h-5.26zM2063.37 2367.06h5.26v5.26h-5.26zM2084.42 2367.06h5.26v5.26h-5.26zM2094.95 2367.06h5.26v5.26h-5.26zM2116.00 2367.06h5.26v5.26h-5.26zM2126.52 2367.06h5.26v5.26h-5.26zM2194.94 2367.06h5.26v5.26h-5.26zM2221.26 2367.06h15.79v5.26h-15.79zM2252.84 2367.06h5.26v5.26h-5.26zM2300.20 2367.06h15.79v5.26h-15.79zM2331.78 2367.06h5.26v5.26h-5.26zM2352.83 2367.06h5.26v5.26h-5.26zM1884.43 2372.33h5.26v5.26h-5.26zM1916.00 2372.33h5.26v5.26h-5.26zM1952.85 2372.33h5.26v5.26h-5.26zM1973.90 2372.33h5.26v5.26h-5.26zM1984.42 2372.33h5.26v5.26h-5.26zM2052.84 2372.33h5.26v5.26h-5.26zM2063.37 2372.33h5.26v5.26h-5.26zM2084.42 2372.33h5.26v5.26h-5.26zM2116.00 2372.33h5.26v5.26h-5.26zM2126.52 2372.33h5.26v5.26h-5.26zM2189.68 2372.33h5.26v5.26h-5.26zM2231.78 2372.33h5.26v5.26h-5.26zM2252.84 2372.33h5.26v5.26h-5.26zM2310.73 2372.33h5.26v5.26h-5.26zM2331.78 2372.33h5.26v5.26h-5.26zM2352.83 2372.33h5.26v5.26h-5.26zM1884.43 2377.59h5.26v5.26h-5.26zM1916.00 2377.59h5.26v5.26h-5.26zM1952.85 2377.59h5.26v5.26h-5.26zM1973.90 2377.59h5.26v5.26h-5.26zM1984.42 2377.59h5.26v5.26h-5.26zM2052.84 2377.59h5.26v5.26h-5.26zM2063.37 2377.59h5.26v5.26h-5.26zM2084.42 2377.59h5.26v5.26h-5.26zM2116.00 2377.59h5.26v5.26h-5.26zM2126.52 2377.59h21.05v5.26h-21.05zM2189.68 2377.59h5.26v5.26h-5.26zM2205.47 2377.59h5.26v5.26h-5.26zM2231.78 2377.59h5.26v5.26h-5.26zM2252.84 2377.59h21.05v5.26h-21.05zM2284.41 2377.59h5.26v5.26h-5.26zM2310.73 2377.59h5.26v5.26h-5.26zM2331.78 2377.59h5.26v5.26h-5.26zM2352.83 2377.59h5.26v5.26h-5.26zM1884.43 2382.85h5.26v5.26h-5.26zM1916.00 2382.85h5.26v5.26h-5.26zM1952.85 2382.85h5.26v5.26h-5.26zM1973.90 2382.85h5.26v5.26h-5.26zM1984.42 2382.85h21.05v5.26h-21.05zM2047.58 2382.85h5.26v5.26h-5.26zM2063.37 2382.85h5.26v5.26h-5.26zM2084.42 2382.85h5.26v5.26h-5.26zM2110.74 2382.85h5.26v5.26h-5.26zM2126.52 2382.85h5.26v5.26h-5.26zM2147.58 2382.85h5.26v5.26h-5.26zM2184.42 2382.85h5.26v5.26h-5.26zM2231.78 2382.85h5.26v5.26h-5.26zM2252.84 2382.85h5.26v5.26h-5.26zM2273.89 2382.85h5.26v5.26h-5.26zM2310.73 2382.85h5.26v5.26h-5.26zM2331.78 2382.85h5.26v5.26h-5.26zM2352.83 2382.85h5.26v5.26h-5.26zM1884.43 2388.12h5.26v5.26h-5.26zM1916.00 2388.12h5.26v5.26h-5.26zM1952.85 2388.12h5.26v5.26h-5.26zM1973.90 2388.12h5.26v5.26h-5.26zM1984.42 2388.12h5.26v5.26h-5.26zM2005.48 2388.12h5.26v5.26h-5.26zM2042.32 2388.12h5.26v5.26h-5.26zM2063.37 2388.12h5.26v5.26h-5.26zM2084.42 2388.12h5.26v5.26h-5.26zM2105.47 2388.12h5.26v5.26h-5.26zM2147.58 2388.12h5.26v5.26h-5.26zM2184.42 2388.12h5.26v5.26h-5.26zM2231.78 2388.12h5.26v5.26h-5.26zM2273.89 2388.12h5.26v5.26h-5.26zM2310.73 2388.12h5.26v5.26h-5.26zM2331.78 2388.12h5.26v5.26h-5.26zM2352.83 2388.12h5.26v5.26h-5.26zM1884.43 2393.38h5.26v5.26h-5.26zM1916.00 2393.38h5.26v5.26h-5.26zM1952.85 2393.38h5.26v5.26h-5.26zM1973.90 2393.38h5.26v5.26h-5.26zM1984.42 2393.38h5.26v5.26h-5.26zM2005.48 2393.38h5.26v5.26h-5.26zM2037.05 2393.38h5.26v5.26h-5.26zM2063.37 2393.38h5.26v5.26h-5.26zM2084.42 2393.38h5.26v5.26h-5.26zM2100.21 2393.38h5.26v5.26h-5.26zM2147.58 2393.38h5.26v5.26h-5.26zM2179.15 2393.38h5.26v5.26h-5.26zM2231.78 2393.38h5.26v5.26h-5.26zM2273.89 2393.38h5.26v5.26h-5.26zM2310.73 2393.38h5.26v5.26h-5.26zM2331.78 2393.38h5.26v5.26h-5.26zM2352.83 2393.38h5.26v5.26h-5.26zM1884.43 2398.64h5.26v5.26h-5.26zM1916.00 2398.64h5.26v5.26h-5.26zM1952.85 2398.64h5.26v5.26h-5.26zM1973.90 2398.64h5.26v5.26h-5.26zM1984.42 2398.64h5.26v5.26h-5.26zM2005.48 2398.64h5.26v5.26h-5.26zM2031.79 2398.64h5.26v5.26h-5.26zM2063.37 2398.64h5.26v5.26h-5.26zM2084.42 2398.64h5.26v5.26h-5.26zM2094.95 2398.64h5.26v5.26h-5.26zM2126.52 2398.64h5.26v5.26h-5.26zM2147.58 2398.64h5.26v5.26h-5.26zM2179.15 2398.64h5.26v5.26h-5.26zM2231.78 2398.64h5.26v5.26h-5.26zM2252.84 2398.64h5.26v5.26h-5.26zM2273.89 2398.64h5.26v5.26h-5.26zM2310.73 2398.64h5.26v5.26h-5.26zM2331.78 2398.64h5.26v5.26h-5.26zM2352.83 2398.64h5.26v5.26h-5.26zM1884.43 2403.90h5.26v5.26h-5.26zM1916.00 2403.90h5.26v5.26h-5.26zM1937.06 2403.90h5.26v5.26h-5.26zM1958.11 2403.90h15.79v5.26h-15.79zM1989.69 2403.90h15.79v5.26h-15.79zM2016.00 2403.90h5.26v5.26h-5.26zM2031.79 2403.90h26.31v5.26h-26.31zM2068.63 2403.90h15.79v5.26h-15.79zM2094.95 2403.90h26.31v5.26h-26.31zM2131.79 2403.90h15.79v5.26h-15.79zM2179.15 2403.90h5.26v5.26h-5.26zM2205.47 2403.90h5.26v5.26h-5.26zM2231.78 2403.90h5.26v5.26h-5.26zM2258.10 2403.90h15.79v5.26h-15.79zM2284.41 2403.90h5.26v5.26h-5.26zM2310.73 2403.90h5.26v5.26h-5.26zM2337.04 2403.90h15.79v5.26h-15.79z" fill="#000" shape-rendering="crispEdges"/>
</svg>
</body></html>
